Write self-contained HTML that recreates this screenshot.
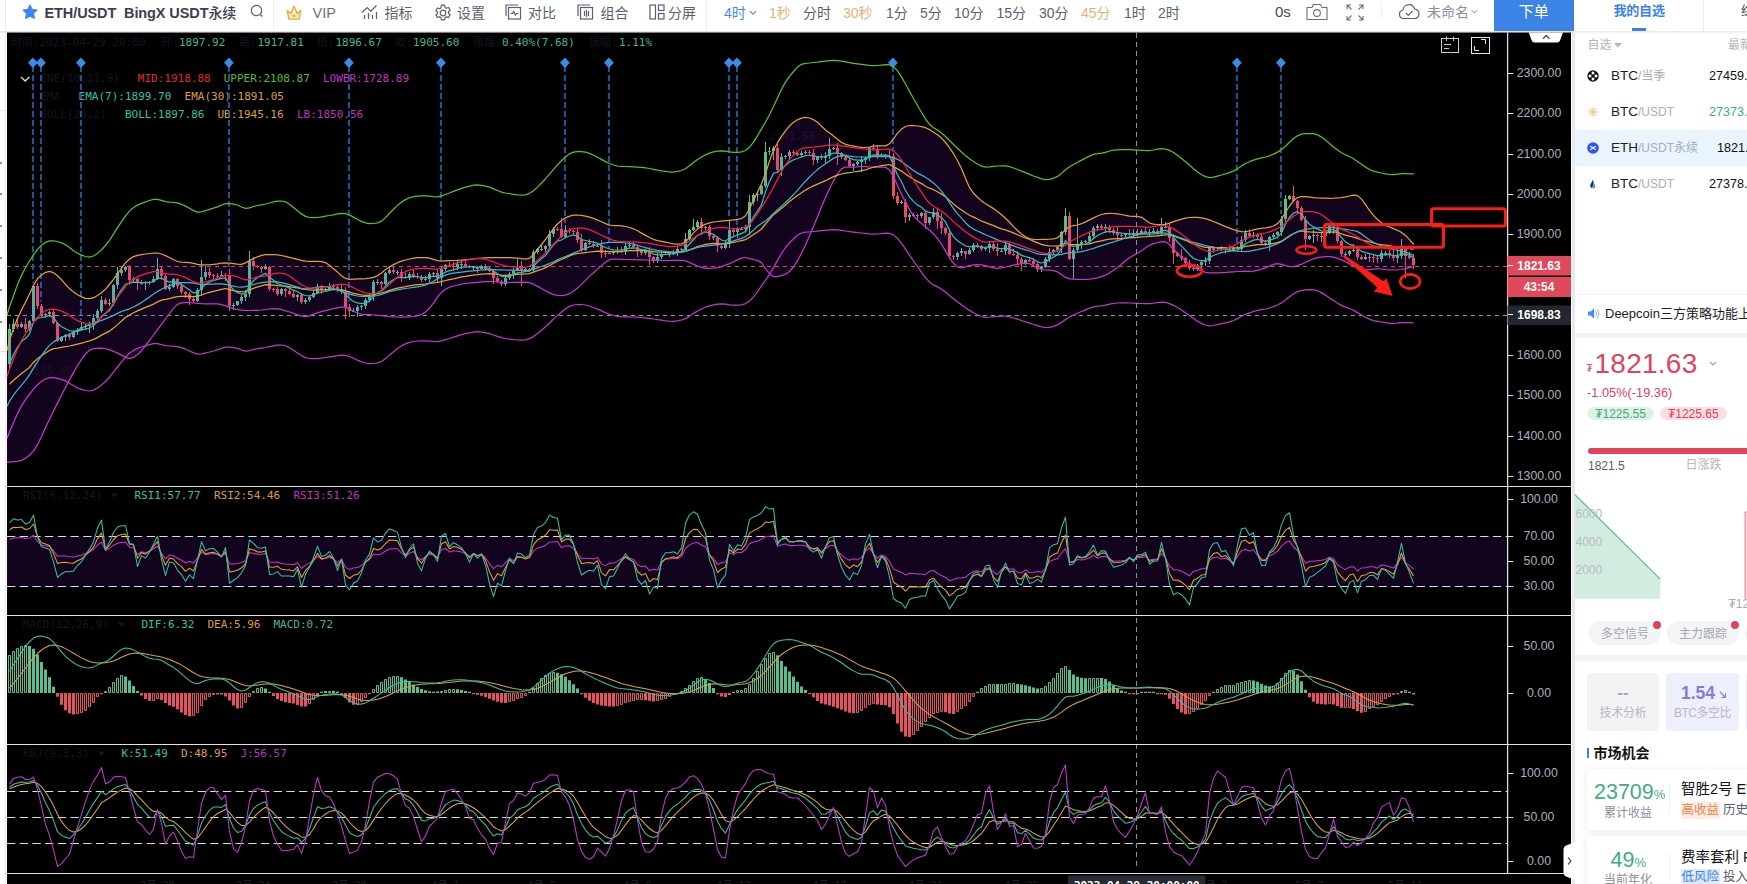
<!DOCTYPE html>
<html lang="zh-CN"><head><meta charset="utf-8"><title>ETH/USDT BingX USDT永续</title>
<style>
*{box-sizing:border-box}
html,body{margin:0;padding:0}
body{width:1747px;height:884px;overflow:hidden;background:#fff;position:relative;font-family:"Liberation Sans","Noto Sans CJK SC",sans-serif;color:#555b6c}
.a{position:absolute;white-space:nowrap}
.tb{position:absolute;top:0;height:26px;line-height:26px;font-size:14px;color:#5a5f70;white-space:nowrap}
.tb.o{color:#e2b27c}
.tb.b{color:#4a86e8}
.sep{position:absolute;width:1px;background:#eceef2}
svg.i{position:absolute;overflow:visible}
.row{position:absolute;left:1575px;width:172px;height:36px}
.nm{position:absolute;left:36px;top:0;line-height:36px;font-size:13.5px;color:#1c1c22;white-space:nowrap}
.nm i{font-style:normal;color:#a8adb8;font-size:12px}
.pr{position:absolute;top:0;line-height:37px;font-size:12.600px;color:#111;white-space:nowrap}
.pill{position:absolute;height:24px;border-radius:12px;background:#f3f4f6;color:#a3a7b0;font-size:12px;line-height:26px;text-align:center}
.dot{position:absolute;width:8px;height:8px;border-radius:4px;background:#e0435a}
</style></head>
<body>
<div class="a" style="left:0;top:0;width:7px;height:884px;background:#fff"></div>
<div class="sep" style="left:5px;top:0;height:884px;background:#e9ebef"></div>
<div class="a" style="left:0;top:31px;width:1574px;height:1px;background:#e4e6ea"></div>
<div class="a" style="left:0;top:32px;width:7px;height:1px;background:#eef0f3"></div>
<div class="a" style="left:0;top:162px;width:2px;height:2px;border-radius:1px;background:#666"></div>
<div class="a" style="left:0;top:193px;width:2px;height:2px;border-radius:1px;background:#666"></div>
<div class="a" style="left:0;top:225px;width:2px;height:2px;border-radius:1px;background:#666"></div>
<div class="a" style="left:0;top:257px;width:2px;height:2px;border-radius:1px;background:#666"></div>
<div class="a" style="left:0;top:289px;width:2px;height:2px;border-radius:1px;background:#666"></div>
<div class="a" style="left:0;top:321px;width:2px;height:2px;border-radius:1px;background:#666"></div>
<div class="a" style="left:0;top:351px;width:6px;height:1px;background:#dfe2e8"></div>
<div class="a" style="left:0;top:110px;width:6px;height:1px;background:#e6e8ec"></div>
<svg class="i" style="left:22px;top:4px" width="16" height="16" viewBox="0 0 16 16"><path d="M8 .8l2.2 4.6 5 .7-3.6 3.5.9 5L8 12.2 3.5 14.6l.9-5L.8 6.1l5-.7z" fill="#3d85ee" stroke="#3d85ee" stroke-width="1" stroke-linejoin="round"/></svg>
<div class="tb" style="left:44.5px;font-weight:bold;color:#3b3f51;font-size:14.5px;letter-spacing:-0.1px">ETH/USDT&nbsp; BingX USDT<span style="font-weight:500;font-size:14px">永续</span></div>
<svg class="i" style="left:250px;top:4px" width="14" height="15" viewBox="0 0 14 15"><circle cx="6.5" cy="6.5" r="5.2" fill="none" stroke="#5a5f70" stroke-width="1.2"/><path d="M10.5 10.5l1.8 2" stroke="#5a5f70" stroke-width="1.2"/></svg>
<div class="sep" style="left:273px;top:0;height:31px"></div>
<svg class="i" style="left:285px;top:4px" width="18" height="17" viewBox="0 0 18 17"><path d="M2.2 6.5l3.6 3L9 2.2l3.2 7.3 3.6-3-1.6 8.7H3.8z" fill="#fde9b8" stroke="#e9a93c" stroke-width="1.3" stroke-linejoin="round"/><path d="M7.3 12h3.4" stroke="#c98a1e" stroke-width="1.1"/></svg>
<div class="tb" style="left:312.5px;font-size:14.5px;color:#6a6f7e">VIP</div>
<svg class="i" style="left:361px;top:4px" width="18" height="16" viewBox="0 0 18 16"><g fill="none" stroke="#5a5f70" stroke-width="1.2"><path d="M1 8.5l5.2-5 3.6 3.6L15.5 1.5"/><path d="M3.5 11v4M7.5 9v6M11.5 11v4M15.5 8v7"/></g></svg>
<div class="tb" style="left:384.5px">指标</div>
<svg class="i" style="left:433.5px;top:3.5px" width="18" height="18" viewBox="0 0 18 18"><g fill="none" stroke="#5a5f70" stroke-width="1.2"><circle cx="9" cy="9" r="2.8"/><path d="M7.4 1.2h3.2l.5 2.2 1.3.75 2.15-.7 1.6 2.8-1.65 1.5v1.5l1.65 1.5-1.6 2.8-2.15-.7-1.3.75-.5 2.2H7.4l-.5-2.2-1.3-.75-2.15.7-1.6-2.8L3.5 9.75v-1.5L1.85 6.75l1.6-2.8 2.15.7 1.3-.75z" stroke-linejoin="round"/></g></svg>
<div class="tb" style="left:457px">设置</div>
<svg class="i" style="left:505px;top:3.5px" width="17" height="17" viewBox="0 0 17 17"><g fill="none" stroke="#5a5f70" stroke-width="1.2"><path d="M1 12V1h12"/><rect x="3.5" y="3.5" width="12" height="11.5"/><path d="M5.5 9.5h2l1.2-2 1.6 3.6 1.2-1.6h2"/></g></svg>
<div class="tb" style="left:528px">对比</div>
<svg class="i" style="left:577px;top:3.5px" width="17" height="17" viewBox="0 0 17 17"><g fill="none" stroke="#5a5f70" stroke-width="1.2"><path d="M1 12V1h12"/><rect x="3.5" y="3.5" width="12" height="11.5"/><path d="M7.5 7v5M9.5 6v7M11.5 7v5"/></g></svg>
<div class="tb" style="left:600.5px">组合</div>
<svg class="i" style="left:648.5px;top:3.5px" width="16" height="17" viewBox="0 0 16 17"><g fill="none" stroke="#5a5f70" stroke-width="1.2"><rect x="1" y="1" width="5.5" height="14"/><rect x="9.5" y="1" width="5.5" height="5.5"/><rect x="9.5" y="9.5" width="5.5" height="5.5"/></g></svg>
<div class="tb" style="left:668px">分屏</div>
<div class="sep" style="left:706px;top:0;height:31px"></div>
<div class="tb b" style="left:724px;top:-0.500px">4时</div>
<div class="tb o" style="left:769px;top:-0.500px">1秒</div>
<div class="tb " style="left:803px;top:-0.500px">分时</div>
<div class="tb o" style="left:843px;top:-0.500px">30秒</div>
<div class="tb " style="left:886px;top:-0.500px">1分</div>
<div class="tb " style="left:920px;top:-0.500px">5分</div>
<div class="tb " style="left:954px;top:-0.500px">10分</div>
<div class="tb " style="left:996.5px;top:-0.500px">15分</div>
<div class="tb " style="left:1039px;top:-0.500px">30分</div>
<div class="tb o" style="left:1081px;top:-0.500px">45分</div>
<div class="tb " style="left:1124px;top:-0.500px">1时</div>
<div class="tb " style="left:1158px;top:-0.500px">2时</div>
<svg class="i" style="left:749px;top:10px" width="8" height="6" viewBox="0 0 8 6"><path d="M1 1.2l3 3 3-3" fill="none" stroke="#4a86e8" stroke-width="1.1"/></svg>
<div class="tb" style="left:1275px;top:-1px;font-size:15px;color:#444a5a">0s</div>
<svg class="i" style="left:1306px;top:2.800px" width="22" height="18" viewBox="0 0 22 18"><g fill="none" stroke="#6a6f80" stroke-width="1.1"><path d="M1 4.5h5l1.4-3h7.2l1.4 3h5v12H1z" stroke-linejoin="round"/><circle cx="11" cy="10" r="3.4"/></g></svg>
<svg class="i" style="left:1346px;top:3.500px" width="18" height="17" viewBox="0 0 18 17"><g fill="none" stroke="#6a6f80" stroke-width="1.1"><path d="M1 5V1h4M1 1l4.5 4.5M13 1h4v4M17 1l-4.5 4.5M1 12v4h4M1 16l4.5-4.5M17 12v4h-4M17 16l-4.5-4.5"/></g></svg>
<div class="sep" style="left:1381px;top:3px;height:16px"></div>
<svg class="i" style="left:1398px;top:2.500px" width="22" height="17" viewBox="0 0 22 17"><g fill="none" stroke="#5a5f70" stroke-width="1.2"><path d="M5.5 15.5a4.3 4.3 0 0 1-.6-8.5A6 6 0 0 1 16.600 6a4.800 4.800 0 0 1 .4 9.500z" stroke-linejoin="round"/><path d="M7.800 9.800l2.500 2.500 4.300-4.500"/></g></svg>
<div class="tb" style="left:1427px;top:-1.500px;color:#8a8f9c">未命名</div>
<svg class="i" style="left:1471px;top:8.500px" width="7" height="6" viewBox="0 0 8 6"><path d="M1 1l3 3 3-3" fill="none" stroke="#6a6f80" stroke-width="1.1"/></svg>
<div class="a" style="left:1493.5px;top:0;width:80.5px;height:31px;background:#3b84e6;color:#fff;font-size:15px;line-height:24px;text-align:center">下单</div>
<svg width="1574" height="884" viewBox="0 0 1574 884" style="position:absolute;left:0;top:0">
<rect x="7" y="32.5" width="1564" height="852" fill="#000"/>
<rect x="7" y="536.5" width="1500" height="50" fill="#13041d"/>
<path d="M7 266.5H1507" stroke="#e0485c" stroke-width="1" stroke-dasharray="4 4" fill="none"/>
<path d="M7 315.5H1507" stroke="#8e98a8" stroke-width="1" stroke-dasharray="4 4" fill="none"/>
<path d="M7 536.5H1507" stroke="#dcdcdc" stroke-width="1" stroke-dasharray="8.3 4.4" fill="none"/>
<path d="M7 586.5H1507" stroke="#dcdcdc" stroke-width="1" stroke-dasharray="8.3 4.4" fill="none"/>
<path d="M7 791.5H1507" stroke="#dcdcdc" stroke-width="1" stroke-dasharray="8.3 4.4" fill="none"/>
<path d="M7 817.5H1507" stroke="#dcdcdc" stroke-width="1" stroke-dasharray="8.3 4.4" fill="none"/>
<path d="M7 843.5H1507" stroke="#dcdcdc" stroke-width="1" stroke-dasharray="8.3 4.4" fill="none"/>
<text x="11" y="46" fill="#131722" style="font-family:'DejaVu Sans Mono','Liberation Mono','Noto Sans CJK SC',monospace;font-size:11px" >时间:2023-04-29 20:00</text>
<text x="161" y="46" fill="#131722" style="font-family:'DejaVu Sans Mono','Liberation Mono','Noto Sans CJK SC',monospace;font-size:11px" >开:</text>
<text x="179" y="46" fill="#43b988" style="font-family:'DejaVu Sans Mono','Liberation Mono','Noto Sans CJK SC',monospace;font-size:11px" >1897.92</text>
<text x="239" y="46" fill="#131722" style="font-family:'DejaVu Sans Mono','Liberation Mono','Noto Sans CJK SC',monospace;font-size:11px" >高:</text>
<text x="257.5" y="46" fill="#43b988" style="font-family:'DejaVu Sans Mono','Liberation Mono','Noto Sans CJK SC',monospace;font-size:11px" >1917.81</text>
<text x="317" y="46" fill="#131722" style="font-family:'DejaVu Sans Mono','Liberation Mono','Noto Sans CJK SC',monospace;font-size:11px" >低:</text>
<text x="335.5" y="46" fill="#43b988" style="font-family:'DejaVu Sans Mono','Liberation Mono','Noto Sans CJK SC',monospace;font-size:11px" >1896.67</text>
<text x="395" y="46" fill="#131722" style="font-family:'DejaVu Sans Mono','Liberation Mono','Noto Sans CJK SC',monospace;font-size:11px" >收:</text>
<text x="413" y="46" fill="#43b988" style="font-family:'DejaVu Sans Mono','Liberation Mono','Noto Sans CJK SC',monospace;font-size:11px" >1905.60</text>
<text x="473" y="46" fill="#131722" style="font-family:'DejaVu Sans Mono','Liberation Mono','Noto Sans CJK SC',monospace;font-size:11px" >涨幅:</text>
<text x="502" y="46" fill="#43b988" style="font-family:'DejaVu Sans Mono','Liberation Mono','Noto Sans CJK SC',monospace;font-size:11px" >0.40%(7.68)</text>
<text x="589" y="46" fill="#131722" style="font-family:'DejaVu Sans Mono','Liberation Mono','Noto Sans CJK SC',monospace;font-size:11px" >振幅:</text>
<text x="619" y="46" fill="#43b988" style="font-family:'DejaVu Sans Mono','Liberation Mono','Noto Sans CJK SC',monospace;font-size:11px" >1.11%</text>
<text x="40.5" y="82" fill="#131722" style="font-family:'DejaVu Sans Mono','Liberation Mono','Noto Sans CJK SC',monospace;font-size:11px" >ENE(10,11,9)</text>
<text x="137.8" y="82" fill="#e02a2a" style="font-family:'DejaVu Sans Mono','Liberation Mono','Noto Sans CJK SC',monospace;font-size:11px" >MID:1918.88</text>
<text x="223.7" y="82" fill="#5bbf1f" style="font-family:'DejaVu Sans Mono','Liberation Mono','Noto Sans CJK SC',monospace;font-size:11px" >UPPER:2108.87</text>
<text x="323" y="82" fill="#c233c2" style="font-family:'DejaVu Sans Mono','Liberation Mono','Noto Sans CJK SC',monospace;font-size:11px" >LOWER:1728.89</text>
<text x="40.5" y="100" fill="#131722" style="font-family:'DejaVu Sans Mono','Liberation Mono','Noto Sans CJK SC',monospace;font-size:11px" >EMA</text>
<text x="78.6" y="100" fill="#2ec4a6" style="font-family:'DejaVu Sans Mono','Liberation Mono','Noto Sans CJK SC',monospace;font-size:11px" >EMA(7):1899.70</text>
<text x="184.6" y="100" fill="#dba03a" style="font-family:'DejaVu Sans Mono','Liberation Mono','Noto Sans CJK SC',monospace;font-size:11px" >EMA(30):1891.05</text>
<text x="40.5" y="118" fill="#131722" style="font-family:'DejaVu Sans Mono','Liberation Mono','Noto Sans CJK SC',monospace;font-size:11px" >BOLL(20,2)</text>
<text x="125" y="118" fill="#2ec4a6" style="font-family:'DejaVu Sans Mono','Liberation Mono','Noto Sans CJK SC',monospace;font-size:11px" >BOLL:1897.86</text>
<text x="217.4" y="118" fill="#dba03a" style="font-family:'DejaVu Sans Mono','Liberation Mono','Noto Sans CJK SC',monospace;font-size:11px" >UB:1945.16</text>
<text x="297" y="118" fill="#c233c2" style="font-family:'DejaVu Sans Mono','Liberation Mono','Noto Sans CJK SC',monospace;font-size:11px" >LB:1850.56</text>
<path d="M21 77l4.2 4 4.2-4" stroke="#dcdcdc" stroke-width="1.3" fill="none"/>
<text x="23" y="499" fill="#131722" style="font-family:'DejaVu Sans Mono','Liberation Mono','Noto Sans CJK SC',monospace;font-size:11px" >RSI(6,12,24)</text>
<text x="134.5" y="499" fill="#2ec4a6" style="font-family:'DejaVu Sans Mono','Liberation Mono','Noto Sans CJK SC',monospace;font-size:11px" >RSI1:57.77</text>
<text x="214" y="499" fill="#dba03a" style="font-family:'DejaVu Sans Mono','Liberation Mono','Noto Sans CJK SC',monospace;font-size:11px" >RSI2:54.46</text>
<text x="293.5" y="499" fill="#c233c2" style="font-family:'DejaVu Sans Mono','Liberation Mono','Noto Sans CJK SC',monospace;font-size:11px" >RSI3:51.26</text>
<path d="M111 493.5h7l-3.5 4z" fill="#131722"/>
<text x="23" y="628" fill="#131722" style="font-family:'DejaVu Sans Mono','Liberation Mono','Noto Sans CJK SC',monospace;font-size:11px" >MACD(12,26,9)</text>
<text x="141.5" y="628" fill="#2ec4a6" style="font-family:'DejaVu Sans Mono','Liberation Mono','Noto Sans CJK SC',monospace;font-size:11px" >DIF:6.32</text>
<text x="207.5" y="628" fill="#dba03a" style="font-family:'DejaVu Sans Mono','Liberation Mono','Noto Sans CJK SC',monospace;font-size:11px" >DEA:5.96</text>
<text x="273.5" y="628" fill="#43b988" style="font-family:'DejaVu Sans Mono','Liberation Mono','Noto Sans CJK SC',monospace;font-size:11px" >MACD:0.72</text>
<path d="M118 622.5h7l-3.5 4z" fill="#131722"/>
<text x="23" y="757" fill="#131722" style="font-family:'DejaVu Sans Mono','Liberation Mono','Noto Sans CJK SC',monospace;font-size:11px" >KDJ(9,3,3)</text>
<text x="121.5" y="757" fill="#2ec4a6" style="font-family:'DejaVu Sans Mono','Liberation Mono','Noto Sans CJK SC',monospace;font-size:11px" >K:51.49</text>
<text x="181" y="757" fill="#dba03a" style="font-family:'DejaVu Sans Mono','Liberation Mono','Noto Sans CJK SC',monospace;font-size:11px" >D:48.95</text>
<text x="240.5" y="757" fill="#c233c2" style="font-family:'DejaVu Sans Mono','Liberation Mono','Noto Sans CJK SC',monospace;font-size:11px" >J:56.57</text>
<path d="M98 751.5h7l-3.5 4z" fill="#131722"/>
<text x="14" y="374" fill="#0b0e15" style="font-family:'DejaVu Sans Mono','Liberation Mono','Noto Sans CJK SC',monospace;font-size:11px" >← 1565.06</text>
<text x="769" y="140" fill="#0d1119" style="font-family:'DejaVu Sans Mono','Liberation Mono','Noto Sans CJK SC',monospace;font-size:11px" >2141.55 →</text>
<path d="M32.9 66V283.0" stroke="#23579c" stroke-width="2" stroke-dasharray="6 3" fill="none"/>
<path d="M32.9 57.5l4.9 5.2-4.9 5.2-4.9-5.2z" fill="#3d8be9"/>
<path d="M40.9 66V301.6" stroke="#23579c" stroke-width="2" stroke-dasharray="6 3" fill="none"/>
<path d="M40.9 57.5l4.9 5.2-4.9 5.2-4.9-5.2z" fill="#3d8be9"/>
<path d="M80.9 66V320.3" stroke="#23579c" stroke-width="2" stroke-dasharray="6 3" fill="none"/>
<path d="M80.9 57.5l4.9 5.2-4.9 5.2-4.9-5.2z" fill="#3d8be9"/>
<path d="M228.9 66V266.7" stroke="#23579c" stroke-width="2" stroke-dasharray="6 3" fill="none"/>
<path d="M228.9 57.5l4.9 5.2-4.9 5.2-4.9-5.2z" fill="#3d8be9"/>
<path d="M348.9 66V301.6" stroke="#23579c" stroke-width="2" stroke-dasharray="6 3" fill="none"/>
<path d="M348.9 57.5l4.9 5.2-4.9 5.2-4.9-5.2z" fill="#3d8be9"/>
<path d="M440.9 66V264.3" stroke="#23579c" stroke-width="2" stroke-dasharray="6 3" fill="none"/>
<path d="M440.9 57.5l4.9 5.2-4.9 5.2-4.9-5.2z" fill="#3d8be9"/>
<path d="M564.9 66V223.3" stroke="#23579c" stroke-width="2" stroke-dasharray="6 3" fill="none"/>
<path d="M564.9 57.5l4.9 5.2-4.9 5.2-4.9-5.2z" fill="#3d8be9"/>
<path d="M608.9 66V248.9" stroke="#23579c" stroke-width="2" stroke-dasharray="6 3" fill="none"/>
<path d="M608.9 57.5l4.9 5.2-4.9 5.2-4.9-5.2z" fill="#3d8be9"/>
<path d="M728.9 66V219.0" stroke="#23579c" stroke-width="2" stroke-dasharray="6 3" fill="none"/>
<path d="M728.9 57.5l4.9 5.2-4.9 5.2-4.9-5.2z" fill="#3d8be9"/>
<path d="M736.9 66V224.8" stroke="#23579c" stroke-width="2" stroke-dasharray="6 3" fill="none"/>
<path d="M736.9 57.5l4.9 5.2-4.9 5.2-4.9-5.2z" fill="#3d8be9"/>
<path d="M892.9 66V151.2" stroke="#23579c" stroke-width="2" stroke-dasharray="6 3" fill="none"/>
<path d="M892.9 57.5l4.9 5.2-4.9 5.2-4.9-5.2z" fill="#3d8be9"/>
<path d="M1236.9 66V244.4" stroke="#23579c" stroke-width="2" stroke-dasharray="6 3" fill="none"/>
<path d="M1236.9 57.5l4.9 5.2-4.9 5.2-4.9-5.2z" fill="#3d8be9"/>
<path d="M1280.9 66V213.8" stroke="#23579c" stroke-width="2" stroke-dasharray="6 3" fill="none"/>
<path d="M1280.9 57.5l4.9 5.2-4.9 5.2-4.9-5.2z" fill="#3d8be9"/>
<path d="M9.5 324V370M13.5 319V332M21.5 322V328M29.5 320V331M33.5 285V322M45.5 313V318M49.5 311V317M61.5 336V342M65.5 334V341M73.5 331V338M77.5 328V335M81.5 322V331M85.5 324V330M89.5 322V333M93.5 314V330M97.5 309V323M101.5 296V313M109.5 299V306M113.5 284V306M117.5 267V289M121.5 266V276M125.5 266V272M133.5 277V283M145.5 281V290M149.5 281V285M153.5 276V283M157.5 258V280M169.5 284V291M173.5 278V288M197.5 288V302M201.5 260V296M205.5 266V280M221.5 271V277M233.5 303V310M237.5 301V306M241.5 295V304M245.5 290V301M249.5 251V297M265.5 264V270M281.5 288V296M297.5 294V301M305.5 298V304M309.5 296V302M313.5 291V298M317.5 284V294M325.5 288V292M329.5 283V290M353.5 308V312M357.5 305V317M361.5 305V310M365.5 298V309M369.5 294V302M373.5 280V301M377.5 279V285M385.5 272V285M389.5 266V274M397.5 270V275M409.5 272V280M425.5 276V281M429.5 272V282M433.5 272V276M441.5 266V286M445.5 264V271M457.5 261V270M461.5 260V269M473.5 266V270M481.5 265V270M505.5 275V286M509.5 272V280M513.5 268V279M517.5 259V271M525.5 267V272M533.5 250V272M537.5 248V254M541.5 244V251M545.5 245V252M549.5 230V249M553.5 227V237M565.5 225V238M585.5 242V251M597.5 245V247M613.5 251V255M617.5 247V254M625.5 243V255M629.5 242V248M645.5 249V255M657.5 253V263M661.5 252V259M669.5 252V257M677.5 246V256M685.5 233V252M689.5 229V240M693.5 219V231M697.5 220V229M705.5 226V230M725.5 241V249M729.5 221V248M737.5 227V238M741.5 227V230M745.5 225V232M749.5 195V235M753.5 193V205M757.5 192V201M761.5 185V195M765.5 142V188M769.5 147V155M773.5 146V160M781.5 153V176M785.5 155V159M789.5 150V159M801.5 151V157M805.5 150V154M817.5 156V163M825.5 152V163M829.5 138V159M833.5 147V150M853.5 163V171M857.5 161V166M861.5 156V172M865.5 157V164M869.5 147V161M881.5 153V157M901.5 200V204M909.5 213V221M913.5 213V217M921.5 212V218M929.5 217V225M933.5 208V219M957.5 252V260M961.5 248V256M969.5 248V255M973.5 243V252M985.5 247V251M989.5 241V253M1001.5 248V252M1005.5 243V255M1025.5 259V265M1041.5 266V272M1045.5 257V268M1049.5 248V262M1053.5 249V255M1057.5 246V252M1061.5 231V253M1065.5 208V235M1073.5 248V279M1077.5 218V252M1081.5 240V249M1085.5 240V243M1089.5 233V244M1093.5 226V238M1097.5 224V231M1105.5 224V233M1125.5 233V237M1133.5 229V238M1141.5 229V235M1149.5 229V237M1153.5 228V234M1161.5 218V236M1165.5 222V228M1197.5 264V271M1201.5 261V268M1205.5 257V266M1209.5 246V264M1217.5 247V251M1221.5 246V251M1233.5 247V252M1241.5 236V252M1245.5 230V242M1253.5 232V238M1269.5 236V251M1273.5 233V238M1277.5 231V236M1281.5 216V236M1285.5 195V222M1289.5 195V200M1309.5 235V240M1313.5 230V243M1321.5 233V242M1325.5 226V237M1329.5 223V234M1345.5 252V256M1349.5 250V256M1353.5 244V252M1365.5 254V260M1381.5 250V262M1385.5 251V256M1397.5 250V263M1401.5 239V259" stroke="#5abf8f" stroke-width="1" fill="none"/><path d="M8 329h3v35h-3zM12 324h3v5h-3zM20 324h3v3h-3zM28 321h3v8h-3zM32 286h3v35h-3zM44 314h3v1h-3zM48 312h3v2h-3zM60 337h3v4h-3zM64 335h3v2h-3zM72 332h3v5h-3zM76 330h3v2h-3zM80 327h3v3h-3zM84 326h3v1h-3zM88 325h3v1h-3zM92 318h3v7h-3zM96 311h3v7h-3zM100 300h3v11h-3zM108 303h3v1h-3zM112 285h3v18h-3zM116 273h3v12h-3zM120 270h3v3h-3zM124 267h3v3h-3zM132 279h3v1h-3zM144 282h3v1h-3zM148 282h3v1h-3zM152 279h3v3h-3zM156 269h3v10h-3zM168 287h3v2h-3zM172 279h3v8h-3zM196 290h3v11h-3zM200 277h3v13h-3zM204 272h3v5h-3zM220 275h3v1h-3zM232 305h3v1h-3zM236 301h3v4h-3zM240 297h3v4h-3zM244 294h3v3h-3zM248 261h3v33h-3zM264 267h3v2h-3zM280 289h3v5h-3zM296 295h3v2h-3zM304 300h3v2h-3zM308 297h3v3h-3zM312 293h3v4h-3zM316 287h3v6h-3zM324 289h3v1h-3zM328 286h3v3h-3zM352 311h3v1h-3zM356 307h3v4h-3zM360 306h3v1h-3zM364 300h3v6h-3zM368 296h3v4h-3zM372 282h3v14h-3zM376 282h3v1h-3zM384 273h3v11h-3zM388 270h3v3h-3zM396 272h3v1h-3zM408 274h3v4h-3zM424 279h3v1h-3zM428 274h3v5h-3zM432 273h3v1h-3zM440 269h3v9h-3zM444 265h3v4h-3zM456 264h3v3h-3zM460 264h3v1h-3zM472 267h3v1h-3zM480 266h3v3h-3zM504 278h3v6h-3zM508 274h3v4h-3zM512 271h3v3h-3zM516 268h3v3h-3zM524 269h3v2h-3zM532 252h3v18h-3zM536 249h3v3h-3zM540 249h3v1h-3zM544 246h3v3h-3zM548 234h3v12h-3zM552 229h3v5h-3zM564 230h3v7h-3zM584 243h3v7h-3zM596 246h3v1h-3zM612 252h3v1h-3zM616 251h3v1h-3zM624 246h3v5h-3zM628 245h3v1h-3zM644 251h3v2h-3zM656 257h3v4h-3zM660 254h3v3h-3zM668 253h3v1h-3zM676 249h3v4h-3zM684 239h3v11h-3zM688 230h3v9h-3zM692 227h3v3h-3zM696 222h3v5h-3zM704 227h3v1h-3zM724 244h3v4h-3zM728 230h3v14h-3zM736 229h3v3h-3zM740 229h3v1h-3zM744 227h3v2h-3zM748 202h3v25h-3zM752 195h3v7h-3zM756 194h3v1h-3zM760 186h3v8h-3zM764 152h3v34h-3zM768 151h3v1h-3zM772 148h3v3h-3zM780 157h3v13h-3zM784 156h3v1h-3zM788 152h3v4h-3zM800 153h3v2h-3zM804 152h3v1h-3zM816 157h3v3h-3zM824 156h3v2h-3zM828 149h3v7h-3zM832 148h3v1h-3zM852 164h3v2h-3zM856 162h3v2h-3zM860 160h3v2h-3zM864 158h3v2h-3zM868 148h3v10h-3zM880 155h3v1h-3zM900 202h3v1h-3zM908 215h3v2h-3zM912 215h3v1h-3zM920 213h3v3h-3zM928 217h3v6h-3zM932 212h3v5h-3zM956 253h3v4h-3zM960 251h3v2h-3zM968 250h3v4h-3zM972 245h3v5h-3zM984 248h3v1h-3zM988 244h3v4h-3zM1000 251h3v1h-3zM1004 245h3v6h-3zM1024 260h3v3h-3zM1040 267h3v2h-3zM1044 259h3v8h-3zM1048 252h3v7h-3zM1052 250h3v2h-3zM1056 247h3v3h-3zM1060 232h3v15h-3zM1064 216h3v16h-3zM1072 250h3v9h-3zM1076 245h3v5h-3zM1080 242h3v3h-3zM1084 241h3v1h-3zM1088 236h3v5h-3zM1092 228h3v8h-3zM1096 226h3v2h-3zM1104 227h3v1h-3zM1124 234h3v1h-3zM1132 233h3v2h-3zM1140 231h3v3h-3zM1148 232h3v1h-3zM1152 231h3v1h-3zM1160 227h3v6h-3zM1164 227h3v1h-3zM1196 265h3v4h-3zM1200 262h3v3h-3zM1204 261h3v1h-3zM1208 248h3v13h-3zM1216 250h3v1h-3zM1220 248h3v2h-3zM1232 248h3v2h-3zM1240 240h3v9h-3zM1244 233h3v7h-3zM1252 235h3v1h-3zM1268 237h3v8h-3zM1272 235h3v2h-3zM1276 232h3v3h-3zM1280 219h3v13h-3zM1284 199h3v20h-3zM1288 196h3v3h-3zM1308 236h3v3h-3zM1312 235h3v1h-3zM1320 236h3v1h-3zM1324 233h3v3h-3zM1328 226h3v7h-3zM1344 254h3v1h-3zM1348 251h3v3h-3zM1352 250h3v1h-3zM1364 257h3v2h-3zM1380 253h3v6h-3zM1384 253h3v1h-3zM1396 256h3v2h-3zM1400 249h3v7h-3z" fill="#5abf8f"/><path d="M17.5 319V329M25.5 318V332M37.5 283V309M41.5 304V317M53.5 309V324M57.5 322V342M69.5 333V340M105.5 298V305M129.5 265V285M137.5 278V290M141.5 280V285M161.5 267V280M165.5 273V290M177.5 278V289M181.5 283V294M185.5 291V298M189.5 292V305M193.5 297V303M209.5 268V278M213.5 274V280M217.5 273V279M225.5 273V281M229.5 269V311M253.5 257V270M257.5 265V268M261.5 266V273M269.5 266V291M273.5 288V292M277.5 287V296M285.5 288V297M289.5 287V295M293.5 290V298M301.5 293V304M321.5 285V294M333.5 284V288M337.5 285V292M341.5 284V294M345.5 287V319M349.5 304V317M381.5 281V289M393.5 267V274M401.5 269V282M405.5 273V279M413.5 270V278M417.5 273V279M421.5 275V282M437.5 269V282M449.5 262V267M453.5 262V271M465.5 260V268M469.5 265V268M477.5 266V273M485.5 264V271M489.5 266V272M493.5 269V284M497.5 276V283M501.5 280V286M521.5 261V286M529.5 268V272M557.5 227V231M561.5 218V238M569.5 228V233M573.5 230V234M577.5 228V243M581.5 234V252M589.5 239V245M593.5 241V248M601.5 240V258M605.5 250V257M609.5 251V254M621.5 247V253M633.5 241V249M637.5 245V257M641.5 249V255M649.5 247V265M653.5 256V263M665.5 253V255M673.5 250V255M681.5 248V252M701.5 218V235M709.5 225V240M713.5 235V240M717.5 236V252M721.5 244V249M733.5 229V237M777.5 144V172M793.5 150V155M797.5 152V156M809.5 150V154M813.5 149V165M821.5 154V160M837.5 143V165M841.5 152V159M845.5 155V161M849.5 158V167M873.5 144V150M877.5 145V159M885.5 154V159M889.5 150V158M893.5 153V199M897.5 192V205M905.5 199V223M917.5 214V219M925.5 211V229M937.5 208V229M941.5 213V234M945.5 227V235M949.5 229V259M953.5 255V260M965.5 251V259M977.5 243V248M981.5 245V251M993.5 241V251M997.5 243V256M1009.5 243V255M1013.5 249V256M1017.5 251V265M1021.5 257V271M1029.5 257V262M1033.5 258V266M1037.5 262V272M1069.5 212V260M1101.5 224V230M1109.5 225V233M1113.5 228V235M1117.5 227V241M1121.5 233V237M1129.5 229V236M1137.5 229V237M1145.5 227V234M1157.5 229V236M1169.5 223V242M1173.5 234V264M1177.5 252V257M1181.5 249V261M1185.5 257V264M1189.5 260V270M1193.5 265V271M1213.5 246V253M1225.5 247V254M1229.5 245V252M1237.5 246V250M1249.5 229V238M1257.5 233V239M1261.5 233V244M1265.5 240V246M1293.5 186V202M1297.5 200V213M1301.5 206V221M1305.5 216V250M1317.5 234V241M1333.5 224V234M1337.5 225V243M1341.5 240V257M1357.5 249V260M1361.5 255V260M1369.5 253V262M1373.5 254V263M1377.5 255V263M1389.5 250V258M1393.5 250V261M1405.5 247V278M1409.5 252V259M1413.5 254V269" stroke="#ea5062" stroke-width="1" fill="none"/><path d="M16 324h3v3h-3zM24 324h3v5h-3zM36 286h3v20h-3zM40 306h3v9h-3zM52 312h3v11h-3zM56 323h3v18h-3zM68 335h3v2h-3zM104 300h3v4h-3zM128 267h3v13h-3zM136 279h3v4h-3zM140 283h3v1h-3zM160 269h3v7h-3zM164 276h3v13h-3zM176 279h3v7h-3zM180 286h3v6h-3zM184 292h3v2h-3zM188 294h3v5h-3zM192 299h3v2h-3zM208 272h3v3h-3zM212 275h3v1h-3zM216 276h3v1h-3zM224 275h3v1h-3zM228 276h3v30h-3zM252 261h3v5h-3zM256 266h3v1h-3zM260 267h3v2h-3zM268 267h3v22h-3zM272 289h3v1h-3zM276 289h3v5h-3zM284 289h3v2h-3zM288 291h3v3h-3zM292 294h3v3h-3zM300 295h3v7h-3zM320 287h3v3h-3zM332 286h3v1h-3zM336 287h3v3h-3zM340 290h3v2h-3zM344 292h3v15h-3zM348 307h3v4h-3zM380 282h3v2h-3zM392 270h3v2h-3zM400 272h3v5h-3zM404 277h3v1h-3zM412 274h3v2h-3zM416 276h3v1h-3zM420 277h3v3h-3zM436 273h3v5h-3zM448 265h3v1h-3zM452 266h3v1h-3zM464 264h3v2h-3zM468 266h3v1h-3zM476 267h3v2h-3zM484 266h3v3h-3zM488 269h3v2h-3zM492 271h3v7h-3zM496 278h3v4h-3zM500 282h3v2h-3zM520 268h3v3h-3zM528 269h3v1h-3zM556 229h3v1h-3zM560 229h3v8h-3zM568 230h3v1h-3zM572 231h3v1h-3zM576 232h3v8h-3zM580 240h3v10h-3zM588 243h3v1h-3zM592 244h3v2h-3zM600 246h3v7h-3zM604 253h3v1h-3zM608 253h3v1h-3zM620 251h3v1h-3zM632 245h3v2h-3zM636 247h3v4h-3zM640 251h3v2h-3zM648 251h3v6h-3zM652 257h3v4h-3zM664 254h3v1h-3zM672 253h3v1h-3zM680 249h3v1h-3zM700 222h3v6h-3zM708 227h3v9h-3zM712 236h3v2h-3zM716 238h3v8h-3zM720 246h3v2h-3zM732 230h3v2h-3zM776 148h3v22h-3zM792 152h3v1h-3zM796 153h3v2h-3zM808 152h3v1h-3zM812 153h3v7h-3zM820 157h3v1h-3zM836 148h3v5h-3zM840 153h3v4h-3zM844 157h3v3h-3zM848 160h3v6h-3zM872 148h3v1h-3zM876 149h3v7h-3zM884 155h3v1h-3zM888 156h3v1h-3zM892 156h3v40h-3zM896 196h3v7h-3zM904 202h3v15h-3zM916 215h3v1h-3zM924 213h3v10h-3zM936 212h3v9h-3zM940 221h3v7h-3zM944 228h3v5h-3zM948 233h3v23h-3zM952 256h3v1h-3zM964 251h3v3h-3zM976 245h3v1h-3zM980 246h3v3h-3zM992 244h3v5h-3zM996 249h3v2h-3zM1008 245h3v9h-3zM1012 254h3v1h-3zM1016 255h3v4h-3zM1020 259h3v4h-3zM1028 260h3v1h-3zM1032 261h3v3h-3zM1036 264h3v5h-3zM1068 216h3v43h-3zM1100 226h3v2h-3zM1108 227h3v3h-3zM1112 230h3v3h-3zM1116 233h3v2h-3zM1120 235h3v1h-3zM1128 234h3v1h-3zM1136 233h3v1h-3zM1144 231h3v2h-3zM1156 231h3v2h-3zM1168 227h3v11h-3zM1172 238h3v15h-3zM1176 253h3v3h-3zM1180 256h3v2h-3zM1184 258h3v5h-3zM1188 263h3v5h-3zM1192 268h3v1h-3zM1212 248h3v2h-3zM1224 248h3v1h-3zM1228 249h3v1h-3zM1236 248h3v1h-3zM1248 233h3v3h-3zM1256 235h3v2h-3zM1260 237h3v6h-3zM1264 243h3v2h-3zM1292 196h3v5h-3zM1296 201h3v7h-3zM1300 208h3v12h-3zM1304 220h3v19h-3zM1316 235h3v1h-3zM1332 226h3v2h-3zM1336 228h3v13h-3zM1340 241h3v13h-3zM1356 250h3v7h-3zM1360 257h3v2h-3zM1368 257h3v1h-3zM1372 257h3v1h-3zM1376 258h3v1h-3zM1388 253h3v2h-3zM1392 255h3v3h-3zM1404 249h3v7h-3zM1408 256h3v2h-3zM1412 258h3v7h-3z" fill="#ea5062"/>
<path d="M7.0 350.6L9.5 340.3L13.5 328.7L17.5 318.3L21.5 309.9L25.5 302.3L29.5 293.9L33.5 285.2L37.5 278.8L41.5 274.9L45.5 272.3L49.5 271.4L53.5 272.7L57.5 275.7L61.5 279.7L65.5 284.4L69.5 288.8L73.5 292.1L77.5 294.7L81.5 296.8L85.5 298.3L89.5 298.7L93.5 297.7L97.5 295.5L101.5 292.7L105.5 289.1L109.5 284.5L113.5 279.3L117.5 273.8L121.5 268.0L125.5 262.8L129.5 259.0L133.5 256.6L137.5 255.3L141.5 254.6L145.5 254.0L149.5 253.5L153.5 253.0L157.5 253.0L161.5 254.0L165.5 255.6L169.5 257.5L173.5 259.7L177.5 261.5L181.5 262.2L185.5 262.4L189.5 262.7L193.5 263.4L197.5 264.3L201.5 264.8L205.5 264.8L209.5 264.6L213.5 264.3L217.5 263.8L221.5 263.1L225.5 262.8L229.5 263.1L233.5 263.6L237.5 264.2L241.5 264.3L245.5 262.9L249.5 260.6L253.5 258.6L257.5 256.8L261.5 255.4L265.5 254.7L269.5 254.5L273.5 254.5L277.5 254.8L281.5 255.5L285.5 256.4L289.5 257.4L293.5 258.4L297.5 259.4L301.5 260.4L305.5 261.1L309.5 261.3L313.5 261.4L317.5 261.4L321.5 261.6L325.5 262.6L329.5 265.2L333.5 268.7L337.5 272.1L341.5 275.7L345.5 278.4L349.5 279.4L353.5 279.1L357.5 278.9L361.5 278.8L365.5 278.7L369.5 278.2L373.5 277.3L377.5 275.7L381.5 272.9L385.5 269.6L389.5 266.8L393.5 264.6L397.5 262.7L401.5 261.1L405.5 260.0L409.5 259.0L413.5 258.1L417.5 257.6L421.5 257.5L425.5 257.7L429.5 258.2L433.5 259.4L437.5 260.7L441.5 261.1L445.5 260.9L449.5 260.7L453.5 260.5L457.5 260.3L461.5 260.0L465.5 259.7L469.5 259.3L473.5 258.9L477.5 258.5L481.5 258.1L485.5 257.8L489.5 257.6L493.5 257.6L497.5 257.6L501.5 257.6L505.5 257.6L509.5 257.6L513.5 257.8L517.5 258.2L521.5 258.6L525.5 259.1L529.5 258.2L533.5 254.5L537.5 249.5L541.5 244.5L545.5 239.4L549.5 234.1L553.5 228.8L557.5 224.0L561.5 220.5L565.5 217.8L569.5 216.1L573.5 215.2L577.5 215.0L581.5 215.4L585.5 216.2L589.5 217.1L593.5 218.3L597.5 220.0L601.5 221.8L605.5 223.6L609.5 225.1L613.5 225.5L617.5 225.5L621.5 225.8L625.5 226.5L629.5 227.5L633.5 228.8L637.5 230.7L641.5 233.1L645.5 235.4L649.5 237.5L653.5 239.3L657.5 240.6L661.5 241.4L665.5 242.2L669.5 243.0L673.5 243.8L677.5 244.2L681.5 243.8L685.5 241.7L689.5 237.5L693.5 232.9L697.5 229.1L701.5 226.1L705.5 224.1L709.5 222.9L713.5 222.0L717.5 221.5L721.5 221.1L725.5 220.7L729.5 220.3L733.5 219.9L737.5 219.3L741.5 218.6L745.5 215.7L749.5 208.8L753.5 200.1L757.5 192.0L761.5 183.8L765.5 173.5L769.5 161.1L773.5 150.3L777.5 142.7L781.5 136.4L785.5 130.8L789.5 126.0L793.5 122.3L797.5 119.8L801.5 118.1L805.5 117.3L809.5 118.0L813.5 119.7L817.5 122.3L821.5 126.1L825.5 130.0L829.5 133.1L833.5 136.0L837.5 139.3L841.5 142.4L845.5 144.3L849.5 145.3L853.5 146.1L857.5 146.9L861.5 147.4L865.5 147.5L869.5 147.1L873.5 146.2L877.5 145.8L881.5 145.9L885.5 145.9L889.5 143.8L893.5 138.6L897.5 133.1L901.5 129.1L905.5 126.5L909.5 125.5L913.5 125.5L917.5 126.0L921.5 126.7L925.5 127.7L929.5 129.6L933.5 132.2L937.5 134.8L941.5 138.1L945.5 142.5L949.5 147.7L953.5 153.7L957.5 160.5L961.5 168.5L965.5 178.5L969.5 187.6L973.5 193.2L977.5 197.2L981.5 200.9L985.5 203.7L989.5 206.1L993.5 208.6L997.5 211.6L1001.5 214.8L1005.5 218.2L1009.5 222.3L1013.5 226.6L1017.5 230.5L1021.5 233.9L1025.5 236.7L1029.5 238.5L1033.5 239.3L1037.5 239.5L1041.5 239.4L1045.5 239.3L1049.5 239.2L1053.5 239.0L1057.5 237.7L1061.5 234.2L1065.5 229.4L1069.5 226.5L1073.5 225.6L1077.5 225.0L1081.5 223.7L1085.5 221.9L1089.5 219.9L1093.5 217.9L1097.5 216.0L1101.5 214.5L1105.5 213.6L1109.5 213.3L1113.5 213.5L1117.5 213.8L1121.5 214.5L1125.5 215.4L1129.5 216.1L1133.5 216.3L1137.5 216.3L1141.5 217.3L1145.5 220.1L1149.5 223.0L1153.5 224.2L1157.5 224.5L1161.5 224.7L1165.5 224.3L1169.5 223.1L1173.5 221.6L1177.5 220.3L1181.5 219.1L1185.5 218.1L1189.5 217.5L1193.5 217.3L1197.5 217.3L1201.5 217.8L1205.5 218.7L1209.5 219.9L1213.5 221.5L1217.5 223.2L1221.5 224.9L1225.5 226.6L1229.5 228.2L1233.5 229.7L1237.5 230.9L1241.5 231.7L1245.5 231.8L1249.5 231.0L1253.5 229.8L1257.5 228.9L1261.5 228.3L1265.5 227.9L1269.5 227.2L1273.5 226.0L1277.5 223.6L1281.5 219.0L1285.5 212.5L1289.5 206.0L1293.5 200.7L1297.5 197.6L1301.5 196.5L1305.5 196.6L1309.5 197.1L1313.5 197.6L1317.5 197.9L1321.5 198.1L1325.5 198.2L1329.5 198.3L1333.5 198.2L1337.5 198.0L1341.5 197.6L1345.5 196.9L1349.5 196.0L1353.5 195.1L1357.5 195.6L1361.5 199.1L1365.5 204.6L1369.5 210.4L1373.5 215.4L1377.5 219.5L1381.5 222.7L1385.5 225.1L1389.5 227.0L1393.5 228.7L1397.5 230.3L1401.5 232.4L1405.5 235.4L1409.5 239.6L1413.8 244.5L1413.8 266.6L1409.5 267.6L1405.5 268.7L1401.5 269.5L1397.5 269.9L1393.5 270.0L1389.5 269.9L1385.5 269.5L1381.5 269.0L1377.5 268.8L1373.5 269.1L1369.5 269.6L1365.5 269.6L1361.5 268.7L1357.5 267.5L1353.5 265.9L1349.5 263.9L1345.5 261.8L1341.5 259.9L1337.5 258.3L1333.5 257.1L1329.5 256.7L1325.5 256.7L1321.5 257.1L1317.5 257.7L1313.5 258.8L1309.5 260.5L1305.5 262.5L1301.5 264.3L1297.5 265.7L1293.5 266.6L1289.5 266.6L1285.5 265.7L1281.5 264.4L1277.5 263.6L1273.5 264.4L1269.5 266.1L1265.5 267.8L1261.5 269.1L1257.5 270.3L1253.5 271.1L1249.5 271.3L1245.5 271.3L1241.5 271.4L1237.5 271.5L1233.5 271.8L1229.5 272.1L1225.5 272.4L1221.5 272.6L1217.5 272.8L1213.5 272.9L1209.5 272.9L1205.5 272.3L1201.5 271.0L1197.5 269.4L1193.5 267.2L1189.5 264.4L1185.5 261.0L1181.5 257.4L1177.5 253.4L1173.5 249.0L1169.5 244.6L1165.5 241.8L1161.5 241.6L1157.5 242.5L1153.5 243.6L1149.5 245.3L1145.5 247.8L1141.5 250.7L1137.5 253.2L1133.5 255.4L1129.5 257.7L1125.5 260.8L1121.5 264.2L1117.5 267.4L1113.5 270.3L1109.5 273.0L1105.5 275.1L1101.5 276.6L1097.5 277.8L1093.5 278.7L1089.5 279.1L1085.5 279.4L1081.5 279.5L1077.5 279.4L1073.5 279.2L1069.5 278.8L1065.5 277.4L1061.5 274.6L1057.5 271.9L1053.5 270.6L1049.5 270.2L1045.5 270.0L1041.5 269.5L1037.5 268.1L1033.5 265.7L1029.5 263.6L1025.5 263.1L1021.5 263.6L1017.5 264.3L1013.5 265.2L1009.5 266.2L1005.5 267.0L1001.5 267.8L997.5 268.3L993.5 267.9L989.5 266.8L985.5 265.7L981.5 264.9L977.5 264.7L973.5 264.9L969.5 265.5L965.5 266.9L961.5 267.9L957.5 267.0L953.5 263.3L949.5 257.5L945.5 250.9L941.5 244.4L937.5 238.5L933.5 233.8L929.5 230.2L925.5 226.8L921.5 223.5L917.5 220.2L913.5 215.8L909.5 209.6L905.5 202.3L901.5 194.2L897.5 185.4L893.5 176.6L889.5 169.9L885.5 167.3L881.5 167.0L877.5 167.1L873.5 167.3L869.5 167.0L865.5 166.7L861.5 166.5L857.5 166.9L853.5 167.2L849.5 167.1L845.5 167.0L841.5 168.9L837.5 173.9L833.5 180.8L829.5 188.8L825.5 197.6L821.5 207.0L817.5 216.8L813.5 226.6L809.5 236.0L805.5 245.0L801.5 253.3L797.5 260.8L793.5 267.0L789.5 271.5L785.5 274.2L781.5 275.7L777.5 276.7L773.5 276.6L769.5 273.9L765.5 268.5L761.5 262.9L757.5 260.4L753.5 259.7L749.5 258.6L745.5 257.5L741.5 258.1L737.5 259.9L733.5 261.8L729.5 263.6L725.5 265.2L721.5 266.7L717.5 267.6L713.5 268.1L709.5 268.4L705.5 268.3L701.5 267.4L697.5 266.0L693.5 264.4L689.5 262.5L685.5 260.9L681.5 260.3L677.5 260.3L673.5 260.4L669.5 260.5L665.5 260.5L661.5 260.4L657.5 260.3L653.5 260.2L649.5 260.1L645.5 260.0L641.5 259.9L637.5 259.8L633.5 259.7L629.5 259.6L625.5 259.5L621.5 259.3L617.5 259.2L613.5 259.0L609.5 259.7L605.5 262.2L601.5 265.6L597.5 269.1L593.5 272.7L589.5 276.4L585.5 280.4L581.5 284.4L577.5 288.1L573.5 291.2L569.5 293.7L565.5 295.2L561.5 295.6L557.5 295.4L553.5 294.6L549.5 292.9L545.5 290.7L541.5 288.5L537.5 286.4L533.5 284.2L529.5 282.6L525.5 282.2L521.5 282.3L517.5 282.3L513.5 282.4L509.5 282.5L505.5 282.4L501.5 282.2L497.5 282.0L493.5 281.7L489.5 281.5L485.5 281.6L481.5 281.9L477.5 282.3L473.5 282.7L469.5 283.1L465.5 283.5L461.5 284.1L457.5 285.0L453.5 286.0L449.5 287.2L445.5 289.3L441.5 292.4L437.5 297.1L433.5 303.1L429.5 308.2L425.5 312.0L421.5 314.7L417.5 315.9L413.5 316.5L409.5 316.9L405.5 317.1L401.5 317.1L397.5 317.0L393.5 316.8L389.5 316.5L385.5 316.1L381.5 315.7L377.5 315.3L373.5 315.0L369.5 314.7L365.5 314.4L361.5 314.1L357.5 313.2L353.5 311.3L349.5 308.9L345.5 307.2L341.5 307.1L337.5 307.8L333.5 308.7L329.5 309.6L325.5 310.6L321.5 311.6L317.5 312.8L313.5 314.2L309.5 315.8L305.5 316.7L301.5 316.2L297.5 314.8L293.5 313.4L289.5 312.0L285.5 310.8L281.5 309.7L277.5 308.9L273.5 308.6L269.5 309.0L265.5 309.6L261.5 310.0L257.5 310.3L253.5 310.4L249.5 310.5L245.5 310.4L241.5 310.2L237.5 309.7L233.5 308.7L229.5 307.3L225.5 305.8L221.5 304.6L217.5 303.9L213.5 303.8L209.5 303.8L205.5 303.8L201.5 303.7L197.5 303.4L193.5 303.0L189.5 302.7L185.5 302.7L181.5 302.9L177.5 304.4L173.5 308.4L169.5 313.7L165.5 319.0L161.5 324.4L157.5 329.7L153.5 335.0L149.5 340.4L145.5 345.7L141.5 350.7L137.5 354.6L133.5 357.4L129.5 358.6L125.5 357.4L121.5 355.1L117.5 353.1L113.5 351.4L109.5 349.8L105.5 348.5L101.5 348.1L97.5 348.3L93.5 348.6L89.5 350.1L85.5 354.0L81.5 359.3L77.5 365.5L73.5 372.6L69.5 379.9L65.5 387.4L61.5 395.2L57.5 403.1L53.5 411.1L49.5 419.3L45.5 427.8L41.5 436.5L37.5 444.7L33.5 451.1L29.5 455.2L25.5 458.2L21.5 460.4L17.5 461.3L13.5 461.7L9.5 462.1L7.0 462.4Z" fill="rgba(160,32,240,0.12)"/>
<path d="M7.0 315.1L9.5 306.7L13.5 295.7L17.5 284.6L21.5 275.4L25.5 267.7L29.5 261.0L33.5 254.8L37.5 249.4L41.5 245.3L45.5 242.4L49.5 240.9L53.5 240.8L57.5 241.5L61.5 242.9L65.5 244.8L69.5 247.6L73.5 250.8L77.5 253.3L81.5 255.1L85.5 256.5L89.5 257.1L93.5 256.0L97.5 253.4L101.5 249.8L105.5 245.5L109.5 240.3L113.5 234.1L117.5 227.7L121.5 221.6L125.5 215.9L129.5 211.1L133.5 207.5L137.5 205.1L141.5 203.4L145.5 201.9L149.5 200.5L153.5 199.4L157.5 199.3L161.5 200.4L165.5 201.7L169.5 202.2L173.5 202.3L177.5 202.9L181.5 204.3L185.5 206.1L189.5 208.2L193.5 210.6L197.5 212.1L201.5 211.8L205.5 210.6L209.5 209.4L213.5 208.2L217.5 206.9L221.5 205.0L225.5 203.6L229.5 203.7L233.5 204.1L237.5 205.0L241.5 207.0L245.5 208.4L249.5 207.9L253.5 206.5L257.5 205.5L261.5 204.8L265.5 204.0L269.5 203.0L273.5 201.9L277.5 201.2L281.5 201.0L285.5 201.8L289.5 204.2L293.5 207.5L297.5 210.7L301.5 213.9L305.5 216.4L309.5 217.5L313.5 217.7L317.5 217.5L321.5 216.9L325.5 216.2L329.5 215.5L333.5 214.8L337.5 213.9L341.5 213.3L345.5 213.6L349.5 215.0L353.5 217.1L357.5 219.5L361.5 221.4L365.5 222.9L369.5 223.7L373.5 223.5L377.5 222.8L381.5 221.1L385.5 217.6L389.5 213.3L393.5 209.2L397.5 205.4L401.5 202.1L405.5 199.6L409.5 197.8L413.5 196.7L417.5 196.1L421.5 195.8L425.5 195.9L429.5 196.2L433.5 196.7L437.5 196.8L441.5 195.9L445.5 194.5L449.5 193.0L453.5 191.4L457.5 189.8L461.5 188.4L465.5 187.2L469.5 186.2L473.5 185.2L477.5 184.8L481.5 185.3L485.5 186.1L489.5 187.2L493.5 188.8L497.5 190.5L501.5 192.1L505.5 193.0L509.5 193.7L513.5 194.3L517.5 194.8L521.5 195.1L525.5 194.8L529.5 193.3L533.5 190.7L537.5 187.1L541.5 183.0L545.5 178.7L549.5 174.1L553.5 169.3L557.5 164.8L561.5 160.8L565.5 156.9L569.5 153.8L573.5 152.1L577.5 151.6L581.5 151.6L585.5 152.2L589.5 153.4L593.5 155.2L597.5 157.3L601.5 159.4L605.5 161.6L609.5 163.5L613.5 165.0L617.5 166.0L621.5 166.4L625.5 166.5L629.5 166.7L633.5 166.9L637.5 167.1L641.5 167.4L645.5 167.8L649.5 168.5L653.5 169.3L657.5 170.1L661.5 170.8L665.5 171.4L669.5 172.0L673.5 172.0L677.5 171.4L681.5 170.5L685.5 168.7L689.5 165.8L693.5 162.4L697.5 159.5L701.5 157.0L705.5 154.9L709.5 153.2L713.5 151.9L717.5 151.1L721.5 150.8L725.5 151.2L729.5 151.9L733.5 152.3L737.5 152.3L741.5 151.9L745.5 150.5L749.5 147.2L753.5 142.2L757.5 135.8L761.5 128.9L765.5 122.0L769.5 114.7L773.5 106.5L777.5 97.9L781.5 89.4L785.5 82.1L789.5 76.4L793.5 71.5L797.5 67.1L801.5 64.3L805.5 63.4L809.5 63.0L813.5 62.5L817.5 62.1L821.5 61.6L825.5 61.1L829.5 60.6L833.5 60.3L837.5 60.6L841.5 61.2L845.5 61.9L849.5 62.6L853.5 63.3L857.5 63.8L861.5 64.3L865.5 64.8L869.5 65.3L873.5 65.6L877.5 65.5L881.5 65.1L885.5 64.7L889.5 64.8L893.5 66.6L897.5 70.9L901.5 76.9L905.5 84.0L909.5 91.3L913.5 98.5L917.5 105.5L921.5 112.3L925.5 118.9L929.5 124.3L933.5 127.7L937.5 130.1L941.5 132.9L945.5 136.5L949.5 140.5L953.5 144.5L957.5 148.3L961.5 152.0L965.5 155.6L969.5 158.8L973.5 161.5L977.5 164.0L981.5 166.2L985.5 167.2L989.5 166.9L993.5 166.3L997.5 166.0L1001.5 165.8L1005.5 165.9L1009.5 166.7L1013.5 168.0L1017.5 169.5L1021.5 171.1L1025.5 172.7L1029.5 174.4L1033.5 176.0L1037.5 177.4L1041.5 178.8L1045.5 179.7L1049.5 179.4L1053.5 178.2L1057.5 176.4L1061.5 173.4L1065.5 169.8L1069.5 166.8L1073.5 164.5L1077.5 162.3L1081.5 160.1L1085.5 158.1L1089.5 156.1L1093.5 154.4L1097.5 153.6L1101.5 153.1L1105.5 152.3L1109.5 151.0L1113.5 150.1L1117.5 149.8L1121.5 149.7L1125.5 149.6L1129.5 149.7L1133.5 149.9L1137.5 150.1L1141.5 150.3L1145.5 150.5L1149.5 150.5L1153.5 150.0L1157.5 149.2L1161.5 148.7L1165.5 149.1L1169.5 150.4L1173.5 152.5L1177.5 155.3L1181.5 158.4L1185.5 161.7L1189.5 165.1L1193.5 168.7L1197.5 172.0L1201.5 174.7L1205.5 176.6L1209.5 177.6L1213.5 177.2L1217.5 176.1L1221.5 175.0L1225.5 173.9L1229.5 172.7L1233.5 171.1L1237.5 168.7L1241.5 165.9L1245.5 163.5L1249.5 161.7L1253.5 160.1L1257.5 158.8L1261.5 157.8L1265.5 157.0L1269.5 155.8L1273.5 154.1L1277.5 152.1L1281.5 149.6L1285.5 146.2L1289.5 142.2L1293.5 138.5L1297.5 135.8L1301.5 134.2L1305.5 133.6L1309.5 133.6L1313.5 133.7L1317.5 134.8L1321.5 137.1L1325.5 140.1L1329.5 143.5L1333.5 146.9L1337.5 150.0L1341.5 152.7L1345.5 154.8L1349.5 156.5L1353.5 158.7L1357.5 161.4L1361.5 164.3L1365.5 167.1L1369.5 169.5L1373.5 171.2L1377.5 172.2L1381.5 173.0L1385.5 173.8L1389.5 174.5L1393.5 174.7L1397.5 174.2L1401.5 173.7L1405.5 173.6L1409.5 173.8L1413.8 173.9" stroke="#55c41d" stroke-width="1.25" fill="none" stroke-linejoin="round"/>
<path d="M7.0 438.5L9.5 431.7L13.5 422.7L17.5 413.6L21.5 406.0L25.5 399.7L29.5 394.3L33.5 389.2L37.5 384.7L41.5 381.3L45.5 379.0L49.5 377.7L53.5 377.6L57.5 378.3L61.5 379.4L65.5 380.9L69.5 383.2L73.5 385.8L77.5 387.9L81.5 389.4L85.5 390.5L89.5 391.0L93.5 390.1L97.5 388.0L101.5 385.1L105.5 381.5L109.5 377.2L113.5 372.2L117.5 367.0L121.5 361.9L125.5 357.2L129.5 353.3L133.5 350.4L137.5 348.4L141.5 347.0L145.5 345.8L149.5 344.6L153.5 343.7L157.5 343.6L161.5 344.6L165.5 345.6L169.5 346.0L173.5 346.1L177.5 346.6L181.5 347.7L185.5 349.2L189.5 351.0L193.5 352.9L197.5 354.1L201.5 353.9L205.5 352.9L209.5 352.0L213.5 351.0L217.5 349.9L221.5 348.3L225.5 347.2L229.5 347.2L233.5 347.6L237.5 348.3L241.5 350.0L245.5 351.1L249.5 350.7L253.5 349.5L257.5 348.7L261.5 348.1L265.5 347.5L269.5 346.6L273.5 345.8L277.5 345.2L281.5 345.0L285.5 345.7L289.5 347.7L293.5 350.3L297.5 353.0L301.5 355.6L305.5 357.6L309.5 358.5L313.5 358.7L317.5 358.6L321.5 358.1L325.5 357.5L329.5 356.9L333.5 356.3L337.5 355.6L341.5 355.1L345.5 355.4L349.5 356.5L353.5 358.3L357.5 360.2L361.5 361.8L365.5 363.0L369.5 363.6L373.5 363.5L377.5 362.9L381.5 361.5L385.5 358.6L389.5 355.1L393.5 351.8L397.5 348.6L401.5 345.9L405.5 343.9L409.5 342.4L413.5 341.5L417.5 341.0L421.5 340.8L425.5 340.8L429.5 341.1L433.5 341.5L437.5 341.6L441.5 340.9L445.5 339.7L449.5 338.5L453.5 337.2L457.5 335.9L461.5 334.7L465.5 333.7L469.5 332.9L473.5 332.1L477.5 331.7L481.5 332.1L485.5 332.8L489.5 333.7L493.5 335.0L497.5 336.4L501.5 337.7L505.5 338.5L509.5 339.1L513.5 339.6L517.5 340.0L521.5 340.2L525.5 339.9L529.5 338.7L533.5 336.6L537.5 333.6L541.5 330.3L545.5 326.8L549.5 323.0L553.5 319.1L557.5 315.4L561.5 312.0L565.5 308.9L569.5 306.3L573.5 305.0L577.5 304.5L581.5 304.5L585.5 305.0L589.5 306.0L593.5 307.5L597.5 309.2L601.5 310.9L605.5 312.7L609.5 314.3L613.5 315.5L617.5 316.3L621.5 316.7L625.5 316.8L629.5 316.9L633.5 317.0L637.5 317.2L641.5 317.5L645.5 317.8L649.5 318.4L653.5 319.0L657.5 319.7L661.5 320.2L665.5 320.8L669.5 321.2L673.5 321.3L677.5 320.8L681.5 320.0L685.5 318.6L689.5 316.1L693.5 313.4L697.5 311.0L701.5 309.0L705.5 307.2L709.5 305.8L713.5 304.8L717.5 304.1L721.5 303.9L725.5 304.2L729.5 304.8L733.5 305.1L737.5 305.1L741.5 304.8L745.5 303.6L749.5 300.9L753.5 296.8L757.5 291.6L761.5 285.9L765.5 280.3L769.5 274.3L773.5 267.6L777.5 260.5L781.5 253.5L785.5 247.5L789.5 242.9L793.5 238.8L797.5 235.2L801.5 233.0L805.5 232.2L809.5 231.9L813.5 231.5L817.5 231.1L821.5 230.7L825.5 230.3L829.5 229.9L833.5 229.7L837.5 229.9L841.5 230.4L845.5 231.0L849.5 231.6L853.5 232.1L857.5 232.6L861.5 233.0L865.5 233.4L869.5 233.8L873.5 234.1L877.5 234.0L881.5 233.6L885.5 233.2L889.5 233.3L893.5 234.9L897.5 238.4L901.5 243.3L905.5 249.1L909.5 255.1L913.5 261.0L917.5 266.7L921.5 272.3L925.5 277.7L929.5 282.2L933.5 284.9L937.5 286.9L941.5 289.2L945.5 292.1L949.5 295.4L953.5 298.7L957.5 301.8L961.5 304.8L965.5 307.8L969.5 310.4L973.5 312.7L977.5 314.7L981.5 316.5L985.5 317.3L989.5 317.0L993.5 316.6L997.5 316.3L1001.5 316.2L1005.5 316.2L1009.5 316.9L1013.5 318.0L1017.5 319.2L1021.5 320.5L1025.5 321.8L1029.5 323.2L1033.5 324.5L1037.5 325.7L1041.5 326.8L1045.5 327.5L1049.5 327.3L1053.5 326.3L1057.5 324.9L1061.5 322.4L1065.5 319.5L1069.5 317.0L1073.5 315.1L1077.5 313.3L1081.5 311.5L1085.5 309.8L1089.5 308.2L1093.5 306.9L1097.5 306.2L1101.5 305.8L1105.5 305.1L1109.5 304.1L1113.5 303.3L1117.5 303.0L1121.5 302.9L1125.5 302.9L1129.5 303.0L1133.5 303.1L1137.5 303.3L1141.5 303.5L1145.5 303.7L1149.5 303.6L1153.5 303.2L1157.5 302.6L1161.5 302.2L1165.5 302.4L1169.5 303.6L1173.5 305.3L1177.5 307.5L1181.5 310.1L1185.5 312.8L1189.5 315.6L1193.5 318.5L1197.5 321.3L1201.5 323.4L1205.5 325.0L1209.5 325.8L1213.5 325.5L1217.5 324.6L1221.5 323.7L1225.5 322.8L1229.5 321.8L1233.5 320.5L1237.5 318.6L1241.5 316.3L1245.5 314.3L1249.5 312.8L1253.5 311.5L1257.5 310.4L1261.5 309.6L1265.5 309.0L1269.5 308.0L1273.5 306.6L1277.5 305.0L1281.5 302.9L1285.5 300.1L1289.5 296.8L1293.5 293.8L1297.5 291.6L1301.5 290.3L1305.5 289.8L1309.5 289.7L1313.5 289.9L1317.5 290.7L1321.5 292.6L1325.5 295.1L1329.5 297.9L1333.5 300.6L1337.5 303.2L1341.5 305.4L1345.5 307.1L1349.5 308.5L1353.5 310.3L1357.5 312.6L1361.5 315.0L1365.5 317.3L1369.5 319.2L1373.5 320.6L1377.5 321.4L1381.5 322.0L1385.5 322.7L1389.5 323.3L1393.5 323.4L1397.5 323.1L1401.5 322.7L1405.5 322.6L1409.5 322.7L1413.8 322.8" stroke="#c436cf" stroke-width="1.25" fill="none" stroke-linejoin="round"/>
<path d="M7.0 462.4L9.5 462.1L13.5 461.7L17.5 461.3L21.5 460.4L25.5 458.2L29.5 455.2L33.5 451.1L37.5 444.7L41.5 436.5L45.5 427.8L49.5 419.3L53.5 411.1L57.5 403.1L61.5 395.2L65.5 387.4L69.5 379.9L73.5 372.6L77.5 365.5L81.5 359.3L85.5 354.0L89.5 350.1L93.5 348.6L97.5 348.3L101.5 348.1L105.5 348.5L109.5 349.8L113.5 351.4L117.5 353.1L121.5 355.1L125.5 357.4L129.5 358.6L133.5 357.4L137.5 354.6L141.5 350.7L145.5 345.7L149.5 340.4L153.5 335.0L157.5 329.7L161.5 324.4L165.5 319.0L169.5 313.7L173.5 308.4L177.5 304.4L181.5 302.9L185.5 302.7L189.5 302.7L193.5 303.0L197.5 303.4L201.5 303.7L205.5 303.8L209.5 303.8L213.5 303.8L217.5 303.9L221.5 304.6L225.5 305.8L229.5 307.3L233.5 308.7L237.5 309.7L241.5 310.2L245.5 310.4L249.5 310.5L253.5 310.4L257.5 310.3L261.5 310.0L265.5 309.6L269.5 309.0L273.5 308.6L277.5 308.9L281.5 309.7L285.5 310.8L289.5 312.0L293.5 313.4L297.5 314.8L301.5 316.2L305.5 316.7L309.5 315.8L313.5 314.2L317.5 312.8L321.5 311.6L325.5 310.6L329.5 309.6L333.5 308.7L337.5 307.8L341.5 307.1L345.5 307.2L349.5 308.9L353.5 311.3L357.5 313.2L361.5 314.1L365.5 314.4L369.5 314.7L373.5 315.0L377.5 315.3L381.5 315.7L385.5 316.1L389.5 316.5L393.5 316.8L397.5 317.0L401.5 317.1L405.5 317.1L409.5 316.9L413.5 316.5L417.5 315.9L421.5 314.7L425.5 312.0L429.5 308.2L433.5 303.1L437.5 297.1L441.5 292.4L445.5 289.3L449.5 287.2L453.5 286.0L457.5 285.0L461.5 284.1L465.5 283.5L469.5 283.1L473.5 282.7L477.5 282.3L481.5 281.9L485.5 281.6L489.5 281.5L493.5 281.7L497.5 282.0L501.5 282.2L505.5 282.4L509.5 282.5L513.5 282.4L517.5 282.3L521.5 282.3L525.5 282.2L529.5 282.6L533.5 284.2L537.5 286.4L541.5 288.5L545.5 290.7L549.5 292.9L553.5 294.6L557.5 295.4L561.5 295.6L565.5 295.2L569.5 293.7L573.5 291.2L577.5 288.1L581.5 284.4L585.5 280.4L589.5 276.4L593.5 272.7L597.5 269.1L601.5 265.6L605.5 262.2L609.5 259.7L613.5 259.0L617.5 259.2L621.5 259.3L625.5 259.5L629.5 259.6L633.5 259.7L637.5 259.8L641.5 259.9L645.5 260.0L649.5 260.1L653.5 260.2L657.5 260.3L661.5 260.4L665.5 260.5L669.5 260.5L673.5 260.4L677.5 260.3L681.5 260.3L685.5 260.9L689.5 262.5L693.5 264.4L697.5 266.0L701.5 267.4L705.5 268.3L709.5 268.4L713.5 268.1L717.5 267.6L721.5 266.7L725.5 265.2L729.5 263.6L733.5 261.8L737.5 259.9L741.5 258.1L745.5 257.5L749.5 258.6L753.5 259.7L757.5 260.4L761.5 262.9L765.5 268.5L769.5 273.9L773.5 276.6L777.5 276.7L781.5 275.7L785.5 274.2L789.5 271.5L793.5 267.0L797.5 260.8L801.5 253.3L805.5 245.0L809.5 236.0L813.5 226.6L817.5 216.8L821.5 207.0L825.5 197.6L829.5 188.8L833.5 180.8L837.5 173.9L841.5 168.9L845.5 167.0L849.5 167.1L853.5 167.2L857.5 166.9L861.5 166.5L865.5 166.7L869.5 167.0L873.5 167.3L877.5 167.1L881.5 167.0L885.5 167.3L889.5 169.9L893.5 176.6L897.5 185.4L901.5 194.2L905.5 202.3L909.5 209.6L913.5 215.8L917.5 220.2L921.5 223.5L925.5 226.8L929.5 230.2L933.5 233.8L937.5 238.5L941.5 244.4L945.5 250.9L949.5 257.5L953.5 263.3L957.5 267.0L961.5 267.9L965.5 266.9L969.5 265.5L973.5 264.9L977.5 264.7L981.5 264.9L985.5 265.7L989.5 266.8L993.5 267.9L997.5 268.3L1001.5 267.8L1005.5 267.0L1009.5 266.2L1013.5 265.2L1017.5 264.3L1021.5 263.6L1025.5 263.1L1029.5 263.6L1033.5 265.7L1037.5 268.1L1041.5 269.5L1045.5 270.0L1049.5 270.2L1053.5 270.6L1057.5 271.9L1061.5 274.6L1065.5 277.4L1069.5 278.8L1073.5 279.2L1077.5 279.4L1081.5 279.5L1085.5 279.4L1089.5 279.1L1093.5 278.7L1097.5 277.8L1101.5 276.6L1105.5 275.1L1109.5 273.0L1113.5 270.3L1117.5 267.4L1121.5 264.2L1125.5 260.8L1129.5 257.7L1133.5 255.4L1137.5 253.2L1141.5 250.7L1145.5 247.8L1149.5 245.3L1153.5 243.6L1157.5 242.5L1161.5 241.6L1165.5 241.8L1169.5 244.6L1173.5 249.0L1177.5 253.4L1181.5 257.4L1185.5 261.0L1189.5 264.4L1193.5 267.2L1197.5 269.4L1201.5 271.0L1205.5 272.3L1209.5 272.9L1213.5 272.9L1217.5 272.8L1221.5 272.6L1225.5 272.4L1229.5 272.1L1233.5 271.8L1237.5 271.5L1241.5 271.4L1245.5 271.3L1249.5 271.3L1253.5 271.1L1257.5 270.3L1261.5 269.1L1265.5 267.8L1269.5 266.1L1273.5 264.4L1277.5 263.6L1281.5 264.4L1285.5 265.7L1289.5 266.6L1293.5 266.6L1297.5 265.7L1301.5 264.3L1305.5 262.5L1309.5 260.5L1313.5 258.8L1317.5 257.7L1321.5 257.1L1325.5 256.7L1329.5 256.7L1333.5 257.1L1337.5 258.3L1341.5 259.9L1345.5 261.8L1349.5 263.9L1353.5 265.9L1357.5 267.5L1361.5 268.7L1365.5 269.6L1369.5 269.6L1373.5 269.1L1377.5 268.8L1381.5 269.0L1385.5 269.5L1389.5 269.9L1393.5 270.0L1397.5 269.9L1401.5 269.5L1405.5 268.7L1409.5 267.6L1413.8 266.6" stroke="#c436cf" stroke-width="1.25" fill="none" stroke-linejoin="round"/>
<path d="M7.0 350.6L9.5 340.3L13.5 328.7L17.5 318.3L21.5 309.9L25.5 302.3L29.5 293.9L33.5 285.2L37.5 278.8L41.5 274.9L45.5 272.3L49.5 271.4L53.5 272.7L57.5 275.7L61.5 279.7L65.5 284.4L69.5 288.8L73.5 292.1L77.5 294.7L81.5 296.8L85.5 298.3L89.5 298.7L93.5 297.7L97.5 295.5L101.5 292.7L105.5 289.1L109.5 284.5L113.5 279.3L117.5 273.8L121.5 268.0L125.5 262.8L129.5 259.0L133.5 256.6L137.5 255.3L141.5 254.6L145.5 254.0L149.5 253.5L153.5 253.0L157.5 253.0L161.5 254.0L165.5 255.6L169.5 257.5L173.5 259.7L177.5 261.5L181.5 262.2L185.5 262.4L189.5 262.7L193.5 263.4L197.5 264.3L201.5 264.8L205.5 264.8L209.5 264.6L213.5 264.3L217.5 263.8L221.5 263.1L225.5 262.8L229.5 263.1L233.5 263.6L237.5 264.2L241.5 264.3L245.5 262.9L249.5 260.6L253.5 258.6L257.5 256.8L261.5 255.4L265.5 254.7L269.5 254.5L273.5 254.5L277.5 254.8L281.5 255.5L285.5 256.4L289.5 257.4L293.5 258.4L297.5 259.4L301.5 260.4L305.5 261.1L309.5 261.3L313.5 261.4L317.5 261.4L321.5 261.6L325.5 262.6L329.5 265.2L333.5 268.7L337.5 272.1L341.5 275.7L345.5 278.4L349.5 279.4L353.5 279.1L357.5 278.9L361.5 278.8L365.5 278.7L369.5 278.2L373.5 277.3L377.5 275.7L381.5 272.9L385.5 269.6L389.5 266.8L393.5 264.6L397.5 262.7L401.5 261.1L405.5 260.0L409.5 259.0L413.5 258.1L417.5 257.6L421.5 257.5L425.5 257.7L429.5 258.2L433.5 259.4L437.5 260.7L441.5 261.1L445.5 260.9L449.5 260.7L453.5 260.5L457.5 260.3L461.5 260.0L465.5 259.7L469.5 259.3L473.5 258.9L477.5 258.5L481.5 258.1L485.5 257.8L489.5 257.6L493.5 257.6L497.5 257.6L501.5 257.6L505.5 257.6L509.5 257.6L513.5 257.8L517.5 258.2L521.5 258.6L525.5 259.1L529.5 258.2L533.5 254.5L537.5 249.5L541.5 244.5L545.5 239.4L549.5 234.1L553.5 228.8L557.5 224.0L561.5 220.5L565.5 217.8L569.5 216.1L573.5 215.2L577.5 215.0L581.5 215.4L585.5 216.2L589.5 217.1L593.5 218.3L597.5 220.0L601.5 221.8L605.5 223.6L609.5 225.1L613.5 225.5L617.5 225.5L621.5 225.8L625.5 226.5L629.5 227.5L633.5 228.8L637.5 230.7L641.5 233.1L645.5 235.4L649.5 237.5L653.5 239.3L657.5 240.6L661.5 241.4L665.5 242.2L669.5 243.0L673.5 243.8L677.5 244.2L681.5 243.8L685.5 241.7L689.5 237.5L693.5 232.9L697.5 229.1L701.5 226.1L705.5 224.1L709.5 222.9L713.5 222.0L717.5 221.5L721.5 221.1L725.5 220.7L729.5 220.3L733.5 219.9L737.5 219.3L741.5 218.6L745.5 215.7L749.5 208.8L753.5 200.1L757.5 192.0L761.5 183.8L765.5 173.5L769.5 161.1L773.5 150.3L777.5 142.7L781.5 136.4L785.5 130.8L789.5 126.0L793.5 122.3L797.5 119.8L801.5 118.1L805.5 117.3L809.5 118.0L813.5 119.7L817.5 122.3L821.5 126.1L825.5 130.0L829.5 133.1L833.5 136.0L837.5 139.3L841.5 142.4L845.5 144.3L849.5 145.3L853.5 146.1L857.5 146.9L861.5 147.4L865.5 147.5L869.5 147.1L873.5 146.2L877.5 145.8L881.5 145.9L885.5 145.9L889.5 143.8L893.5 138.6L897.5 133.1L901.5 129.1L905.5 126.5L909.5 125.5L913.5 125.5L917.5 126.0L921.5 126.7L925.5 127.7L929.5 129.6L933.5 132.2L937.5 134.8L941.5 138.1L945.5 142.5L949.5 147.7L953.5 153.7L957.5 160.5L961.5 168.5L965.5 178.5L969.5 187.6L973.5 193.2L977.5 197.2L981.5 200.9L985.5 203.7L989.5 206.1L993.5 208.6L997.5 211.6L1001.5 214.8L1005.5 218.2L1009.5 222.3L1013.5 226.6L1017.5 230.5L1021.5 233.9L1025.5 236.7L1029.5 238.5L1033.5 239.3L1037.5 239.5L1041.5 239.4L1045.5 239.3L1049.5 239.2L1053.5 239.0L1057.5 237.7L1061.5 234.2L1065.5 229.4L1069.5 226.5L1073.5 225.6L1077.5 225.0L1081.5 223.7L1085.5 221.9L1089.5 219.9L1093.5 217.9L1097.5 216.0L1101.5 214.5L1105.5 213.6L1109.5 213.3L1113.5 213.5L1117.5 213.8L1121.5 214.5L1125.5 215.4L1129.5 216.1L1133.5 216.3L1137.5 216.3L1141.5 217.3L1145.5 220.1L1149.5 223.0L1153.5 224.2L1157.5 224.5L1161.5 224.7L1165.5 224.3L1169.5 223.1L1173.5 221.6L1177.5 220.3L1181.5 219.1L1185.5 218.1L1189.5 217.5L1193.5 217.3L1197.5 217.3L1201.5 217.8L1205.5 218.7L1209.5 219.9L1213.5 221.5L1217.5 223.2L1221.5 224.9L1225.5 226.6L1229.5 228.2L1233.5 229.7L1237.5 230.9L1241.5 231.7L1245.5 231.8L1249.5 231.0L1253.5 229.8L1257.5 228.9L1261.5 228.3L1265.5 227.9L1269.5 227.2L1273.5 226.0L1277.5 223.6L1281.5 219.0L1285.5 212.5L1289.5 206.0L1293.5 200.7L1297.5 197.6L1301.5 196.5L1305.5 196.6L1309.5 197.1L1313.5 197.6L1317.5 197.9L1321.5 198.1L1325.5 198.2L1329.5 198.3L1333.5 198.2L1337.5 198.0L1341.5 197.6L1345.5 196.9L1349.5 196.0L1353.5 195.1L1357.5 195.6L1361.5 199.1L1365.5 204.6L1369.5 210.4L1373.5 215.4L1377.5 219.5L1381.5 222.7L1385.5 225.1L1389.5 227.0L1393.5 228.7L1397.5 230.3L1401.5 232.4L1405.5 235.4L1409.5 239.6L1413.8 244.5" stroke="#e0a32e" stroke-width="1.25" fill="none" stroke-linejoin="round"/>
<path d="M9.5 384.2L13.5 380.3L17.5 376.9L21.5 373.5L25.5 370.6L29.5 367.4L33.5 362.2L37.5 358.6L41.5 355.8L45.5 353.1L49.5 350.4L53.5 348.7L57.5 348.2L61.5 347.4L65.5 346.6L69.5 346.0L73.5 345.1L77.5 344.1L81.5 343.1L85.5 342.0L89.5 340.9L93.5 339.4L97.5 337.6L101.5 335.1L105.5 333.1L109.5 331.1L113.5 328.1L117.5 324.6L121.5 321.0L125.5 317.5L129.5 315.1L133.5 312.8L137.5 310.9L141.5 309.1L145.5 307.4L149.5 305.8L153.5 304.1L157.5 301.8L161.5 300.1L165.5 299.4L169.5 298.6L173.5 297.3L177.5 296.6L181.5 296.3L185.5 296.2L189.5 296.3L193.5 296.7L197.5 296.2L201.5 295.0L205.5 293.5L209.5 292.3L213.5 291.3L217.5 290.3L221.5 289.3L225.5 288.5L229.5 289.6L233.5 290.6L237.5 291.3L241.5 291.7L245.5 291.8L249.5 289.8L253.5 288.3L257.5 286.9L261.5 285.8L265.5 284.6L269.5 284.9L273.5 285.2L277.5 285.7L281.5 285.9L285.5 286.2L289.5 286.7L293.5 287.4L297.5 287.9L301.5 288.8L305.5 289.5L309.5 290.0L313.5 290.1L317.5 289.9L321.5 289.9L325.5 289.9L329.5 289.6L333.5 289.5L337.5 289.5L341.5 289.7L345.5 290.8L349.5 292.1L353.5 293.3L357.5 294.2L361.5 294.9L365.5 295.3L369.5 295.3L373.5 294.5L377.5 293.7L381.5 293.0L385.5 291.8L389.5 290.4L393.5 289.2L397.5 288.1L401.5 287.3L405.5 286.7L409.5 285.9L413.5 285.2L417.5 284.7L421.5 284.4L425.5 284.1L429.5 283.4L433.5 282.8L437.5 282.5L441.5 281.6L445.5 280.5L449.5 279.6L453.5 278.8L457.5 277.9L461.5 276.9L465.5 276.3L469.5 275.6L473.5 275.1L477.5 274.7L481.5 274.1L485.5 273.8L489.5 273.6L493.5 273.9L497.5 274.5L501.5 275.1L505.5 275.3L509.5 275.2L513.5 274.9L517.5 274.4L521.5 274.2L525.5 273.8L529.5 273.6L533.5 272.2L537.5 270.7L541.5 269.3L545.5 267.7L549.5 265.6L553.5 263.3L557.5 261.1L561.5 259.5L565.5 257.6L569.5 255.9L573.5 254.4L577.5 253.4L581.5 253.2L585.5 252.6L589.5 252.0L593.5 251.6L597.5 251.2L601.5 251.3L605.5 251.4L609.5 251.6L613.5 251.6L617.5 251.5L621.5 251.5L625.5 251.1L629.5 250.7L633.5 250.5L637.5 250.5L641.5 250.7L645.5 250.7L649.5 251.1L653.5 251.7L657.5 252.1L661.5 252.2L665.5 252.3L669.5 252.4L673.5 252.4L677.5 252.2L681.5 252.0L685.5 251.2L689.5 249.8L693.5 248.3L697.5 246.6L701.5 245.5L705.5 244.3L709.5 243.8L713.5 243.4L717.5 243.6L721.5 243.9L725.5 243.9L729.5 243.0L733.5 242.3L737.5 241.5L741.5 240.6L745.5 239.7L749.5 237.3L753.5 234.5L757.5 231.9L761.5 229.0L765.5 224.0L769.5 219.3L773.5 214.7L777.5 211.8L781.5 208.3L785.5 204.9L789.5 201.5L793.5 198.4L797.5 195.5L801.5 192.8L805.5 190.1L809.5 187.7L813.5 185.9L817.5 184.1L821.5 182.4L825.5 180.7L829.5 178.6L833.5 176.6L837.5 175.1L841.5 174.0L845.5 173.1L849.5 172.6L853.5 172.0L857.5 171.4L861.5 170.7L865.5 169.8L869.5 168.5L873.5 167.2L877.5 166.5L881.5 165.7L885.5 165.1L889.5 164.5L893.5 166.6L897.5 168.9L901.5 171.1L905.5 174.0L909.5 176.7L913.5 179.2L917.5 181.6L921.5 183.6L925.5 186.2L929.5 188.2L933.5 189.7L937.5 191.7L941.5 194.1L945.5 196.6L949.5 200.4L953.5 204.0L957.5 207.2L961.5 210.0L965.5 212.8L969.5 215.2L973.5 217.1L977.5 219.0L981.5 221.0L985.5 222.7L989.5 224.1L993.5 225.7L997.5 227.3L1001.5 228.8L1005.5 229.9L1009.5 231.4L1013.5 232.9L1017.5 234.7L1021.5 236.5L1025.5 238.0L1029.5 239.5L1033.5 241.1L1037.5 242.9L1041.5 244.4L1045.5 245.3L1049.5 245.8L1053.5 246.0L1057.5 246.1L1061.5 245.2L1065.5 243.3L1069.5 244.3L1073.5 244.7L1077.5 244.7L1081.5 244.5L1085.5 244.3L1089.5 243.8L1093.5 242.7L1097.5 241.7L1101.5 240.8L1105.5 239.9L1109.5 239.2L1113.5 238.8L1117.5 238.6L1121.5 238.4L1125.5 238.1L1129.5 237.9L1133.5 237.6L1137.5 237.4L1141.5 236.9L1145.5 236.7L1149.5 236.4L1153.5 236.1L1157.5 235.9L1161.5 235.3L1165.5 234.8L1169.5 235.0L1173.5 236.2L1177.5 237.4L1181.5 238.8L1185.5 240.3L1189.5 242.1L1193.5 243.8L1197.5 245.2L1201.5 246.3L1205.5 247.3L1209.5 247.3L1213.5 247.5L1217.5 247.6L1221.5 247.6L1225.5 247.7L1229.5 247.9L1233.5 247.9L1237.5 247.9L1241.5 247.4L1245.5 246.4L1249.5 245.8L1253.5 245.1L1257.5 244.6L1261.5 244.5L1265.5 244.5L1269.5 244.0L1273.5 243.4L1277.5 242.7L1281.5 241.2L1285.5 238.5L1289.5 235.7L1293.5 233.5L1297.5 231.8L1301.5 231.0L1305.5 231.6L1309.5 231.9L1313.5 232.1L1317.5 232.3L1321.5 232.6L1325.5 232.6L1329.5 232.1L1333.5 231.9L1337.5 232.4L1341.5 233.9L1345.5 235.2L1349.5 236.2L1353.5 237.1L1357.5 238.4L1361.5 239.8L1365.5 240.8L1369.5 241.9L1373.5 242.9L1377.5 244.0L1381.5 244.6L1385.5 245.1L1389.5 245.7L1393.5 246.5L1397.5 247.1L1401.5 247.2L1405.5 247.8L1409.5 248.4L1413.5 249.5" stroke="#dfa837" stroke-width="1.25" fill="none" stroke-linejoin="round"/>
<path d="M7.0 406.5L9.5 401.2L13.5 395.2L17.5 389.8L21.5 385.2L25.5 380.3L29.5 374.6L33.5 368.1L37.5 361.8L41.5 355.7L45.5 350.1L49.5 345.4L53.5 341.9L57.5 339.4L61.5 337.4L65.5 335.9L69.5 334.4L73.5 332.4L77.5 330.1L81.5 328.1L85.5 326.2L89.5 324.4L93.5 323.1L97.5 321.9L101.5 320.4L105.5 318.8L109.5 317.1L113.5 315.4L117.5 313.4L121.5 311.5L125.5 310.1L129.5 308.8L133.5 307.0L137.5 304.9L141.5 302.6L145.5 299.8L149.5 296.9L153.5 294.0L157.5 291.4L161.5 289.2L165.5 287.3L169.5 285.6L173.5 284.1L177.5 282.9L181.5 282.6L185.5 282.6L189.5 282.7L193.5 283.2L197.5 283.9L201.5 284.3L205.5 284.3L209.5 284.2L213.5 284.1L217.5 283.9L221.5 283.9L225.5 284.3L229.5 285.2L233.5 286.2L237.5 287.0L241.5 287.2L245.5 286.6L249.5 285.6L253.5 284.5L257.5 283.5L261.5 282.7L265.5 282.1L269.5 281.8L273.5 281.6L277.5 281.8L281.5 282.6L285.5 283.6L289.5 284.7L293.5 285.9L297.5 287.1L301.5 288.3L305.5 288.9L309.5 288.6L313.5 287.8L317.5 287.1L321.5 286.6L325.5 286.6L329.5 287.4L333.5 288.7L337.5 290.0L341.5 291.4L345.5 292.8L349.5 294.1L353.5 295.2L357.5 296.0L361.5 296.4L365.5 296.5L369.5 296.4L373.5 296.2L377.5 295.5L381.5 294.3L385.5 292.9L389.5 291.7L393.5 290.7L397.5 289.9L401.5 289.1L405.5 288.5L409.5 288.0L413.5 287.3L417.5 286.8L421.5 286.1L425.5 284.8L429.5 283.2L433.5 281.2L437.5 278.9L441.5 276.7L445.5 275.1L449.5 273.9L453.5 273.2L457.5 272.6L461.5 272.1L465.5 271.6L469.5 271.2L473.5 270.8L477.5 270.4L481.5 270.0L485.5 269.7L489.5 269.6L493.5 269.6L497.5 269.8L501.5 269.9L505.5 270.0L509.5 270.0L513.5 270.1L517.5 270.3L521.5 270.5L525.5 270.6L529.5 270.4L533.5 269.4L537.5 267.9L541.5 266.5L545.5 265.1L549.5 263.5L553.5 261.7L557.5 259.7L561.5 258.0L565.5 256.5L569.5 254.9L573.5 253.2L577.5 251.5L581.5 249.9L585.5 248.3L589.5 246.8L593.5 245.5L597.5 244.5L601.5 243.7L605.5 242.9L609.5 242.4L613.5 242.3L617.5 242.4L621.5 242.5L625.5 243.0L629.5 243.5L633.5 244.2L637.5 245.3L641.5 246.5L645.5 247.7L649.5 248.8L653.5 249.7L657.5 250.4L661.5 250.9L665.5 251.3L669.5 251.8L673.5 252.1L677.5 252.3L681.5 252.1L685.5 251.3L689.5 250.0L693.5 248.6L697.5 247.5L701.5 246.7L705.5 246.2L709.5 245.7L713.5 245.1L717.5 244.6L721.5 243.9L725.5 243.0L729.5 242.0L733.5 240.9L737.5 239.6L741.5 238.3L745.5 236.6L749.5 233.7L753.5 229.9L757.5 226.2L761.5 223.4L765.5 221.0L769.5 217.5L773.5 213.5L777.5 209.7L781.5 206.1L785.5 202.5L789.5 198.7L793.5 194.7L797.5 190.3L801.5 185.7L805.5 181.2L809.5 177.0L813.5 173.1L817.5 169.6L821.5 166.6L825.5 163.8L829.5 160.9L833.5 158.4L837.5 156.6L841.5 155.6L845.5 155.6L849.5 156.2L853.5 156.7L857.5 156.9L861.5 157.0L865.5 157.1L869.5 157.1L873.5 156.7L877.5 156.5L881.5 156.5L885.5 156.6L889.5 156.8L893.5 157.6L897.5 159.3L901.5 161.6L905.5 164.4L909.5 167.6L913.5 170.7L917.5 173.1L921.5 175.1L925.5 177.3L929.5 179.9L933.5 183.0L937.5 186.6L941.5 191.2L945.5 196.7L949.5 202.6L953.5 208.5L957.5 213.7L961.5 218.2L965.5 222.7L969.5 226.5L973.5 229.1L977.5 231.0L981.5 232.9L985.5 234.7L989.5 236.5L993.5 238.2L997.5 239.9L1001.5 241.3L1005.5 242.6L1009.5 244.3L1013.5 245.9L1017.5 247.4L1021.5 248.7L1025.5 249.9L1029.5 251.0L1033.5 252.5L1037.5 253.8L1041.5 254.4L1045.5 254.6L1049.5 254.7L1053.5 254.8L1057.5 254.8L1061.5 254.4L1065.5 253.4L1069.5 252.6L1073.5 252.4L1077.5 252.2L1081.5 251.6L1085.5 250.6L1089.5 249.5L1093.5 248.3L1097.5 246.9L1101.5 245.6L1105.5 244.4L1109.5 243.1L1113.5 241.9L1117.5 240.6L1121.5 239.3L1125.5 238.1L1129.5 236.9L1133.5 235.9L1137.5 234.8L1141.5 234.0L1145.5 234.0L1149.5 234.2L1153.5 233.9L1157.5 233.5L1161.5 233.1L1165.5 233.0L1169.5 233.8L1173.5 235.3L1177.5 236.8L1181.5 238.2L1185.5 239.6L1189.5 240.9L1193.5 242.3L1197.5 243.3L1201.5 244.4L1205.5 245.5L1209.5 246.4L1213.5 247.2L1217.5 248.0L1221.5 248.8L1225.5 249.5L1229.5 250.2L1233.5 250.7L1237.5 251.2L1241.5 251.5L1245.5 251.6L1249.5 251.2L1253.5 250.4L1257.5 249.6L1261.5 248.7L1265.5 247.9L1269.5 246.7L1273.5 245.2L1277.5 243.6L1281.5 241.7L1285.5 239.1L1289.5 236.3L1293.5 233.7L1297.5 231.7L1301.5 230.4L1305.5 229.5L1309.5 228.8L1313.5 228.2L1317.5 227.8L1321.5 227.6L1325.5 227.5L1329.5 227.5L1333.5 227.6L1337.5 228.1L1341.5 228.8L1345.5 229.4L1349.5 230.0L1353.5 230.5L1357.5 231.6L1361.5 233.9L1365.5 237.1L1369.5 240.0L1373.5 242.3L1377.5 244.2L1381.5 245.9L1385.5 247.3L1389.5 248.5L1393.5 249.3L1397.5 250.1L1401.5 251.0L1405.5 252.0L1409.5 253.6L1413.8 255.5" stroke="#3fb6c6" stroke-width="1.25" fill="none" stroke-linejoin="round"/>
<path d="M9.5 364.2L13.5 354.2L17.5 347.3L21.5 341.6L25.5 338.5L29.5 334.1L33.5 322.1L37.5 318.2L41.5 317.5L45.5 316.7L49.5 315.4L53.5 317.4L57.5 323.2L61.5 326.7L65.5 328.7L69.5 330.8L73.5 331.2L77.5 330.9L81.5 330.0L85.5 329.1L89.5 328.1L93.5 325.5L97.5 321.9L101.5 316.3L105.5 313.2L109.5 310.5L113.5 304.1L117.5 296.3L121.5 289.6L125.5 284.0L129.5 283.1L133.5 282.1L137.5 282.3L141.5 282.6L145.5 282.6L149.5 282.5L153.5 281.6L157.5 278.4L161.5 277.9L165.5 280.6L169.5 282.1L173.5 281.4L177.5 282.6L181.5 284.9L185.5 287.2L189.5 290.1L193.5 292.9L197.5 292.2L201.5 288.6L205.5 284.3L209.5 282.0L213.5 280.4L217.5 279.3L221.5 278.4L225.5 277.8L229.5 284.9L233.5 289.8L237.5 292.7L241.5 293.8L245.5 293.9L249.5 285.6L253.5 280.7L257.5 277.4L261.5 275.4L265.5 273.3L269.5 277.2L273.5 280.3L277.5 283.7L281.5 285.0L285.5 286.4L289.5 288.3L293.5 290.4L297.5 291.5L301.5 294.2L305.5 295.5L309.5 295.8L313.5 295.0L317.5 293.0L321.5 292.2L325.5 291.5L329.5 290.1L333.5 289.3L337.5 289.5L341.5 290.2L345.5 294.4L349.5 298.5L353.5 301.5L357.5 302.9L361.5 303.7L365.5 302.9L369.5 301.1L373.5 296.4L377.5 292.9L381.5 290.6L385.5 286.2L389.5 282.1L393.5 279.7L397.5 277.7L401.5 277.5L405.5 277.6L409.5 276.6L413.5 276.4L417.5 276.6L421.5 277.4L425.5 277.9L429.5 277.0L433.5 276.1L437.5 276.7L441.5 274.7L445.5 272.1L449.5 270.7L453.5 269.8L457.5 268.4L461.5 267.2L465.5 267.0L469.5 266.9L473.5 266.9L477.5 267.4L481.5 267.0L485.5 267.5L489.5 268.5L493.5 271.0L497.5 273.7L501.5 276.3L505.5 276.8L509.5 276.0L513.5 274.6L517.5 272.9L521.5 272.4L525.5 271.5L529.5 271.2L533.5 266.3L537.5 262.0L541.5 258.6L545.5 255.4L549.5 250.2L553.5 244.9L557.5 241.1L561.5 240.0L565.5 237.5L569.5 236.0L573.5 234.9L577.5 236.2L581.5 239.7L585.5 240.5L589.5 241.3L593.5 242.4L597.5 243.2L601.5 245.6L605.5 247.5L609.5 249.0L613.5 249.8L617.5 250.0L621.5 250.2L625.5 249.1L629.5 248.1L633.5 247.8L637.5 248.5L641.5 249.6L645.5 249.9L649.5 251.8L653.5 254.1L657.5 254.9L661.5 254.6L665.5 254.4L669.5 254.1L673.5 253.9L677.5 252.6L681.5 251.8L685.5 248.6L689.5 244.0L693.5 239.7L697.5 235.3L701.5 233.6L705.5 232.0L709.5 233.1L713.5 234.4L717.5 237.3L721.5 240.0L725.5 241.0L729.5 238.3L733.5 236.7L737.5 234.8L741.5 233.3L745.5 231.6L749.5 224.1L753.5 216.8L757.5 211.1L761.5 204.8L765.5 191.6L769.5 181.5L773.5 173.2L777.5 172.4L781.5 168.6L785.5 165.4L789.5 162.1L793.5 159.8L797.5 158.5L801.5 157.0L805.5 155.7L809.5 155.0L813.5 156.2L817.5 156.5L821.5 156.9L825.5 156.6L829.5 154.7L833.5 153.0L837.5 153.0L841.5 154.0L845.5 155.6L849.5 158.1L853.5 159.6L857.5 160.2L861.5 160.2L865.5 159.6L869.5 156.8L873.5 154.9L877.5 155.2L881.5 155.1L885.5 155.2L889.5 155.5L893.5 165.6L897.5 175.0L901.5 181.8L905.5 190.5L909.5 196.8L913.5 201.4L917.5 205.1L921.5 207.1L925.5 211.2L929.5 212.7L933.5 212.6L937.5 214.6L941.5 217.9L945.5 221.8L949.5 230.3L953.5 236.9L957.5 240.8L961.5 243.5L965.5 246.0L969.5 246.9L973.5 246.4L977.5 246.4L981.5 247.1L985.5 247.3L989.5 246.5L993.5 247.1L997.5 248.1L1001.5 248.8L1005.5 247.9L1009.5 249.4L1013.5 250.7L1017.5 252.9L1021.5 255.4L1025.5 256.7L1029.5 257.6L1033.5 259.3L1037.5 261.8L1041.5 263.0L1045.5 261.9L1049.5 259.4L1053.5 257.0L1057.5 254.6L1061.5 248.9L1065.5 240.6L1069.5 245.2L1073.5 246.3L1077.5 246.0L1081.5 244.9L1085.5 244.0L1089.5 242.1L1093.5 238.5L1097.5 235.5L1101.5 233.5L1105.5 231.9L1109.5 231.4L1113.5 231.8L1117.5 232.5L1121.5 233.2L1125.5 233.5L1129.5 233.9L1133.5 233.7L1137.5 233.8L1141.5 233.1L1145.5 233.1L1149.5 232.9L1153.5 232.5L1157.5 232.6L1161.5 231.2L1165.5 230.1L1169.5 232.1L1173.5 237.4L1177.5 242.0L1181.5 246.1L1185.5 250.3L1189.5 254.7L1193.5 258.2L1197.5 260.0L1201.5 260.6L1205.5 260.7L1209.5 257.4L1213.5 255.5L1217.5 254.0L1221.5 252.6L1225.5 251.6L1229.5 251.3L1233.5 250.4L1237.5 250.0L1241.5 247.4L1245.5 243.8L1249.5 241.8L1253.5 240.2L1257.5 239.4L1261.5 240.2L1265.5 241.4L1269.5 240.2L1273.5 238.9L1277.5 237.3L1281.5 232.8L1285.5 224.3L1289.5 217.3L1293.5 213.2L1297.5 211.7L1301.5 213.8L1305.5 220.2L1309.5 224.2L1313.5 226.9L1317.5 229.2L1321.5 230.8L1325.5 231.3L1329.5 229.8L1333.5 229.5L1337.5 232.3L1341.5 237.8L1345.5 241.9L1349.5 244.3L1353.5 245.7L1357.5 248.6L1361.5 251.3L1365.5 252.6L1369.5 253.7L1373.5 254.7L1377.5 255.9L1381.5 255.2L1385.5 254.7L1389.5 254.7L1393.5 255.5L1397.5 255.6L1401.5 253.8L1405.5 254.3L1409.5 255.2L1413.5 257.6" stroke="#2ec4a6" stroke-width="1.25" fill="none" stroke-linejoin="round"/>
<path d="M7.0 376.8L9.5 369.2L13.5 359.2L17.5 349.1L21.5 340.7L25.5 333.7L29.5 327.6L33.5 322.0L37.5 317.1L41.5 313.3L45.5 310.7L49.5 309.3L53.5 309.2L57.5 309.9L61.5 311.1L65.5 312.9L69.5 315.4L73.5 318.3L77.5 320.6L81.5 322.2L85.5 323.5L89.5 324.0L93.5 323.0L97.5 320.7L101.5 317.4L105.5 313.5L109.5 308.8L113.5 303.1L117.5 297.3L121.5 291.8L125.5 286.6L129.5 282.2L133.5 278.9L137.5 276.7L141.5 275.2L145.5 273.8L149.5 272.6L153.5 271.6L157.5 271.5L161.5 272.5L165.5 273.6L169.5 274.1L173.5 274.2L177.5 274.8L181.5 276.0L185.5 277.7L189.5 279.6L193.5 281.7L197.5 283.1L201.5 282.9L205.5 281.8L209.5 280.7L213.5 279.6L217.5 278.4L221.5 276.7L225.5 275.4L229.5 275.5L233.5 275.9L237.5 276.7L241.5 278.5L245.5 279.8L249.5 279.3L253.5 278.0L257.5 277.1L261.5 276.5L265.5 275.8L269.5 274.8L273.5 273.8L277.5 273.2L281.5 273.0L285.5 273.8L289.5 276.0L293.5 278.9L297.5 281.9L301.5 284.8L305.5 287.0L309.5 288.0L313.5 288.2L317.5 288.0L321.5 287.5L325.5 286.9L329.5 286.2L333.5 285.5L337.5 284.7L341.5 284.2L345.5 284.5L349.5 285.8L353.5 287.7L357.5 289.8L361.5 291.6L365.5 292.9L369.5 293.6L373.5 293.5L377.5 292.8L381.5 291.3L385.5 288.1L389.5 284.2L393.5 280.5L397.5 277.0L401.5 274.0L405.5 271.7L409.5 270.1L413.5 269.1L417.5 268.6L421.5 268.3L425.5 268.3L429.5 268.7L433.5 269.1L437.5 269.2L441.5 268.4L445.5 267.1L449.5 265.7L453.5 264.3L457.5 262.9L461.5 261.5L465.5 260.4L469.5 259.5L473.5 258.6L477.5 258.3L481.5 258.7L485.5 259.5L489.5 260.5L493.5 261.9L497.5 263.5L501.5 264.9L505.5 265.8L509.5 266.4L513.5 266.9L517.5 267.4L521.5 267.7L525.5 267.3L529.5 266.0L533.5 263.6L537.5 260.3L541.5 256.7L545.5 252.8L549.5 248.5L553.5 244.2L557.5 240.1L561.5 236.4L565.5 232.9L569.5 230.1L573.5 228.6L577.5 228.0L581.5 228.1L585.5 228.6L589.5 229.7L593.5 231.4L597.5 233.2L601.5 235.2L605.5 237.1L609.5 238.9L613.5 240.3L617.5 241.2L621.5 241.5L625.5 241.7L629.5 241.8L633.5 242.0L637.5 242.2L641.5 242.4L645.5 242.8L649.5 243.4L653.5 244.2L657.5 244.9L661.5 245.5L665.5 246.1L669.5 246.6L673.5 246.6L677.5 246.1L681.5 245.3L685.5 243.6L689.5 240.9L693.5 237.9L697.5 235.3L701.5 233.0L705.5 231.1L709.5 229.5L713.5 228.3L717.5 227.6L721.5 227.4L725.5 227.7L729.5 228.3L733.5 228.7L737.5 228.7L741.5 228.4L745.5 227.1L749.5 224.1L753.5 219.5L757.5 213.7L761.5 207.4L765.5 201.1L769.5 194.5L773.5 187.1L777.5 179.2L781.5 171.5L785.5 164.8L789.5 159.6L793.5 155.2L797.5 151.2L801.5 148.7L805.5 147.8L809.5 147.4L813.5 147.0L817.5 146.6L821.5 146.2L825.5 145.7L829.5 145.2L833.5 145.0L837.5 145.2L841.5 145.8L845.5 146.4L849.5 147.1L853.5 147.7L857.5 148.2L861.5 148.7L865.5 149.1L869.5 149.6L873.5 149.9L877.5 149.7L881.5 149.4L885.5 149.0L889.5 149.0L893.5 150.8L897.5 154.6L901.5 160.1L905.5 166.5L909.5 173.2L913.5 179.8L917.5 186.1L921.5 192.3L925.5 198.3L929.5 203.3L933.5 206.3L937.5 208.5L941.5 211.0L945.5 214.3L949.5 217.9L953.5 221.6L957.5 225.1L961.5 228.4L965.5 231.7L969.5 234.6L973.5 237.1L977.5 239.3L981.5 241.3L985.5 242.2L989.5 241.9L993.5 241.4L997.5 241.2L1001.5 241.0L1005.5 241.1L1009.5 241.8L1013.5 243.0L1017.5 244.4L1021.5 245.8L1025.5 247.3L1029.5 248.8L1033.5 250.2L1037.5 251.6L1041.5 252.8L1045.5 253.6L1049.5 253.3L1053.5 252.3L1057.5 250.6L1061.5 247.9L1065.5 244.7L1069.5 241.9L1073.5 239.8L1077.5 237.8L1081.5 235.8L1085.5 234.0L1089.5 232.1L1093.5 230.7L1097.5 229.9L1101.5 229.4L1105.5 228.7L1109.5 227.6L1113.5 226.7L1117.5 226.4L1121.5 226.3L1125.5 226.3L1129.5 226.4L1133.5 226.5L1137.5 226.7L1141.5 226.9L1145.5 227.1L1149.5 227.1L1153.5 226.6L1157.5 225.9L1161.5 225.4L1165.5 225.7L1169.5 227.0L1173.5 228.9L1177.5 231.4L1181.5 234.3L1185.5 237.2L1189.5 240.4L1193.5 243.6L1197.5 246.7L1201.5 249.0L1205.5 250.8L1209.5 251.7L1213.5 251.3L1217.5 250.4L1221.5 249.4L1225.5 248.3L1229.5 247.3L1233.5 245.8L1237.5 243.6L1241.5 241.1L1245.5 238.9L1249.5 237.2L1253.5 235.8L1257.5 234.6L1261.5 233.7L1265.5 233.0L1269.5 231.9L1273.5 230.4L1277.5 228.5L1281.5 226.3L1285.5 223.1L1289.5 219.5L1293.5 216.2L1297.5 213.7L1301.5 212.2L1305.5 211.7L1309.5 211.7L1313.5 211.8L1317.5 212.8L1321.5 214.8L1325.5 217.6L1329.5 220.7L1333.5 223.8L1337.5 226.6L1341.5 229.1L1345.5 230.9L1349.5 232.5L1353.5 234.5L1357.5 237.0L1361.5 239.7L1365.5 242.2L1369.5 244.4L1373.5 245.9L1377.5 246.8L1381.5 247.5L1385.5 248.2L1389.5 248.9L1393.5 249.1L1397.5 248.7L1401.5 248.2L1405.5 248.1L1409.5 248.3L1413.8 248.4" stroke="#ee2244" stroke-width="1.25" fill="none" stroke-linejoin="round"/>
<path d="M9.5 539.6L13.5 538.0L17.5 538.0L21.5 537.5L25.5 538.6L29.5 537.9L33.5 535.3L37.5 541.7L41.5 544.9L45.5 545.7L49.5 546.4L53.5 550.7L57.5 556.1L61.5 555.9L65.5 556.0L69.5 556.7L73.5 557.1L77.5 556.0L81.5 555.2L85.5 553.5L89.5 551.7L93.5 549.5L97.5 545.0L101.5 542.0L105.5 550.6L109.5 548.2L113.5 545.2L117.5 543.2L121.5 542.4L125.5 542.0L129.5 547.2L133.5 547.5L137.5 554.5L141.5 551.7L145.5 552.7L149.5 551.2L153.5 548.8L157.5 546.3L161.5 553.4L165.5 558.8L169.5 555.1L173.5 555.8L177.5 558.3L181.5 560.2L185.5 562.8L189.5 561.5L193.5 563.1L197.5 557.8L201.5 552.1L205.5 554.6L209.5 553.9L213.5 553.6L217.5 554.6L221.5 556.0L225.5 553.2L229.5 564.1L233.5 563.9L237.5 563.6L241.5 562.5L245.5 560.6L249.5 552.7L253.5 553.2L257.5 554.3L261.5 554.2L265.5 553.6L269.5 562.0L273.5 562.2L277.5 561.9L281.5 563.6L285.5 564.0L289.5 564.3L293.5 564.8L297.5 562.8L301.5 568.5L305.5 565.1L309.5 563.1L313.5 560.1L317.5 556.3L321.5 559.1L325.5 558.5L329.5 557.2L333.5 559.0L337.5 562.8L341.5 559.3L345.5 567.4L349.5 569.4L353.5 567.9L357.5 567.6L361.5 565.5L365.5 561.5L369.5 559.5L373.5 554.1L377.5 554.8L381.5 553.7L385.5 551.0L389.5 549.0L393.5 548.8L397.5 548.8L401.5 552.9L405.5 556.0L409.5 553.3L413.5 551.6L417.5 557.5L421.5 560.0L425.5 556.6L429.5 554.3L433.5 555.3L437.5 557.5L441.5 549.7L445.5 548.5L449.5 552.1L453.5 550.7L457.5 551.2L461.5 551.9L465.5 553.8L469.5 556.5L473.5 554.1L477.5 555.4L481.5 554.4L485.5 557.8L489.5 563.8L493.5 568.6L497.5 565.4L501.5 566.8L505.5 562.6L509.5 558.9L513.5 560.6L517.5 557.3L521.5 557.4L525.5 558.3L529.5 557.5L533.5 550.9L537.5 548.1L541.5 547.0L545.5 545.2L549.5 542.1L553.5 542.0L557.5 541.5L561.5 547.6L565.5 546.0L569.5 545.7L573.5 548.4L577.5 554.0L581.5 558.4L585.5 558.2L589.5 558.2L593.5 558.9L597.5 557.6L601.5 563.9L605.5 565.9L609.5 562.9L613.5 563.2L617.5 561.1L621.5 558.8L625.5 556.8L629.5 558.3L633.5 559.3L637.5 564.6L641.5 566.8L645.5 566.1L649.5 570.6L653.5 569.2L657.5 570.1L661.5 561.4L665.5 559.2L669.5 558.9L673.5 558.2L677.5 558.6L681.5 556.5L685.5 548.4L689.5 544.9L693.5 542.9L697.5 542.6L701.5 545.0L705.5 546.8L709.5 555.0L713.5 558.2L717.5 564.4L721.5 562.7L725.5 561.9L729.5 552.7L733.5 554.5L737.5 552.4L741.5 552.5L745.5 549.8L749.5 543.7L753.5 542.1L757.5 540.9L761.5 539.3L765.5 536.7L769.5 536.5L773.5 535.6L777.5 546.2L781.5 544.7L785.5 543.9L789.5 545.6L793.5 545.6L797.5 545.3L801.5 545.3L805.5 545.7L809.5 548.2L813.5 549.3L817.5 548.7L821.5 551.7L825.5 548.5L829.5 545.7L833.5 545.3L837.5 550.8L841.5 555.1L845.5 558.1L849.5 560.2L853.5 558.7L857.5 559.9L861.5 557.6L865.5 551.1L869.5 548.0L873.5 553.8L877.5 558.1L881.5 554.9L885.5 556.4L889.5 561.5L893.5 568.9L897.5 570.8L901.5 572.3L905.5 574.9L909.5 573.2L913.5 573.4L917.5 573.9L921.5 574.1L925.5 574.7L929.5 571.2L933.5 570.5L937.5 573.2L941.5 575.6L945.5 577.4L949.5 580.8L953.5 579.5L957.5 577.9L961.5 577.9L965.5 577.3L969.5 573.9L973.5 571.5L977.5 570.8L981.5 571.9L985.5 568.5L989.5 567.8L993.5 572.0L997.5 574.5L1001.5 569.5L1005.5 566.8L1009.5 569.2L1013.5 568.8L1017.5 572.4L1021.5 573.0L1025.5 569.8L1029.5 572.6L1033.5 572.3L1037.5 571.4L1041.5 572.3L1045.5 568.6L1049.5 561.5L1053.5 559.8L1057.5 558.8L1061.5 553.0L1065.5 548.7L1069.5 562.5L1073.5 562.1L1077.5 559.5L1081.5 559.9L1085.5 559.3L1089.5 557.7L1093.5 555.3L1097.5 558.0L1101.5 556.5L1105.5 556.3L1109.5 559.1L1113.5 561.2L1117.5 561.0L1121.5 560.8L1125.5 560.2L1129.5 558.4L1133.5 559.8L1137.5 557.6L1141.5 557.4L1145.5 556.5L1149.5 560.1L1153.5 559.3L1157.5 559.2L1161.5 553.4L1165.5 558.0L1169.5 566.2L1173.5 569.9L1177.5 570.0L1181.5 571.3L1185.5 573.3L1189.5 575.9L1193.5 571.2L1197.5 570.5L1201.5 568.8L1205.5 568.7L1209.5 560.4L1213.5 557.7L1217.5 556.9L1221.5 559.1L1225.5 558.3L1229.5 560.3L1233.5 562.6L1237.5 556.1L1241.5 550.5L1245.5 549.5L1249.5 551.0L1253.5 549.7L1257.5 555.5L1261.5 559.2L1265.5 559.4L1269.5 555.4L1273.5 554.0L1277.5 551.1L1281.5 546.1L1285.5 542.6L1289.5 540.9L1293.5 547.0L1297.5 550.5L1301.5 556.2L1305.5 563.2L1309.5 561.2L1313.5 561.2L1317.5 560.7L1321.5 560.2L1325.5 559.4L1329.5 557.2L1333.5 558.6L1337.5 564.7L1341.5 567.4L1345.5 569.6L1349.5 566.9L1353.5 566.7L1357.5 570.9L1361.5 567.9L1365.5 567.8L1369.5 566.7L1373.5 566.8L1377.5 568.2L1381.5 565.0L1385.5 565.5L1389.5 566.7L1393.5 568.1L1397.5 563.2L1401.5 557.1L1405.5 562.8L1409.5 565.6L1413.5 569.1" stroke="#c436cf" stroke-width="1.05" fill="none" stroke-linejoin="round"/>
<path d="M9.5 529.8L13.5 527.2L17.5 527.6L21.5 527.0L25.5 529.5L29.5 528.5L33.5 524.0L37.5 536.6L41.5 542.8L45.5 544.1L49.5 545.4L53.5 553.4L57.5 563.5L61.5 562.6L65.5 562.2L69.5 563.1L73.5 563.3L77.5 560.7L81.5 558.9L85.5 555.2L89.5 551.5L93.5 547.2L97.5 538.6L101.5 533.1L105.5 549.8L109.5 545.2L113.5 539.5L117.5 535.9L121.5 534.6L125.5 534.1L129.5 544.2L133.5 544.8L137.5 558.2L141.5 552.6L145.5 554.2L149.5 551.2L153.5 546.6L157.5 541.7L161.5 555.4L165.5 565.3L169.5 558.0L173.5 559.0L177.5 563.6L181.5 566.7L185.5 571.3L189.5 568.2L193.5 570.9L197.5 560.3L201.5 549.3L205.5 554.1L209.5 552.7L213.5 552.2L217.5 554.1L221.5 556.7L225.5 551.2L229.5 572.1L233.5 571.2L237.5 570.2L241.5 567.8L245.5 564.0L249.5 548.7L253.5 549.9L257.5 552.0L261.5 552.0L265.5 550.9L269.5 567.0L273.5 567.2L277.5 566.3L281.5 569.3L285.5 569.8L289.5 570.1L293.5 570.9L297.5 566.8L301.5 577.5L305.5 570.4L309.5 566.4L313.5 560.6L317.5 553.4L321.5 558.9L325.5 557.9L329.5 555.5L333.5 559.0L337.5 566.3L341.5 559.6L345.5 575.0L349.5 578.5L353.5 575.3L357.5 574.3L361.5 570.0L365.5 562.4L369.5 558.5L373.5 548.5L377.5 550.0L381.5 548.2L385.5 543.5L389.5 540.1L393.5 540.3L397.5 540.7L401.5 549.1L405.5 555.1L409.5 550.1L413.5 547.1L417.5 558.7L421.5 563.4L425.5 556.8L429.5 552.5L433.5 554.4L437.5 558.5L441.5 543.8L445.5 541.7L449.5 549.0L453.5 546.5L457.5 547.5L461.5 549.2L465.5 552.8L469.5 558.0L473.5 553.3L477.5 555.9L481.5 553.9L485.5 560.4L489.5 571.6L493.5 580.4L497.5 573.6L501.5 575.8L505.5 567.5L509.5 560.1L513.5 563.2L517.5 556.8L521.5 557.1L525.5 558.9L529.5 557.2L533.5 544.8L537.5 539.8L541.5 538.0L545.5 535.1L549.5 529.8L553.5 530.2L557.5 529.9L561.5 542.0L565.5 539.3L569.5 539.1L573.5 544.4L577.5 555.3L581.5 563.6L585.5 562.9L589.5 562.5L593.5 563.6L597.5 560.8L601.5 572.6L605.5 575.9L609.5 569.6L613.5 569.8L617.5 565.5L621.5 560.8L625.5 556.8L629.5 559.7L633.5 561.6L637.5 571.5L641.5 575.2L645.5 573.5L649.5 581.8L653.5 578.5L657.5 579.7L661.5 562.8L665.5 558.6L669.5 558.0L673.5 556.8L677.5 557.7L681.5 553.8L685.5 538.5L689.5 532.4L693.5 529.3L697.5 529.5L701.5 534.7L705.5 538.6L709.5 554.8L713.5 561.0L717.5 572.6L721.5 569.0L725.5 567.1L729.5 549.3L733.5 553.0L737.5 549.1L741.5 549.5L745.5 544.4L749.5 533.1L753.5 530.6L757.5 528.8L761.5 526.4L765.5 522.0L769.5 522.4L773.5 521.3L777.5 542.2L781.5 539.4L785.5 538.2L789.5 541.5L793.5 541.7L797.5 541.2L801.5 541.2L805.5 542.2L809.5 546.9L813.5 548.9L817.5 547.6L821.5 553.3L825.5 547.0L829.5 541.6L833.5 540.8L837.5 551.5L841.5 559.4L845.5 564.8L849.5 568.4L853.5 565.0L857.5 566.7L861.5 561.9L865.5 549.3L869.5 543.3L873.5 554.4L877.5 562.5L881.5 556.0L885.5 558.8L889.5 568.4L893.5 582.0L897.5 584.9L901.5 586.9L905.5 591.1L909.5 587.0L913.5 586.7L917.5 586.9L921.5 586.7L925.5 587.2L929.5 579.8L933.5 578.2L937.5 583.0L941.5 587.0L945.5 590.1L949.5 595.9L953.5 592.9L957.5 589.2L961.5 588.8L965.5 587.3L969.5 580.4L973.5 575.7L977.5 574.3L981.5 576.5L985.5 569.9L989.5 568.8L993.5 576.8L997.5 581.5L1001.5 572.1L1005.5 566.9L1009.5 571.7L1013.5 571.0L1017.5 578.1L1021.5 579.1L1025.5 572.9L1029.5 578.3L1033.5 577.7L1037.5 575.9L1041.5 577.8L1045.5 570.5L1049.5 557.2L1053.5 554.4L1057.5 552.9L1061.5 542.5L1065.5 535.1L1069.5 562.2L1073.5 561.6L1077.5 556.9L1081.5 557.9L1085.5 557.2L1089.5 554.3L1093.5 550.2L1097.5 555.7L1101.5 553.1L1105.5 553.1L1109.5 558.6L1113.5 562.7L1117.5 562.5L1121.5 562.1L1125.5 561.0L1129.5 557.6L1133.5 560.3L1137.5 556.2L1141.5 556.0L1145.5 554.4L1149.5 561.4L1153.5 559.9L1157.5 559.7L1161.5 548.8L1165.5 557.9L1169.5 573.4L1173.5 580.3L1177.5 580.0L1181.5 582.0L1185.5 585.3L1189.5 589.8L1193.5 580.2L1197.5 578.3L1201.5 574.9L1205.5 574.5L1209.5 558.5L1213.5 553.6L1217.5 552.4L1221.5 556.8L1225.5 555.6L1229.5 559.7L1233.5 564.0L1237.5 551.7L1241.5 541.5L1245.5 540.1L1249.5 543.5L1253.5 541.5L1257.5 553.2L1261.5 560.3L1265.5 560.8L1269.5 553.1L1273.5 550.7L1277.5 545.3L1281.5 536.2L1285.5 530.1L1289.5 527.4L1293.5 539.9L1297.5 546.8L1301.5 557.8L1305.5 571.1L1309.5 566.9L1313.5 566.6L1317.5 565.4L1321.5 564.2L1325.5 562.4L1329.5 558.2L1333.5 560.7L1337.5 572.2L1341.5 576.9L1345.5 580.6L1349.5 575.0L1353.5 574.1L1357.5 581.7L1361.5 575.5L1365.5 574.9L1369.5 572.6L1373.5 572.5L1377.5 574.9L1381.5 568.5L1385.5 569.4L1389.5 571.6L1393.5 574.1L1397.5 564.5L1401.5 553.0L1405.5 564.0L1409.5 569.4L1413.5 575.9" stroke="#e0a32e" stroke-width="1.05" fill="none" stroke-linejoin="round"/>
<path d="M9.5 522.6L13.5 518.8L17.5 520.0L21.5 519.5L25.5 524.1L29.5 522.6L33.5 515.2L37.5 537.0L41.5 546.8L45.5 548.1L49.5 549.3L53.5 561.9L57.5 577.4L61.5 573.8L65.5 571.6L69.5 571.7L73.5 570.9L77.5 565.5L81.5 561.8L85.5 555.2L89.5 548.9L93.5 541.9L97.5 528.1L101.5 520.1L105.5 549.6L109.5 541.7L113.5 532.5L117.5 527.0L121.5 525.7L125.5 525.7L129.5 543.5L133.5 544.3L137.5 566.6L141.5 555.9L145.5 558.0L149.5 552.2L153.5 544.2L157.5 536.1L161.5 559.6L165.5 575.6L169.5 561.9L173.5 563.1L177.5 570.1L181.5 574.6L185.5 581.3L189.5 574.9L193.5 578.6L197.5 560.0L201.5 541.6L205.5 550.8L209.5 548.8L213.5 548.4L217.5 552.2L221.5 556.9L225.5 547.6L229.5 583.2L233.5 580.3L237.5 577.6L241.5 572.8L245.5 565.8L249.5 540.0L253.5 543.3L257.5 547.7L261.5 548.3L265.5 546.9L269.5 574.4L273.5 573.9L277.5 571.6L281.5 576.0L285.5 576.1L289.5 576.0L293.5 576.8L297.5 569.3L301.5 587.1L305.5 574.3L309.5 567.2L313.5 557.7L317.5 546.1L321.5 556.4L325.5 555.3L329.5 551.5L333.5 558.0L337.5 570.6L341.5 558.9L345.5 585.0L349.5 589.8L353.5 583.2L357.5 580.7L361.5 572.9L365.5 560.0L369.5 554.1L373.5 537.9L377.5 542.0L381.5 540.1L385.5 533.2L389.5 528.8L393.5 530.4L397.5 532.4L401.5 547.3L405.5 557.6L409.5 548.8L413.5 543.7L417.5 563.5L421.5 570.7L425.5 558.7L429.5 551.1L433.5 554.4L437.5 561.4L441.5 536.2L445.5 533.5L449.5 546.7L453.5 542.7L457.5 544.8L461.5 547.8L465.5 553.8L469.5 562.3L473.5 553.8L477.5 558.1L481.5 554.3L485.5 565.2L489.5 583.4L493.5 596.6L497.5 583.2L501.5 585.9L505.5 570.7L509.5 558.0L513.5 563.8L517.5 553.1L521.5 554.1L525.5 557.6L529.5 555.1L533.5 534.5L537.5 527.5L541.5 526.1L545.5 522.6L549.5 515.1L553.5 517.5L557.5 518.3L561.5 539.8L565.5 535.2L569.5 535.0L573.5 544.2L577.5 562.3L581.5 575.0L585.5 572.2L589.5 570.3L593.5 571.1L597.5 565.3L601.5 584.5L605.5 588.7L609.5 576.6L613.5 576.1L617.5 568.2L621.5 560.1L625.5 553.7L629.5 559.0L633.5 562.3L637.5 579.1L641.5 584.4L645.5 580.6L649.5 593.9L653.5 587.1L657.5 588.4L661.5 559.1L665.5 552.8L669.5 552.8L673.5 551.7L677.5 554.0L681.5 548.1L685.5 523.1L689.5 514.8L693.5 511.8L697.5 514.2L701.5 524.7L705.5 532.4L709.5 560.1L713.5 569.6L717.5 587.9L721.5 579.9L725.5 575.3L729.5 544.3L733.5 551.1L737.5 544.7L741.5 545.9L745.5 537.7L749.5 519.6L753.5 516.9L757.5 515.4L761.5 512.8L765.5 506.7L769.5 508.9L773.5 508.4L777.5 544.6L781.5 539.2L785.5 536.7L789.5 542.1L793.5 542.0L797.5 540.7L801.5 540.4L805.5 541.7L809.5 549.3L813.5 552.1L817.5 549.3L821.5 558.2L825.5 546.9L829.5 537.5L833.5 536.5L837.5 554.8L841.5 567.3L845.5 575.2L849.5 579.9L853.5 572.6L857.5 574.6L861.5 565.4L865.5 543.9L869.5 534.4L873.5 554.2L877.5 567.8L881.5 556.2L885.5 560.9L889.5 576.7L893.5 598.5L897.5 601.5L901.5 603.0L905.5 608.3L909.5 599.4L913.5 597.7L917.5 597.2L921.5 596.0L925.5 596.1L929.5 583.1L933.5 580.5L937.5 588.7L941.5 595.3L945.5 599.9L949.5 609.0L953.5 602.9L957.5 596.0L961.5 595.1L965.5 592.4L969.5 580.9L973.5 573.4L977.5 572.0L981.5 576.5L985.5 565.9L989.5 565.1L993.5 579.4L997.5 587.5L1001.5 571.3L1005.5 563.2L1009.5 572.1L1013.5 571.3L1017.5 583.5L1021.5 584.9L1025.5 574.2L1029.5 583.4L1033.5 582.2L1037.5 579.1L1041.5 582.1L1045.5 569.8L1049.5 547.9L1053.5 544.7L1057.5 543.7L1061.5 527.6L1065.5 517.2L1069.5 564.9L1073.5 563.7L1077.5 555.6L1081.5 557.5L1085.5 556.4L1089.5 551.8L1093.5 545.1L1097.5 555.0L1101.5 550.7L1105.5 551.0L1109.5 560.6L1113.5 567.3L1117.5 566.2L1121.5 565.1L1125.5 562.9L1129.5 557.1L1133.5 561.7L1137.5 554.7L1141.5 554.7L1145.5 552.1L1149.5 564.2L1153.5 561.3L1157.5 560.9L1161.5 542.5L1165.5 558.5L1169.5 584.5L1173.5 594.8L1177.5 592.6L1181.5 594.7L1185.5 598.8L1189.5 604.9L1193.5 587.3L1197.5 583.6L1201.5 577.6L1205.5 576.9L1209.5 550.1L1213.5 543.3L1217.5 542.8L1221.5 551.7L1225.5 550.4L1229.5 558.1L1233.5 565.8L1237.5 545.0L1241.5 528.7L1245.5 528.1L1249.5 535.3L1253.5 532.8L1257.5 553.5L1261.5 565.4L1265.5 565.4L1269.5 551.9L1273.5 547.9L1277.5 539.2L1281.5 524.6L1285.5 515.6L1289.5 512.7L1293.5 535.2L1297.5 547.2L1301.5 565.5L1305.5 586.6L1309.5 577.4L1313.5 575.5L1317.5 572.4L1321.5 569.4L1325.5 565.8L1329.5 558.3L1333.5 562.6L1337.5 581.7L1341.5 588.5L1345.5 593.4L1349.5 582.6L1353.5 580.4L1357.5 592.7L1361.5 581.2L1365.5 579.7L1369.5 575.5L1373.5 575.3L1377.5 579.4L1381.5 568.4L1385.5 570.2L1389.5 574.1L1393.5 578.3L1397.5 562.0L1401.5 543.3L1405.5 563.1L1409.5 572.6L1413.5 583.4" stroke="#2ec4a6" stroke-width="1.05" fill="none" stroke-linejoin="round"/>
<path d="M28 645.9h3v47.1h-3zM32 648.8h3v44.2h-3zM36 654.4h3v38.6h-3zM40 661.9h3v31.1h-3zM44 669.4h3v23.6h-3zM48 677.2h3v15.8h-3zM52 686.8h3v6.2h-3zM124 676.4h3v16.6h-3zM128 680.6h3v12.4h-3zM132 686.0h3v7.0h-3zM136 691.1h3v1.9h-3zM264 688.6h3v4.4h-3zM268 691.7h3v1.3h-3zM320 691.8h3v1.2h-3zM324 691.0h3v2.0h-3zM332 690.8h3v2.2h-3zM336 691.5h3v1.5h-3zM400 677.3h3v15.7h-3zM404 679.4h3v13.6h-3zM408 681.9h3v11.1h-3zM412 684.5h3v8.5h-3zM416 686.9h3v6.1h-3zM420 688.9h3v4.1h-3zM424 690.3h3v2.7h-3zM428 691.3h3v1.7h-3zM432 691.7h3v1.3h-3zM436 691.5h3v1.5h-3zM456 689.2h3v3.8h-3zM460 689.9h3v3.1h-3zM464 691.0h3v2.0h-3zM468 691.8h3v1.2h-3zM528 691.8h3v1.2h-3zM556 672.7h3v20.3h-3zM560 674.3h3v18.7h-3zM564 676.7h3v16.3h-3zM568 680.3h3v12.7h-3zM572 684.3h3v8.7h-3zM576 688.6h3v4.4h-3zM704 679.0h3v14.0h-3zM708 683.0h3v10.0h-3zM712 688.1h3v4.9h-3zM732 691.8h3v1.2h-3zM776 655.3h3v37.7h-3zM780 661.1h3v31.9h-3zM784 666.5h3v26.5h-3zM788 671.5h3v21.5h-3zM792 676.5h3v16.5h-3zM796 681.7h3v11.3h-3zM800 686.4h3v6.6h-3zM804 690.1h3v2.9h-3zM976 691.8h3v1.2h-3zM996 683.9h3v9.1h-3zM1016 683.9h3v9.1h-3zM1020 684.6h3v8.4h-3zM1024 685.3h3v7.7h-3zM1028 686.3h3v6.7h-3zM1032 687.5h3v5.5h-3zM1036 688.5h3v4.5h-3zM1068 669.8h3v23.2h-3zM1072 674.5h3v18.5h-3zM1076 676.7h3v16.3h-3zM1080 677.7h3v15.3h-3zM1084 678.2h3v14.8h-3zM1100 677.9h3v15.1h-3zM1104 679.0h3v14.0h-3zM1108 681.5h3v11.5h-3zM1112 684.9h3v8.1h-3zM1116 688.2h3v4.8h-3zM1120 690.6h3v2.4h-3zM1124 691.8h3v1.2h-3zM1140 691.8h3v1.2h-3zM1144 691.7h3v1.3h-3zM1148 691.8h3v1.2h-3zM1152 691.8h3v1.2h-3zM1212 691.8h3v1.2h-3zM1252 680.4h3v12.6h-3zM1256 681.8h3v11.2h-3zM1260 683.8h3v9.2h-3zM1264 685.4h3v7.6h-3zM1268 686.3h3v6.7h-3zM1292 670.8h3v22.2h-3zM1296 674.6h3v18.4h-3zM1300 681.3h3v11.7h-3zM1304 689.8h3v3.2h-3zM1408 691.7h3v1.3h-3z" fill="#5abf8f"/><path d="M8.5 655.5h2v37h-2zM12.5 651.5h2v41h-2zM16.5 648.5h2v44h-2zM20.5 646.5h2v46h-2zM24.5 645.5h2v47h-2zM104.5 691.5h2v1h-2zM108.5 687.5h2v5h-2zM112.5 682.5h2v10h-2zM116.5 678.5h2v14h-2zM120.5 675.5h2v17h-2zM252.5 691.5h2v1h-2zM256.5 688.5h2v4h-2zM260.5 687.5h2v5h-2zM328.5 691.5h2v1h-2zM372.5 689.5h2v3h-2zM376.5 685.5h2v7h-2zM380.5 682.5h2v10h-2zM384.5 679.5h2v13h-2zM388.5 677.5h2v15h-2zM392.5 676.5h2v16h-2zM396.5 676.5h2v16h-2zM440.5 691.5h2v1h-2zM444.5 690.5h2v2h-2zM448.5 689.5h2v3h-2zM452.5 689.5h2v3h-2zM532.5 688.5h2v4h-2zM536.5 683.5h2v9h-2zM540.5 678.5h2v14h-2zM544.5 675.5h2v17h-2zM548.5 673.5h2v19h-2zM552.5 672.5h2v20h-2zM680.5 691.5h2v1h-2zM684.5 688.5h2v4h-2zM688.5 685.5h2v7h-2zM692.5 681.5h2v11h-2zM696.5 678.5h2v14h-2zM700.5 677.5h2v15h-2zM736.5 690.5h2v2h-2zM740.5 690.5h2v2h-2zM744.5 688.5h2v4h-2zM748.5 684.5h2v8h-2zM752.5 678.5h2v14h-2zM756.5 671.5h2v21h-2zM760.5 664.5h2v28h-2zM764.5 658.5h2v34h-2zM768.5 653.5h2v39h-2zM772.5 652.5h2v40h-2zM980.5 688.5h2v4h-2zM984.5 686.5h2v6h-2zM988.5 684.5h2v8h-2zM992.5 684.5h2v8h-2zM1000.5 684.5h2v8h-2zM1004.5 684.5h2v8h-2zM1008.5 683.5h2v9h-2zM1012.5 683.5h2v9h-2zM1040.5 688.5h2v4h-2zM1044.5 686.5h2v6h-2zM1048.5 682.5h2v10h-2zM1052.5 678.5h2v14h-2zM1056.5 673.5h2v19h-2zM1060.5 668.5h2v24h-2zM1064.5 666.5h2v26h-2zM1088.5 678.5h2v14h-2zM1092.5 678.5h2v14h-2zM1096.5 678.5h2v14h-2zM1216.5 689.5h2v3h-2zM1220.5 687.5h2v5h-2zM1224.5 685.5h2v7h-2zM1228.5 685.5h2v7h-2zM1232.5 685.5h2v7h-2zM1236.5 683.5h2v9h-2zM1240.5 682.5h2v10h-2zM1244.5 681.5h2v11h-2zM1248.5 680.5h2v12h-2zM1272.5 686.5h2v6h-2zM1276.5 683.5h2v9h-2zM1280.5 678.5h2v14h-2zM1284.5 673.5h2v19h-2zM1288.5 670.5h2v22h-2zM1400.5 691.5h2v1h-2zM1404.5 690.5h2v2h-2z" fill="#000" stroke="#5abf8f" stroke-width="1"/><path d="M56 693.0h3v3.8h-3zM60 693.0h3v11.7h-3zM64 693.0h3v17.3h-3zM68 693.0h3v20.3h-3zM72 693.0h3v21.4h-3zM100 693.0h3v1.2h-3zM140 693.0h3v2.4h-3zM144 693.0h3v6.0h-3zM148 693.0h3v7.8h-3zM160 693.0h3v6.9h-3zM164 693.0h3v10.0h-3zM168 693.0h3v12.5h-3zM172 693.0h3v13.8h-3zM176 693.0h3v16.3h-3zM180 693.0h3v19.4h-3zM184 693.0h3v22.0h-3zM188 693.0h3v23.3h-3zM216 693.0h3v1.5h-3zM220 693.0h3v1.6h-3zM224 693.0h3v3.5h-3zM228 693.0h3v7.6h-3zM232 693.0h3v12.5h-3zM236 693.0h3v15.6h-3zM272 693.0h3v2.9h-3zM276 693.0h3v6.0h-3zM280 693.0h3v8.0h-3zM284 693.0h3v9.2h-3zM288 693.0h3v9.9h-3zM292 693.0h3v10.6h-3zM296 693.0h3v12.0h-3zM300 693.0h3v13.4h-3zM304 693.0h3v13.6h-3zM316 693.0h3v2.0h-3zM340 693.0h3v1.2h-3zM344 693.0h3v5.1h-3zM348 693.0h3v9.5h-3zM352 693.0h3v11.8h-3zM368 693.0h3v1.2h-3zM472 693.0h3v1.2h-3zM476 693.0h3v1.8h-3zM480 693.0h3v2.7h-3zM484 693.0h3v4.0h-3zM488 693.0h3v5.7h-3zM492 693.0h3v7.5h-3zM496 693.0h3v8.8h-3zM500 693.0h3v9.8h-3zM504 693.0h3v9.9h-3zM580 693.0h3v1.2h-3zM584 693.0h3v4.7h-3zM588 693.0h3v7.8h-3zM592 693.0h3v9.9h-3zM596 693.0h3v11.4h-3zM600 693.0h3v12.4h-3zM604 693.0h3v13.1h-3zM608 693.0h3v13.4h-3zM612 693.0h3v13.5h-3zM644 693.0h3v7.3h-3zM648 693.0h3v7.8h-3zM652 693.0h3v8.4h-3zM676 693.0h3v1.2h-3zM716 693.0h3v1.2h-3zM720 693.0h3v3.6h-3zM724 693.0h3v4.0h-3zM728 693.0h3v2.1h-3zM808 693.0h3v1.2h-3zM812 693.0h3v4.3h-3zM816 693.0h3v7.9h-3zM820 693.0h3v10.4h-3zM824 693.0h3v11.6h-3zM828 693.0h3v12.4h-3zM832 693.0h3v13.7h-3zM836 693.0h3v15.2h-3zM840 693.0h3v16.8h-3zM844 693.0h3v18.5h-3zM848 693.0h3v19.8h-3zM852 693.0h3v20.2h-3zM876 693.0h3v11.6h-3zM880 693.0h3v12.1h-3zM884 693.0h3v12.2h-3zM888 693.0h3v14.3h-3zM892 693.0h3v21.1h-3zM896 693.0h3v30.6h-3zM900 693.0h3v38.8h-3zM904 693.0h3v43.4h-3zM908 693.0h3v43.9h-3zM944 693.0h3v19.3h-3zM948 693.0h3v20.6h-3zM952 693.0h3v21.0h-3zM1128 693.0h3v1.2h-3zM1132 693.0h3v1.2h-3zM1136 693.0h3v1.2h-3zM1156 693.0h3v1.2h-3zM1160 693.0h3v1.2h-3zM1164 693.0h3v1.7h-3zM1168 693.0h3v5.7h-3zM1172 693.0h3v11.1h-3zM1176 693.0h3v16.1h-3zM1180 693.0h3v19.6h-3zM1184 693.0h3v21.2h-3zM1308 693.0h3v4.2h-3zM1312 693.0h3v8.7h-3zM1316 693.0h3v10.7h-3zM1320 693.0h3v11.3h-3zM1324 693.0h3v11.5h-3zM1332 693.0h3v11.5h-3zM1336 693.0h3v13.1h-3zM1340 693.0h3v14.7h-3zM1352 693.0h3v15.9h-3zM1356 693.0h3v18.3h-3zM1360 693.0h3v19.7h-3zM1396 693.0h3v1.2h-3zM1412 693.0h3v1.5h-3z" fill="#ea5062"/><path d="M76.5 693.5h2v20h-2zM80.5 693.5h2v19h-2zM84.5 693.5h2v17h-2zM88.5 693.5h2v13h-2zM92.5 693.5h2v9h-2zM96.5 693.5h2v3h-2zM152.5 693.5h2v7h-2zM156.5 693.5h2v5h-2zM192.5 693.5h2v22h-2zM196.5 693.5h2v19h-2zM200.5 693.5h2v12h-2zM204.5 693.5h2v6h-2zM208.5 693.5h2v3h-2zM212.5 693.5h2v1h-2zM240.5 693.5h2v14h-2zM244.5 693.5h2v9h-2zM248.5 693.5h2v3h-2zM308.5 693.5h2v10h-2zM312.5 693.5h2v6h-2zM356.5 693.5h2v11h-2zM360.5 693.5h2v8h-2zM364.5 693.5h2v4h-2zM508.5 693.5h2v8h-2zM512.5 693.5h2v7h-2zM516.5 693.5h2v5h-2zM520.5 693.5h2v4h-2zM524.5 693.5h2v2h-2zM616.5 693.5h2v12h-2zM620.5 693.5h2v11h-2zM624.5 693.5h2v9h-2zM628.5 693.5h2v8h-2zM632.5 693.5h2v7h-2zM636.5 693.5h2v6h-2zM640.5 693.5h2v6h-2zM656.5 693.5h2v7h-2zM660.5 693.5h2v6h-2zM664.5 693.5h2v5h-2zM668.5 693.5h2v3h-2zM672.5 693.5h2v1h-2zM856.5 693.5h2v19h-2zM860.5 693.5h2v17h-2zM864.5 693.5h2v14h-2zM868.5 693.5h2v11h-2zM872.5 693.5h2v10h-2zM912.5 693.5h2v41h-2zM916.5 693.5h2v37h-2zM920.5 693.5h2v33h-2zM924.5 693.5h2v28h-2zM928.5 693.5h2v24h-2zM932.5 693.5h2v20h-2zM936.5 693.5h2v19h-2zM940.5 693.5h2v18h-2zM956.5 693.5h2v18h-2zM960.5 693.5h2v15h-2zM964.5 693.5h2v12h-2zM968.5 693.5h2v8h-2zM972.5 693.5h2v3h-2zM1188.5 693.5h2v20h-2zM1192.5 693.5h2v18h-2zM1196.5 693.5h2v15h-2zM1200.5 693.5h2v11h-2zM1204.5 693.5h2v7h-2zM1208.5 693.5h2v2h-2zM1328.5 693.5h2v10h-2zM1344.5 693.5h2v14h-2zM1348.5 693.5h2v14h-2zM1364.5 693.5h2v18h-2zM1368.5 693.5h2v15h-2zM1372.5 693.5h2v13h-2zM1376.5 693.5h2v11h-2zM1380.5 693.5h2v8h-2zM1384.5 693.5h2v5h-2zM1388.5 693.5h2v3h-2zM1392.5 693.5h2v1h-2z" fill="#000" stroke="#ea5062" stroke-width="1"/>
<path d="M9.5 688.2L13.5 683.6L17.5 678.5L21.5 673.3L25.5 668.0L29.5 662.7L33.5 657.8L37.5 653.5L41.5 650.0L45.5 647.4L49.5 645.6L53.5 644.9L57.5 645.4L61.5 646.7L65.5 648.6L69.5 650.9L73.5 653.3L77.5 655.6L81.5 657.9L85.5 659.8L89.5 661.5L93.5 662.5L97.5 663.0L101.5 663.0L105.5 662.8L109.5 662.1L113.5 660.9L117.5 659.2L121.5 657.2L125.5 655.4L129.5 654.0L133.5 653.2L137.5 653.0L141.5 653.2L145.5 653.9L149.5 654.8L153.5 655.6L157.5 656.3L161.5 657.1L165.5 658.2L169.5 659.6L173.5 661.2L177.5 663.0L181.5 665.1L185.5 667.6L189.5 670.2L193.5 672.8L197.5 674.9L201.5 676.4L205.5 677.2L209.5 677.7L213.5 678.0L217.5 678.1L221.5 678.3L225.5 678.7L229.5 679.5L233.5 680.9L237.5 682.7L241.5 684.3L245.5 685.5L249.5 685.9L253.5 685.6L257.5 685.0L261.5 684.4L265.5 683.9L269.5 683.8L273.5 684.1L277.5 684.7L281.5 685.6L285.5 686.7L289.5 687.8L293.5 689.0L297.5 690.3L301.5 691.8L305.5 693.3L309.5 694.6L313.5 695.3L317.5 695.5L321.5 695.5L325.5 695.2L329.5 695.0L333.5 694.7L337.5 694.6L341.5 694.6L345.5 695.2L349.5 696.3L353.5 697.6L357.5 698.9L361.5 699.9L365.5 700.5L369.5 700.6L373.5 700.1L377.5 699.2L381.5 697.9L385.5 696.4L389.5 694.7L393.5 692.8L397.5 690.9L401.5 689.1L405.5 687.6L409.5 686.4L413.5 685.4L417.5 684.8L421.5 684.3L425.5 684.0L429.5 683.8L433.5 683.7L437.5 683.5L441.5 683.2L445.5 682.8L449.5 682.4L453.5 681.9L457.5 681.5L461.5 681.1L465.5 680.9L469.5 680.9L473.5 680.9L477.5 681.1L481.5 681.4L485.5 681.9L489.5 682.5L493.5 683.4L497.5 684.3L501.5 685.4L505.5 686.5L509.5 687.6L513.5 688.4L517.5 689.1L521.5 689.7L525.5 690.0L529.5 689.9L533.5 689.4L537.5 688.3L541.5 686.7L545.5 684.6L549.5 682.4L553.5 680.0L557.5 677.7L561.5 675.7L565.5 673.8L569.5 672.4L573.5 671.4L577.5 671.0L581.5 671.0L585.5 671.5L589.5 672.4L593.5 673.5L597.5 674.8L601.5 676.2L605.5 677.6L609.5 679.1L613.5 680.6L617.5 682.1L621.5 683.4L625.5 684.5L629.5 685.5L633.5 686.4L637.5 687.2L641.5 688.0L645.5 688.8L649.5 689.7L653.5 690.6L657.5 691.5L661.5 692.3L665.5 692.9L669.5 693.4L673.5 693.6L677.5 693.6L681.5 693.4L685.5 692.8L689.5 691.9L693.5 690.5L697.5 688.8L701.5 687.1L705.5 685.5L709.5 684.4L713.5 683.8L717.5 683.9L721.5 684.3L725.5 684.7L729.5 684.9L733.5 684.9L737.5 684.6L741.5 684.2L745.5 683.7L749.5 682.6L753.5 680.9L757.5 678.5L761.5 675.3L765.5 671.4L769.5 666.9L773.5 662.3L777.5 658.1L781.5 654.5L785.5 651.6L789.5 649.2L793.5 647.3L797.5 646.1L801.5 645.3L805.5 645.0L809.5 645.0L813.5 645.5L817.5 646.4L821.5 647.6L825.5 648.9L829.5 650.2L833.5 651.8L837.5 653.5L841.5 655.3L845.5 657.4L849.5 659.6L853.5 661.9L857.5 664.1L861.5 666.1L865.5 667.7L869.5 669.0L873.5 670.3L877.5 671.5L881.5 672.9L885.5 674.3L889.5 675.9L893.5 678.2L897.5 681.6L901.5 686.0L905.5 690.8L909.5 695.7L913.5 700.3L917.5 704.6L921.5 708.4L925.5 711.6L929.5 714.4L933.5 716.8L937.5 718.9L941.5 721.1L945.5 723.2L949.5 725.5L953.5 727.8L957.5 730.0L961.5 731.8L965.5 733.2L969.5 734.2L973.5 734.6L977.5 734.5L981.5 734.0L985.5 733.2L989.5 732.3L993.5 731.3L997.5 730.2L1001.5 729.2L1005.5 728.2L1009.5 727.1L1013.5 726.0L1017.5 725.0L1021.5 724.1L1025.5 723.2L1029.5 722.5L1033.5 721.9L1037.5 721.4L1041.5 720.8L1045.5 720.0L1049.5 718.8L1053.5 717.2L1057.5 714.9L1061.5 712.1L1065.5 709.1L1069.5 706.5L1073.5 704.4L1077.5 702.6L1081.5 700.9L1085.5 699.3L1089.5 697.6L1093.5 695.9L1097.5 694.2L1101.5 692.5L1105.5 690.9L1109.5 689.6L1113.5 688.7L1117.5 688.2L1121.5 687.9L1125.5 687.9L1129.5 687.9L1133.5 687.9L1137.5 687.9L1141.5 687.9L1145.5 687.7L1149.5 687.6L1153.5 687.6L1157.5 687.6L1161.5 687.7L1165.5 687.9L1169.5 688.5L1173.5 689.8L1177.5 691.6L1181.5 693.8L1185.5 696.1L1189.5 698.4L1193.5 700.5L1197.5 702.2L1201.5 703.6L1205.5 704.4L1209.5 704.8L1213.5 704.7L1217.5 704.3L1221.5 703.6L1225.5 702.8L1229.5 701.9L1233.5 700.9L1237.5 699.9L1241.5 698.6L1245.5 697.3L1249.5 695.9L1253.5 694.5L1257.5 693.2L1261.5 692.2L1265.5 691.3L1269.5 690.6L1273.5 689.8L1277.5 688.6L1281.5 686.9L1285.5 684.6L1289.5 682.1L1293.5 679.6L1297.5 677.5L1301.5 676.2L1305.5 675.9L1309.5 676.4L1313.5 677.3L1317.5 678.5L1321.5 679.8L1325.5 681.1L1329.5 682.3L1333.5 683.6L1337.5 685.1L1341.5 686.7L1345.5 688.4L1349.5 690.0L1353.5 691.8L1357.5 693.8L1361.5 696.0L1365.5 698.1L1369.5 699.9L1373.5 701.4L1377.5 702.7L1381.5 703.7L1385.5 704.5L1389.5 704.9L1393.5 705.2L1397.5 705.2L1401.5 705.0L1405.5 704.6L1409.5 704.5L1413.5 704.6" stroke="#e0a32e" stroke-width="1.05" fill="none" stroke-linejoin="round"/>
<path d="M9.5 671.2L13.5 664.8L17.5 658.5L21.5 652.4L25.5 646.7L29.5 641.7L33.5 638.1L37.5 636.3L41.5 636.1L45.5 636.9L49.5 638.6L53.5 642.2L57.5 647.1L61.5 651.9L65.5 656.3L69.5 659.9L73.5 662.8L77.5 665.1L81.5 666.8L85.5 667.8L89.5 667.9L93.5 666.9L97.5 664.9L101.5 663.1L105.5 661.8L109.5 659.5L113.5 656.0L117.5 652.3L121.5 649.3L125.5 647.9L129.5 648.4L133.5 650.1L137.5 652.1L141.5 654.3L145.5 656.6L149.5 658.2L153.5 659.0L157.5 659.2L161.5 660.2L165.5 662.7L169.5 665.2L173.5 667.3L177.5 670.3L181.5 673.8L185.5 677.4L189.5 680.6L193.5 683.0L197.5 683.7L201.5 682.3L205.5 680.5L209.5 679.5L213.5 679.0L217.5 678.8L221.5 679.0L225.5 680.2L229.5 682.9L233.5 686.5L237.5 689.6L241.5 691.0L245.5 690.2L249.5 687.5L253.5 684.6L257.5 682.6L261.5 681.8L265.5 681.9L269.5 683.2L273.5 685.3L277.5 687.4L281.5 689.2L285.5 690.8L289.5 692.2L293.5 693.7L297.5 695.6L301.5 697.7L305.5 699.4L309.5 699.6L313.5 698.2L317.5 696.4L321.5 695.2L325.5 694.4L329.5 693.9L333.5 693.8L337.5 693.9L341.5 694.9L345.5 697.5L349.5 700.5L353.5 702.8L357.5 704.1L361.5 704.1L365.5 702.9L369.5 700.7L373.5 698.2L377.5 695.6L381.5 692.9L385.5 690.3L389.5 687.7L393.5 685.3L397.5 683.3L401.5 682.1L405.5 681.6L409.5 681.4L413.5 681.7L417.5 682.1L421.5 682.5L425.5 682.8L429.5 683.0L433.5 683.1L437.5 682.8L441.5 682.2L445.5 681.3L449.5 680.6L453.5 680.0L457.5 679.8L461.5 679.8L465.5 680.0L469.5 680.6L473.5 681.3L477.5 681.9L481.5 682.6L485.5 683.7L489.5 685.1L493.5 686.7L497.5 688.3L501.5 689.8L505.5 691.0L509.5 691.6L513.5 691.9L517.5 692.0L521.5 691.8L525.5 691.1L529.5 689.7L533.5 687.3L537.5 683.9L541.5 680.2L545.5 676.6L549.5 673.2L553.5 670.6L557.5 668.7L561.5 667.3L565.5 666.6L569.5 666.7L573.5 667.6L577.5 669.0L581.5 671.2L585.5 673.7L589.5 675.9L593.5 678.0L597.5 679.9L601.5 681.7L605.5 683.5L609.5 685.1L613.5 686.7L617.5 687.9L621.5 688.5L625.5 688.9L629.5 689.4L633.5 689.9L637.5 690.5L641.5 691.2L645.5 692.1L649.5 693.2L653.5 694.3L657.5 695.2L661.5 695.4L665.5 695.4L669.5 695.2L673.5 694.6L677.5 693.7L681.5 692.3L685.5 690.5L689.5 688.2L693.5 685.1L697.5 682.0L701.5 679.9L705.5 679.3L709.5 679.9L713.5 681.7L717.5 684.0L721.5 685.9L725.5 686.5L729.5 685.9L733.5 684.6L737.5 683.3L741.5 682.6L745.5 681.6L749.5 678.6L753.5 674.0L757.5 668.6L761.5 662.5L765.5 655.8L769.5 649.0L773.5 643.8L777.5 641.2L781.5 640.3L785.5 639.7L789.5 639.6L793.5 640.0L797.5 641.0L801.5 642.4L805.5 643.7L809.5 645.3L813.5 647.4L817.5 650.0L821.5 652.2L825.5 654.0L829.5 655.8L833.5 657.9L837.5 660.3L841.5 662.8L845.5 665.7L849.5 668.5L853.5 670.9L857.5 672.9L861.5 674.2L865.5 674.2L869.5 674.2L873.5 675.1L877.5 676.7L881.5 678.3L885.5 679.7L889.5 682.2L893.5 687.7L897.5 695.3L901.5 703.3L905.5 710.2L909.5 715.3L913.5 718.9L917.5 721.6L921.5 723.6L925.5 724.6L929.5 725.3L933.5 726.3L937.5 727.7L941.5 729.5L945.5 731.8L949.5 734.7L953.5 737.2L957.5 738.5L961.5 739.0L965.5 739.0L969.5 738.1L973.5 736.3L977.5 734.1L981.5 731.9L985.5 730.1L989.5 728.5L993.5 727.2L997.5 726.2L1001.5 725.2L1005.5 724.0L1009.5 722.8L1013.5 721.8L1017.5 721.0L1021.5 720.3L1025.5 719.8L1029.5 719.5L1033.5 719.5L1037.5 719.4L1041.5 718.6L1045.5 716.8L1049.5 714.1L1053.5 710.4L1057.5 705.9L1061.5 700.8L1065.5 697.0L1069.5 696.2L1073.5 696.2L1077.5 695.3L1081.5 694.1L1085.5 692.7L1089.5 691.0L1093.5 689.1L1097.5 687.3L1101.5 685.8L1105.5 684.7L1109.5 684.5L1113.5 685.1L1117.5 686.0L1121.5 686.9L1125.5 687.6L1129.5 688.0L1133.5 688.1L1137.5 688.0L1141.5 687.6L1145.5 687.2L1149.5 687.1L1153.5 687.5L1157.5 687.9L1161.5 687.9L1165.5 688.7L1169.5 691.1L1173.5 694.7L1177.5 698.8L1181.5 702.5L1185.5 705.6L1189.5 707.7L1193.5 708.8L1197.5 709.2L1201.5 708.8L1205.5 708.0L1209.5 706.4L1213.5 704.4L1217.5 702.6L1221.5 700.8L1225.5 699.4L1229.5 698.3L1233.5 697.2L1237.5 695.6L1241.5 693.7L1245.5 691.8L1249.5 690.2L1253.5 688.8L1257.5 688.2L1261.5 688.1L1265.5 687.9L1269.5 687.6L1273.5 686.6L1277.5 684.0L1281.5 680.0L1285.5 675.6L1289.5 671.8L1293.5 669.7L1297.5 669.3L1301.5 671.0L1305.5 674.5L1309.5 678.2L1313.5 681.2L1317.5 683.3L1321.5 684.9L1325.5 686.2L1329.5 687.4L1333.5 688.8L1337.5 690.9L1341.5 693.3L1345.5 694.9L1349.5 696.5L1353.5 698.8L1357.5 701.9L1361.5 704.8L1365.5 706.4L1369.5 707.1L1373.5 707.6L1377.5 707.9L1381.5 707.7L1385.5 707.4L1389.5 706.8L1393.5 706.2L1397.5 705.3L1401.5 704.0L1405.5 703.3L1409.5 703.9L1413.5 705.3" stroke="#2ec4a6" stroke-width="1.05" fill="none" stroke-linejoin="round"/>
<path d="M9.5 788.7L13.5 787.2L17.5 785.8L21.5 784.5L25.5 783.8L29.5 783.2L33.5 782.3L37.5 783.3L41.5 786.6L45.5 792.0L49.5 798.2L53.5 805.6L57.5 814.3L61.5 821.4L65.5 826.7L69.5 830.6L73.5 832.0L77.5 831.3L81.5 828.8L85.5 825.0L89.5 820.0L93.5 814.4L97.5 808.8L101.5 802.9L105.5 800.2L109.5 797.6L113.5 794.7L117.5 792.1L121.5 789.9L125.5 788.1L129.5 788.7L133.5 791.4L137.5 795.8L141.5 799.9L145.5 804.2L149.5 808.5L153.5 811.5L157.5 811.2L161.5 813.0L165.5 817.4L169.5 820.1L173.5 821.8L177.5 824.6L181.5 828.4L185.5 832.7L189.5 836.1L193.5 839.2L197.5 837.9L201.5 833.0L205.5 827.2L209.5 821.6L213.5 816.7L217.5 813.5L221.5 811.5L225.5 809.2L229.5 812.4L233.5 817.6L237.5 822.5L241.5 825.4L245.5 825.6L249.5 822.1L253.5 817.5L257.5 813.4L261.5 810.0L265.5 807.2L269.5 809.2L273.5 813.0L277.5 817.5L281.5 822.1L285.5 826.2L289.5 829.6L293.5 832.5L297.5 834.2L301.5 836.9L305.5 837.4L309.5 834.5L313.5 828.8L317.5 821.5L321.5 817.1L325.5 814.0L329.5 811.6L333.5 810.5L337.5 810.9L341.5 813.1L345.5 817.1L349.5 822.3L353.5 826.5L357.5 829.9L361.5 831.6L365.5 830.6L369.5 826.4L373.5 820.1L377.5 814.0L381.5 808.5L385.5 803.5L389.5 799.2L393.5 795.9L397.5 793.5L401.5 793.6L405.5 795.3L409.5 797.2L413.5 800.0L417.5 804.2L421.5 809.6L425.5 813.4L429.5 815.2L433.5 816.2L437.5 816.5L441.5 814.5L445.5 811.2L449.5 808.2L453.5 805.5L457.5 803.8L461.5 803.2L465.5 803.7L469.5 805.8L473.5 807.8L477.5 810.7L481.5 814.1L485.5 817.7L489.5 822.1L493.5 826.7L497.5 829.1L501.5 831.0L505.5 829.8L509.5 826.0L513.5 822.4L517.5 818.2L521.5 814.8L525.5 812.1L529.5 809.3L533.5 805.6L537.5 802.3L541.5 799.3L545.5 796.4L549.5 793.4L553.5 790.7L557.5 788.5L561.5 789.0L565.5 790.2L569.5 792.4L573.5 796.3L577.5 802.5L581.5 809.4L585.5 816.3L589.5 822.4L593.5 827.3L597.5 830.3L601.5 833.4L605.5 836.7L609.5 838.3L613.5 837.9L617.5 835.3L621.5 830.3L625.5 824.6L629.5 819.6L633.5 815.6L637.5 816.3L641.5 820.1L645.5 824.6L649.5 828.5L653.5 831.5L657.5 833.0L661.5 830.4L665.5 825.8L669.5 820.8L673.5 816.2L677.5 812.2L681.5 808.4L685.5 804.6L689.5 800.7L693.5 797.1L697.5 794.5L701.5 793.0L705.5 793.2L709.5 795.5L713.5 800.4L717.5 807.4L721.5 814.5L725.5 820.7L729.5 822.0L733.5 820.2L737.5 816.7L741.5 812.7L745.5 808.6L749.5 803.8L753.5 799.0L757.5 794.8L761.5 791.2L765.5 788.5L769.5 786.4L773.5 784.7L777.5 785.7L781.5 786.7L785.5 787.8L789.5 789.2L793.5 790.5L797.5 791.6L801.5 793.0L805.5 794.8L809.5 797.0L813.5 799.6L817.5 802.7L821.5 806.5L825.5 809.0L829.5 809.9L833.5 809.6L837.5 811.8L841.5 816.1L845.5 821.4L849.5 826.4L853.5 830.3L857.5 833.4L861.5 834.7L865.5 831.9L869.5 825.6L873.5 820.7L877.5 818.8L881.5 815.9L885.5 814.3L889.5 816.2L893.5 820.1L897.5 825.2L901.5 830.3L905.5 835.5L909.5 839.4L913.5 842.3L917.5 844.5L921.5 846.3L925.5 847.5L929.5 847.2L933.5 844.8L937.5 842.2L941.5 841.5L945.5 842.2L949.5 843.9L953.5 845.3L957.5 845.5L961.5 845.2L965.5 844.6L969.5 843.1L973.5 840.5L977.5 836.8L981.5 833.5L985.5 827.7L989.5 821.7L993.5 820.4L997.5 821.7L1001.5 821.8L1005.5 820.7L1009.5 821.5L1013.5 822.1L1017.5 825.6L1021.5 828.3L1025.5 829.0L1029.5 830.6L1033.5 833.1L1037.5 835.3L1041.5 836.9L1045.5 836.5L1049.5 831.6L1053.5 825.3L1057.5 819.5L1061.5 812.8L1065.5 806.0L1069.5 807.6L1073.5 809.8L1077.5 810.6L1081.5 811.2L1085.5 811.5L1089.5 810.9L1093.5 809.1L1097.5 807.3L1101.5 805.8L1105.5 802.9L1109.5 802.8L1113.5 805.4L1117.5 808.9L1121.5 812.4L1125.5 816.0L1129.5 818.2L1133.5 819.0L1137.5 818.5L1141.5 816.3L1145.5 813.0L1149.5 813.0L1153.5 813.1L1157.5 813.3L1161.5 812.4L1165.5 815.1L1169.5 819.6L1173.5 824.2L1177.5 828.5L1181.5 832.3L1185.5 836.3L1189.5 840.4L1193.5 843.1L1197.5 844.4L1201.5 844.1L1205.5 842.6L1209.5 835.5L1213.5 827.4L1217.5 819.3L1221.5 812.9L1225.5 807.8L1229.5 805.4L1233.5 805.3L1237.5 804.1L1241.5 801.7L1245.5 799.5L1249.5 797.7L1253.5 796.3L1257.5 797.2L1261.5 800.2L1265.5 803.7L1269.5 805.4L1273.5 806.2L1277.5 804.8L1281.5 801.2L1285.5 796.8L1289.5 792.8L1293.5 791.8L1297.5 794.1L1301.5 799.5L1305.5 806.6L1309.5 813.8L1313.5 820.2L1317.5 825.6L1321.5 829.5L1325.5 832.1L1329.5 832.4L1333.5 830.4L1337.5 831.3L1341.5 832.8L1345.5 834.9L1349.5 836.6L1353.5 837.3L1357.5 838.5L1361.5 839.0L1365.5 839.0L1369.5 838.2L1373.5 836.0L1377.5 833.4L1381.5 829.6L1385.5 826.0L1389.5 822.7L1393.5 821.6L1397.5 819.9L1401.5 816.7L1405.5 814.2L1409.5 813.3L1413.5 814.6" stroke="#e0a32e" stroke-width="1.05" fill="none" stroke-linejoin="round"/>
<path d="M9.5 787.2L13.5 784.3L17.5 782.9L21.5 781.9L25.5 782.3L29.5 782.0L33.5 780.5L37.5 785.4L41.5 793.2L45.5 802.8L49.5 810.6L53.5 820.4L57.5 831.7L61.5 835.4L65.5 837.3L69.5 838.4L73.5 834.8L77.5 829.8L81.5 824.0L85.5 817.2L89.5 810.0L93.5 803.3L97.5 797.6L101.5 791.2L105.5 794.7L109.5 792.4L113.5 788.9L117.5 786.8L121.5 785.5L125.5 784.6L129.5 789.8L133.5 797.0L137.5 804.4L141.5 808.1L145.5 812.9L149.5 817.2L153.5 817.5L157.5 810.7L161.5 816.5L165.5 826.4L169.5 825.4L173.5 825.2L177.5 830.0L181.5 836.0L185.5 841.3L189.5 843.0L193.5 845.2L197.5 835.4L201.5 823.1L205.5 815.7L209.5 810.3L213.5 807.1L217.5 806.9L221.5 807.4L225.5 804.6L229.5 818.7L233.5 828.0L237.5 832.4L241.5 831.3L245.5 825.9L249.5 815.0L253.5 808.5L257.5 805.2L261.5 803.1L265.5 801.7L269.5 813.1L273.5 820.7L277.5 826.4L281.5 831.5L285.5 834.4L289.5 836.4L293.5 838.2L297.5 837.7L301.5 842.4L305.5 838.4L309.5 828.7L313.5 817.4L317.5 806.7L321.5 808.4L325.5 808.0L329.5 806.8L333.5 808.2L337.5 811.8L341.5 817.6L345.5 825.0L349.5 832.6L353.5 835.0L357.5 836.6L361.5 834.9L365.5 828.7L369.5 817.9L373.5 807.5L377.5 801.7L381.5 797.5L385.5 793.5L389.5 790.7L393.5 789.1L397.5 788.7L401.5 793.9L405.5 798.8L409.5 800.9L413.5 805.6L417.5 812.6L421.5 820.3L425.5 820.9L429.5 818.8L433.5 818.3L437.5 817.0L441.5 810.6L445.5 804.6L449.5 802.1L453.5 800.1L457.5 800.4L461.5 801.9L465.5 804.6L469.5 810.0L473.5 811.8L477.5 816.5L481.5 821.0L485.5 824.8L489.5 830.9L493.5 836.0L497.5 833.8L501.5 834.9L505.5 827.2L509.5 818.5L513.5 815.1L517.5 809.8L521.5 808.0L525.5 806.7L529.5 803.8L533.5 798.2L537.5 795.6L541.5 793.4L545.5 790.6L549.5 787.3L553.5 785.4L557.5 784.2L561.5 790.0L565.5 792.5L569.5 796.7L573.5 804.1L577.5 814.9L581.5 823.4L585.5 830.1L589.5 834.7L593.5 837.1L597.5 836.2L601.5 839.7L605.5 843.2L609.5 841.7L613.5 837.2L617.5 829.9L621.5 820.4L625.5 813.2L629.5 809.7L633.5 807.6L637.5 817.7L641.5 827.5L645.5 833.7L649.5 836.4L653.5 837.5L657.5 835.9L661.5 825.1L665.5 816.6L669.5 810.9L673.5 806.9L677.5 804.1L681.5 800.8L685.5 797.1L689.5 792.7L693.5 790.0L697.5 789.2L701.5 790.1L705.5 793.5L709.5 800.3L713.5 810.0L717.5 821.3L721.5 828.7L725.5 833.1L729.5 824.7L733.5 816.7L737.5 809.5L741.5 804.9L745.5 800.2L749.5 794.1L753.5 789.4L757.5 786.3L761.5 784.0L765.5 783.1L769.5 782.2L773.5 781.2L777.5 787.7L781.5 788.7L785.5 790.1L789.5 792.0L793.5 793.0L797.5 793.7L801.5 795.8L805.5 798.3L809.5 801.5L813.5 804.9L817.5 808.7L821.5 814.2L825.5 814.0L829.5 811.8L833.5 808.9L837.5 816.1L841.5 824.8L845.5 832.1L849.5 836.4L853.5 838.1L857.5 839.5L861.5 837.3L865.5 826.4L869.5 812.9L873.5 810.8L877.5 815.1L881.5 809.9L885.5 811.2L889.5 820.0L893.5 828.0L897.5 835.3L901.5 840.5L905.5 845.9L909.5 847.2L913.5 848.2L917.5 849.0L921.5 849.7L925.5 850.1L929.5 846.4L933.5 840.0L937.5 837.1L941.5 840.2L945.5 843.6L949.5 847.3L953.5 848.1L957.5 845.8L961.5 844.6L965.5 843.4L969.5 840.1L973.5 835.2L977.5 829.5L981.5 826.8L985.5 816.2L989.5 809.8L993.5 817.7L997.5 824.3L1001.5 822.1L1005.5 818.4L1009.5 823.2L1013.5 823.2L1017.5 832.7L1021.5 833.6L1025.5 830.4L1029.5 833.9L1033.5 838.1L1037.5 839.6L1041.5 840.1L1045.5 835.7L1049.5 821.7L1053.5 812.7L1057.5 807.8L1061.5 799.4L1065.5 792.3L1069.5 810.8L1073.5 814.4L1077.5 812.1L1081.5 812.3L1085.5 812.3L1089.5 809.8L1093.5 805.4L1097.5 803.8L1101.5 802.8L1105.5 797.2L1109.5 802.4L1113.5 810.8L1117.5 815.7L1121.5 819.6L1125.5 823.2L1129.5 822.4L1133.5 820.7L1137.5 817.4L1141.5 812.0L1145.5 806.2L1149.5 813.2L1153.5 813.2L1157.5 813.6L1161.5 810.5L1165.5 820.7L1169.5 828.5L1173.5 833.5L1177.5 837.1L1181.5 840.0L1185.5 844.3L1189.5 848.6L1193.5 848.5L1197.5 847.0L1201.5 843.4L1205.5 839.5L1209.5 821.5L1213.5 811.1L1217.5 803.2L1221.5 800.1L1225.5 797.6L1229.5 800.6L1233.5 805.2L1237.5 801.6L1241.5 797.0L1245.5 795.0L1249.5 794.2L1253.5 793.3L1257.5 799.1L1261.5 806.1L1265.5 810.8L1269.5 808.9L1273.5 807.6L1277.5 801.9L1281.5 794.0L1285.5 788.2L1289.5 784.7L1293.5 789.7L1297.5 798.9L1301.5 810.2L1305.5 820.9L1309.5 828.0L1313.5 832.9L1317.5 836.5L1321.5 837.2L1325.5 837.4L1329.5 832.9L1333.5 826.6L1337.5 833.0L1341.5 835.7L1345.5 839.1L1349.5 839.9L1353.5 838.9L1357.5 840.8L1361.5 840.1L1365.5 838.8L1369.5 836.5L1373.5 831.7L1377.5 828.1L1381.5 822.1L1385.5 818.9L1389.5 816.0L1393.5 819.5L1397.5 816.4L1401.5 810.4L1405.5 809.1L1409.5 811.6L1413.5 817.1" stroke="#2ec4a6" stroke-width="1.05" fill="none" stroke-linejoin="round"/>
<path d="M9.5 784.4L13.5 778.4L17.5 777.3L21.5 776.8L25.5 779.5L29.5 779.6L33.5 777.0L37.5 789.6L41.5 806.4L45.5 824.4L49.5 835.4L53.5 850.1L57.5 866.4L61.5 863.6L65.5 858.5L69.5 854.0L73.5 840.5L77.5 826.8L81.5 814.4L85.5 801.6L89.5 790.1L93.5 781.1L97.5 775.1L101.5 767.7L105.5 783.8L109.5 782.0L113.5 777.3L117.5 776.2L121.5 776.8L125.5 777.5L129.5 791.9L133.5 808.0L137.5 821.8L141.5 824.5L145.5 830.2L149.5 834.5L153.5 829.4L157.5 809.6L161.5 823.5L165.5 844.2L169.5 836.1L173.5 832.0L177.5 841.0L181.5 851.4L185.5 858.6L189.5 856.7L193.5 857.4L197.5 830.5L201.5 803.2L205.5 792.7L209.5 787.7L213.5 787.7L217.5 793.9L221.5 799.4L225.5 795.4L229.5 831.5L233.5 848.9L237.5 852.2L241.5 842.9L245.5 826.5L249.5 801.0L253.5 790.3L257.5 788.7L261.5 789.3L265.5 790.7L269.5 820.9L273.5 836.1L277.5 844.2L281.5 850.2L285.5 850.8L289.5 849.9L293.5 849.5L297.5 844.6L301.5 853.4L305.5 840.4L309.5 817.1L313.5 794.6L317.5 777.2L321.5 790.9L325.5 795.8L329.5 797.0L333.5 803.7L337.5 813.6L341.5 826.4L345.5 840.7L349.5 853.4L353.5 852.1L357.5 850.1L361.5 841.6L365.5 824.8L369.5 801.0L373.5 782.4L377.5 777.1L381.5 775.5L385.5 773.5L389.5 773.7L393.5 775.7L397.5 779.3L401.5 794.4L405.5 805.6L409.5 808.3L413.5 816.9L417.5 829.5L421.5 841.7L425.5 836.1L429.5 826.0L433.5 822.6L437.5 818.0L441.5 802.7L445.5 791.4L449.5 790.0L453.5 789.2L457.5 793.7L461.5 799.5L465.5 806.5L469.5 818.4L473.5 819.8L477.5 828.2L481.5 834.8L485.5 839.1L489.5 848.5L493.5 854.6L497.5 843.3L501.5 842.5L505.5 822.2L509.5 803.4L513.5 800.5L517.5 793.0L521.5 794.3L525.5 795.9L529.5 792.8L533.5 783.3L537.5 782.4L541.5 781.5L545.5 779.1L549.5 775.1L553.5 774.7L557.5 775.5L561.5 792.1L565.5 797.1L569.5 805.4L573.5 819.7L577.5 839.7L581.5 851.3L585.5 857.6L589.5 859.2L593.5 856.7L597.5 848.0L601.5 852.2L605.5 856.2L609.5 848.3L613.5 835.6L617.5 819.3L621.5 800.6L625.5 790.3L629.5 789.8L633.5 791.6L637.5 820.5L641.5 842.4L645.5 851.8L649.5 852.2L653.5 849.3L657.5 841.7L661.5 814.7L665.5 798.1L669.5 791.1L673.5 788.4L677.5 788.1L681.5 785.7L685.5 782.1L689.5 776.9L693.5 775.7L697.5 778.7L701.5 784.3L705.5 794.2L709.5 809.7L713.5 829.3L717.5 849.3L721.5 857.3L725.5 857.9L729.5 830.2L733.5 809.5L737.5 795.1L741.5 789.2L745.5 783.6L749.5 774.9L753.5 770.4L757.5 769.5L761.5 769.7L765.5 772.3L769.5 773.7L773.5 774.3L777.5 791.8L781.5 792.8L785.5 794.6L789.5 797.6L793.5 798.1L797.5 798.0L801.5 801.4L805.5 805.5L809.5 810.5L813.5 815.5L817.5 820.7L821.5 829.5L825.5 824.0L829.5 815.5L833.5 807.5L837.5 824.8L841.5 842.2L845.5 853.4L849.5 856.4L853.5 853.7L857.5 851.8L861.5 842.6L865.5 815.4L869.5 787.6L873.5 791.0L877.5 807.8L881.5 798.1L885.5 804.9L889.5 827.6L893.5 843.8L897.5 855.4L901.5 861.0L905.5 866.6L909.5 862.9L913.5 859.9L917.5 857.8L921.5 856.5L925.5 855.2L929.5 844.9L933.5 830.4L937.5 827.0L941.5 837.5L945.5 846.4L949.5 854.1L953.5 853.7L957.5 846.5L961.5 843.4L965.5 841.0L969.5 834.0L973.5 824.7L977.5 814.8L981.5 813.4L985.5 793.2L989.5 785.9L993.5 812.3L997.5 829.6L1001.5 822.5L1005.5 813.9L1009.5 826.6L1013.5 825.5L1017.5 846.7L1021.5 844.3L1025.5 833.2L1029.5 840.5L1033.5 848.0L1037.5 848.2L1041.5 846.5L1045.5 834.1L1049.5 802.1L1053.5 787.7L1057.5 784.5L1061.5 772.8L1065.5 765.1L1069.5 817.3L1073.5 823.4L1077.5 815.1L1081.5 814.5L1085.5 813.8L1089.5 807.4L1093.5 798.1L1097.5 796.7L1101.5 796.7L1105.5 785.7L1109.5 801.6L1113.5 821.6L1117.5 829.5L1121.5 833.8L1125.5 837.4L1129.5 831.0L1133.5 824.1L1137.5 815.3L1141.5 803.5L1145.5 792.8L1149.5 813.4L1153.5 813.4L1157.5 814.4L1161.5 806.9L1165.5 831.7L1169.5 846.4L1173.5 852.0L1177.5 854.2L1181.5 855.4L1185.5 860.2L1189.5 865.0L1193.5 859.3L1197.5 852.1L1201.5 842.1L1205.5 833.4L1209.5 793.5L1213.5 778.4L1217.5 770.9L1221.5 774.4L1225.5 777.2L1229.5 791.0L1233.5 805.0L1237.5 796.6L1241.5 787.6L1245.5 786.0L1249.5 787.1L1253.5 787.5L1257.5 803.0L1261.5 818.0L1265.5 824.9L1269.5 815.8L1273.5 810.6L1277.5 796.2L1281.5 779.6L1285.5 770.9L1289.5 768.5L1293.5 785.7L1297.5 808.3L1301.5 831.7L1305.5 849.5L1309.5 856.5L1313.5 858.5L1317.5 858.4L1321.5 852.7L1325.5 847.9L1329.5 833.9L1333.5 818.9L1337.5 836.4L1341.5 841.5L1345.5 847.5L1349.5 846.7L1353.5 842.1L1357.5 845.5L1361.5 842.3L1365.5 838.5L1369.5 833.2L1373.5 823.0L1377.5 817.6L1381.5 807.1L1385.5 804.6L1389.5 802.6L1393.5 815.3L1397.5 809.5L1401.5 797.7L1405.5 799.0L1409.5 808.0L1413.5 822.2" stroke="#c436cf" stroke-width="1.05" fill="none" stroke-linejoin="round"/>
<rect x="1324.6" y="224.6" width="118.8" height="22.6" rx="2" fill="none" stroke="#fa1e14" stroke-width="3.1"/>
<rect x="1431.6" y="208.8" width="73.8" height="17.2" rx="2" fill="none" stroke="#fa1e14" stroke-width="3.1"/>
<ellipse cx="1189.5" cy="270.8" rx="12.6" ry="6" fill="none" stroke="#fa1e14" stroke-width="2.6"/>
<ellipse cx="1306.4" cy="250" rx="10" ry="3.8" fill="none" stroke="#fa1e14" stroke-width="2.4"/>
<ellipse cx="1410.1" cy="281.5" rx="9.8" ry="7.1" fill="none" stroke="#fa1e14" stroke-width="2.7"/>
<path d="M1343.2 255.4L1344.6 255.2L1383.4 281.3L1386.5 278.2L1392.6 296L1373.8 291.5L1377.4 287.4L1343 256.8z" fill="#fa1e14"/>
<path d="M1136.5 33V868" stroke="#8a919e" stroke-width="1" stroke-dasharray="5 4" fill="none"/>
<path d="M7 486.5H1571" stroke="#e2e2e2" stroke-width="1" fill="none"/>
<path d="M7 615.5H1571" stroke="#e2e2e2" stroke-width="1" fill="none"/>
<path d="M7 744.5H1571" stroke="#e2e2e2" stroke-width="1" fill="none"/>
<path d="M7 873.5H1571" stroke="#e2e2e2" stroke-width="1" fill="none"/>
<path d="M1507.6 32.5V873.5" stroke="#e2e2e2" stroke-width="1.25" fill="none"/>
<path d="M1508 73.5h5.3" stroke="#e2e2e2" stroke-width="1"/>
<text x="1539" y="77.1" text-anchor="middle" fill="#abb1bc" style="font-family:'Liberation Sans','Noto Sans CJK SC',sans-serif;font-size:12.3px">2300.00</text>
<path d="M1508 113.5h5.3" stroke="#e2e2e2" stroke-width="1"/>
<text x="1539" y="117.1" text-anchor="middle" fill="#abb1bc" style="font-family:'Liberation Sans','Noto Sans CJK SC',sans-serif;font-size:12.3px">2200.00</text>
<path d="M1508 154.5h5.3" stroke="#e2e2e2" stroke-width="1"/>
<text x="1539" y="158.1" text-anchor="middle" fill="#abb1bc" style="font-family:'Liberation Sans','Noto Sans CJK SC',sans-serif;font-size:12.3px">2100.00</text>
<path d="M1508 194.5h5.3" stroke="#e2e2e2" stroke-width="1"/>
<text x="1539" y="198.1" text-anchor="middle" fill="#abb1bc" style="font-family:'Liberation Sans','Noto Sans CJK SC',sans-serif;font-size:12.3px">2000.00</text>
<path d="M1508 234.5h5.3" stroke="#e2e2e2" stroke-width="1"/>
<text x="1539" y="238.1" text-anchor="middle" fill="#abb1bc" style="font-family:'Liberation Sans','Noto Sans CJK SC',sans-serif;font-size:12.3px">1900.00</text>
<path d="M1508 355.5h5.3" stroke="#e2e2e2" stroke-width="1"/>
<text x="1539" y="359.1" text-anchor="middle" fill="#abb1bc" style="font-family:'Liberation Sans','Noto Sans CJK SC',sans-serif;font-size:12.3px">1600.00</text>
<path d="M1508 395.5h5.3" stroke="#e2e2e2" stroke-width="1"/>
<text x="1539" y="399.1" text-anchor="middle" fill="#abb1bc" style="font-family:'Liberation Sans','Noto Sans CJK SC',sans-serif;font-size:12.3px">1500.00</text>
<path d="M1508 436.5h5.3" stroke="#e2e2e2" stroke-width="1"/>
<text x="1539" y="440.1" text-anchor="middle" fill="#abb1bc" style="font-family:'Liberation Sans','Noto Sans CJK SC',sans-serif;font-size:12.3px">1400.00</text>
<path d="M1508 476.5h5.3" stroke="#e2e2e2" stroke-width="1"/>
<text x="1539" y="480.1" text-anchor="middle" fill="#abb1bc" style="font-family:'Liberation Sans','Noto Sans CJK SC',sans-serif;font-size:12.3px">1300.00</text>
<path d="M1508 499.5h5.3" stroke="#e2e2e2" stroke-width="1"/>
<text x="1539" y="503.1" text-anchor="middle" fill="#abb1bc" style="font-family:'Liberation Sans','Noto Sans CJK SC',sans-serif;font-size:12.3px">100.00</text>
<path d="M1508 536.5h5.3" stroke="#e2e2e2" stroke-width="1"/>
<text x="1539" y="540.1" text-anchor="middle" fill="#abb1bc" style="font-family:'Liberation Sans','Noto Sans CJK SC',sans-serif;font-size:12.3px">70.00</text>
<path d="M1508 561.5h5.3" stroke="#e2e2e2" stroke-width="1"/>
<text x="1539" y="565.1" text-anchor="middle" fill="#abb1bc" style="font-family:'Liberation Sans','Noto Sans CJK SC',sans-serif;font-size:12.3px">50.00</text>
<path d="M1508 586.5h5.3" stroke="#e2e2e2" stroke-width="1"/>
<text x="1539" y="590.1" text-anchor="middle" fill="#abb1bc" style="font-family:'Liberation Sans','Noto Sans CJK SC',sans-serif;font-size:12.3px">30.00</text>
<path d="M1508 646.5h5.3" stroke="#e2e2e2" stroke-width="1"/>
<text x="1539" y="650.1" text-anchor="middle" fill="#abb1bc" style="font-family:'Liberation Sans','Noto Sans CJK SC',sans-serif;font-size:12.3px">50.00</text>
<path d="M1508 693.5h5.3" stroke="#e2e2e2" stroke-width="1"/>
<text x="1539" y="697.1" text-anchor="middle" fill="#abb1bc" style="font-family:'Liberation Sans','Noto Sans CJK SC',sans-serif;font-size:12.3px">0.00</text>
<path d="M1508 773.5h5.3" stroke="#e2e2e2" stroke-width="1"/>
<text x="1539" y="777.1" text-anchor="middle" fill="#abb1bc" style="font-family:'Liberation Sans','Noto Sans CJK SC',sans-serif;font-size:12.3px">100.00</text>
<path d="M1508 817.5h5.3" stroke="#e2e2e2" stroke-width="1"/>
<text x="1539" y="821.1" text-anchor="middle" fill="#abb1bc" style="font-family:'Liberation Sans','Noto Sans CJK SC',sans-serif;font-size:12.3px">50.00</text>
<path d="M1508 861.5h5.3" stroke="#e2e2e2" stroke-width="1"/>
<text x="1539" y="865.1" text-anchor="middle" fill="#abb1bc" style="font-family:'Liberation Sans','Noto Sans CJK SC',sans-serif;font-size:12.3px">0.00</text>
<rect x="1507.5" y="256" width="63.5" height="19.5" fill="#e0485c"/>
<rect x="1507.5" y="277" width="63.5" height="20" fill="#e0485c"/>
<rect x="1507.5" y="305.5" width="63.5" height="19.5" fill="#23272f"/>
<path d="M1508 265.5h5M1508 314.5h5" stroke="#fff" stroke-width="1"/>
<text x="1539" y="270" text-anchor="middle" fill="#fff" style="font-family:'Liberation Sans','Noto Sans CJK SC',sans-serif;font-size:12px;font-weight:bold">1821.63</text>
<text x="1539" y="290.6" text-anchor="middle" fill="#fff" style="font-family:'Liberation Sans','Noto Sans CJK SC',sans-serif;font-size:12px;font-weight:bold">43:54</text>
<text x="1539" y="319.3" text-anchor="middle" fill="#fff" style="font-family:'Liberation Sans','Noto Sans CJK SC',sans-serif;font-size:12px;font-weight:bold">1698.83</text>
<g stroke="#c8ccd6" stroke-width="1" fill="none"><rect x="1441.5" y="38.5" width="17" height="14"/><path d="M1446.5 36.5v4.5M1453.5 36.5v4.5M1444 44.5h7M1444 48.5h5"/></g>
<g stroke="#e4e6ea" stroke-width="1" fill="none"><rect x="1471.5" y="37.5" width="18" height="16"/><path d="M1481 39.5h4.500v4.500M1474.500 46v4.500h4.500"/></g>
<path d="M1528.700 32.500h34.300l-3 8q-0.700 2.100-2.800 2.100h-22.700q-2.100 0-2.800-2.100z" fill="#fff"/>
<path d="M1543 38.700l3.200-3.200 3.200 3.200" stroke="#444" stroke-width="1.300" fill="none"/>
<text x="61.5" y="889" text-anchor="middle" fill="#20242d" style="font-family:'DejaVu Sans Mono','Liberation Mono','Noto Sans CJK SC',monospace;font-size:10px"></text>
<text x="157.5" y="889" text-anchor="middle" fill="#20242d" style="font-family:'DejaVu Sans Mono','Liberation Mono','Noto Sans CJK SC',monospace;font-size:10px">3月 20</text>
<text x="253.5" y="889" text-anchor="middle" fill="#20242d" style="font-family:'DejaVu Sans Mono','Liberation Mono','Noto Sans CJK SC',monospace;font-size:10px">3月 24</text>
<text x="349.5" y="889" text-anchor="middle" fill="#20242d" style="font-family:'DejaVu Sans Mono','Liberation Mono','Noto Sans CJK SC',monospace;font-size:10px">3月 28</text>
<text x="445.5" y="889" text-anchor="middle" fill="#20242d" style="font-family:'DejaVu Sans Mono','Liberation Mono','Noto Sans CJK SC',monospace;font-size:10px">4月 1</text>
<text x="541.5" y="889" text-anchor="middle" fill="#20242d" style="font-family:'DejaVu Sans Mono','Liberation Mono','Noto Sans CJK SC',monospace;font-size:10px">4月 5</text>
<text x="637.5" y="889" text-anchor="middle" fill="#20242d" style="font-family:'DejaVu Sans Mono','Liberation Mono','Noto Sans CJK SC',monospace;font-size:10px">4月 9</text>
<text x="733.5" y="889" text-anchor="middle" fill="#20242d" style="font-family:'DejaVu Sans Mono','Liberation Mono','Noto Sans CJK SC',monospace;font-size:10px">4月 13</text>
<text x="829.5" y="889" text-anchor="middle" fill="#20242d" style="font-family:'DejaVu Sans Mono','Liberation Mono','Noto Sans CJK SC',monospace;font-size:10px">4月 17</text>
<text x="925.5" y="889" text-anchor="middle" fill="#20242d" style="font-family:'DejaVu Sans Mono','Liberation Mono','Noto Sans CJK SC',monospace;font-size:10px">4月 21</text>
<text x="1021.5" y="889" text-anchor="middle" fill="#20242d" style="font-family:'DejaVu Sans Mono','Liberation Mono','Noto Sans CJK SC',monospace;font-size:10px">4月 25</text>
<text x="1117.5" y="889" text-anchor="middle" fill="#20242d" style="font-family:'DejaVu Sans Mono','Liberation Mono','Noto Sans CJK SC',monospace;font-size:10px">4月 29</text>
<text x="1213.5" y="889" text-anchor="middle" fill="#20242d" style="font-family:'DejaVu Sans Mono','Liberation Mono','Noto Sans CJK SC',monospace;font-size:10px">5月 3</text>
<text x="1309.5" y="889" text-anchor="middle" fill="#20242d" style="font-family:'DejaVu Sans Mono','Liberation Mono','Noto Sans CJK SC',monospace;font-size:10px">5月 7</text>
<text x="1405.5" y="889" text-anchor="middle" fill="#20242d" style="font-family:'DejaVu Sans Mono','Liberation Mono','Noto Sans CJK SC',monospace;font-size:10px">5月 11</text>
<rect x="1068" y="875.5" width="137.5" height="9" fill="#262a33"/>
<text x="1136.8" y="888.5" text-anchor="middle" fill="#fff" style="font-family:'DejaVu Sans Mono','Liberation Mono','Noto Sans CJK SC',monospace;font-size:11px;font-weight:bold">2023-04-29 20:00:00</text>
</svg>
<div class="a" style="left:1571.5px;top:31px;width:176px;height:853px;background:#fff"></div>
<div class="a" style="left:1571.5px;top:32px;width:3.5px;height:852px;background:#e6e9f0"></div>
<div class="a" style="left:1574px;top:0;width:173px;height:31px;background:#fff;box-shadow:0 1px 3px rgba(0,0,0,.12)"></div>
<div class="a" style="left:1613.5px;top:0;line-height:21px;font-size:13px;font-weight:bold;color:#3d80e6;letter-spacing:-0.2px">我的自选</div>
<div class="a" style="left:1632px;top:28px;width:14px;height:3px;background:#3d80e6"></div>
<div class="sep" style="left:1703px;top:0;height:31px"></div>
<div class="a" style="left:1741px;top:0;line-height:21px;font-size:13px;color:#333">综合</div>
<div class="a" style="left:1587.5px;top:37px;line-height:17px;font-size:12px;color:#b1b5bd">自选</div>
<svg class="i" style="left:1614px;top:43px" width="8" height="5" viewBox="0 0 8 5"><path d="M0 0h8L4 4.500z" fill="#b1b5bd"/></svg>
<div class="a" style="left:1728px;top:37px;line-height:17px;font-size:12px;color:#b1b5bd">最新</div>
<div class="row" style="top:58px;"><div class="nm">BTC<i>/当季</i></div><div class="pr" style="left:134px;color:#111">27459.55</div></div>
<div class="row" style="top:94px;"><div class="nm">BTC<i>/USDT</i></div><div class="pr" style="left:134px;color:#3fae7c">27373.10</div></div>
<div class="row" style="top:130px;background:#e9f4fe;"><div class="nm">ETH<i>/USDT永续</i></div><div class="pr" style="left:142px;color:#111">1821.63</div></div>
<div class="row" style="top:166px;"><div class="nm">BTC<i>/USDT</i></div><div class="pr" style="left:134px;color:#111">27378.20</div></div>
<svg class="i" style="left:1587px;top:70px" width="12" height="12" viewBox="0 0 12 12"><circle cx="6" cy="6" r="5.700" fill="#111"/><rect x="4.700" y="1.700" width="2.600" height="2.600" fill="#fff"/><rect x="4.700" y="7.700" width="2.600" height="2.600" fill="#fff"/><rect x="1.700" y="4.700" width="2.600" height="2.600" fill="#fff"/><rect x="7.700" y="4.700" width="2.600" height="2.600" fill="#fff"/></svg>
<svg class="i" style="left:1587px;top:106px" width="12" height="12" viewBox="0 0 12 12"><circle cx="6" cy="6" r="5.800" fill="#f4f4f5"/><g fill="none" stroke="#f3ba2f" stroke-width="0.900"><path d="M6 2.500L9.500 6 6 9.500 2.500 6z"/><path d="M6 5L7 6 6 7 5 6z" fill="#f3ba2f"/></g></svg>
<svg class="i" style="left:1587px;top:142px" width="12" height="12" viewBox="0 0 12 12"><circle cx="6" cy="6" r="5.800" fill="#2b54f5"/><path d="M3.300 4.300l2.700 1.700 2.700-1.700M3.300 7.700l2.700-1.700 2.700 1.700" stroke="#fff" stroke-width="1.300" fill="none"/></svg>
<svg class="i" style="left:1589px;top:178px" width="8" height="12" viewBox="0 0 8 12"><path d="M3.600 1.200C4.200 3.200 5.200 4.400 4.600 6.600 4.300 7.800 3.400 8.600 3.300 10.300 1.600 9.800.700 8 1.500 6.200 2.200 4.600 3.700 3.600 3.600 1.200z" fill="#1b2a6b"/><path d="M5.400 5.800c1.300 1.300 1.500 3.400-.300 4.700-.900.200-1.500-.300-1.400-1.200.200-1.300 1.500-1.900 1.700-3.500z" fill="#2ca6e0"/></svg>
<div class="a" style="left:1575px;top:294px;width:172px;height:1px;background:#eef0f3"></div>
<svg class="i" style="left:1587px;top:307px" width="13" height="13" viewBox="0 0 13 13"><path d="M1 4.500h2.500L7 1.500v10L3.500 8.500H1z" fill="#4a90e8"/><path d="M8.500 4a3.500 3.500 0 0 1 0 5M10 2.200a6 6 0 0 1 0 8.600" stroke="#9cc4f4" stroke-width="1.100" fill="none"/></svg>
<div class="a" style="left:1605px;top:304px;line-height:19px;font-size:13px;color:#1c1c22">Deepcoin三方策略功能上线</div>
<div class="a" style="left:1575px;top:332.500px;width:172px;height:5.500px;background:#f0f2f5"></div>
<div class="a" style="left:1586.500px;top:362px;line-height:14px;font-size:10px;color:#e0435a">₮</div>
<div class="a" style="left:1594.500px;top:346px;line-height:36px;font-size:28px;color:#e0435a;letter-spacing:0.250px">1821.63</div>
<svg class="i" style="left:1709px;top:361px" width="8" height="6" viewBox="0 0 8 6"><path d="M1 1l3 3 3-3" fill="none" stroke="#9a9fab" stroke-width="1.200"/></svg>
<div class="a" style="left:1587px;top:384px;line-height:17px;font-size:12.800px;color:#e0435a">-1.05%(-19.36)</div>
<div class="a" style="left:1587px;top:406.500px;width:67px;height:13.500px;border-radius:7px;background:#def2e8;color:#3fae7c;font-size:12px;line-height:14px;text-align:center">₮1225.55</div>
<div class="a" style="left:1660px;top:406.500px;width:66.500px;height:13.500px;border-radius:7px;background:#fbdde2;color:#e0435a;font-size:12px;line-height:14px;text-align:center">₮1225.65</div>
<div class="a" style="left:1587.500px;top:448px;width:170px;height:6px;border-radius:3px;background:#e0435a"></div>
<div class="a" style="left:1588px;top:457.500px;line-height:17px;font-size:12px;color:#555b6c">1821.5</div>
<div class="a" style="left:1685.500px;top:457px;line-height:17px;font-size:12px;color:#b1b5bd">日涨跌</div>
<svg class="i" style="left:1575px;top:490px" width="172" height="112" viewBox="1575 490 172 112"><path d="M1575 494.700L1660.200 579.100V598.800H1575z" fill="#d3ece0"/><path d="M1575 494.700L1660.200 579.100" stroke="#5fba8e" stroke-width="1.200" fill="none"/><rect x="1745" y="512" width="3" height="87" fill="#fbd5da"/><path d="M1745 512V599M1745 512h3" stroke="#ef7f90" stroke-width="1" fill="none"/></svg>
<div class="a" style="left:1575.500px;top:506px;line-height:17px;font-size:12px;color:#b4bcc0">6000</div>
<div class="a" style="left:1575.500px;top:533.5px;line-height:17px;font-size:12px;color:#b4bcc0">4000</div>
<div class="a" style="left:1575.500px;top:561.5px;line-height:17px;font-size:12px;color:#b4bcc0">2000</div>
<div class="a" style="left:1728.500px;top:595.500px;line-height:17px;font-size:12px;color:#a8adb8">₮1225</div>
<div class="pill" style="left:1589px;top:621px;width:72px">多空信号</div><div class="dot" style="left:1653.300px;top:620.800px"></div>
<div class="pill" style="left:1667px;top:621px;width:72px">主力跟踪</div><div class="dot" style="left:1731px;top:620.800px"></div>
<div class="pill" style="left:1745px;top:621px;width:72px"></div>
<div class="a" style="left:1575px;top:655px;width:172px;height:5.500px;background:#f0f2f5"></div>
<div class="a" style="left:1587px;top:673px;width:72px;height:58px;border-radius:4px;background:#f2f3f5"></div>
<div class="a" style="left:1587px;top:683px;width:72px;text-align:center;line-height:20px;font-size:17px;font-weight:bold;color:#a6aab3">--</div>
<div class="a" style="left:1587px;top:705px;width:72px;text-align:center;line-height:17px;font-size:12px;color:#b4b8c0;letter-spacing:-0.300px">技术分析</div>
<div class="a" style="left:1666px;top:673px;width:73px;height:58px;border-radius:4px;background:#eeeffc"></div>
<div class="a" style="left:1681px;top:683px;line-height:20px;font-size:17.500px;font-weight:bold;color:#7c7fe2">1.54</div>
<svg class="i" style="left:1719px;top:691px" width="8" height="8" viewBox="0 0 8 8"><path d="M1 1l5.500 5.500M2.500 6.500h4v-4" stroke="#7c7fe2" stroke-width="1.100" fill="none"/></svg>
<div class="a" style="left:1666px;top:705px;width:73px;text-align:center;line-height:17px;font-size:12px;color:#b4b8c0;letter-spacing:-0.500px">BTC多空比</div>
<div class="a" style="left:1745.800px;top:673px;width:10px;height:58px;border-radius:4px;background:#eeeffc"></div>
<div class="a" style="left:1587px;top:748px;width:2px;height:10px;background:#3d80e6"></div>
<div class="a" style="left:1593.500px;top:744px;line-height:19px;font-size:14px;font-weight:bold;color:#111">市场机会</div>
<div class="a" style="left:1587px;top:768.500px;width:170px;height:61px;border-radius:4px;background:#fff;box-shadow:0 1px 8px rgba(30,40,80,.09)"></div>
<div class="a" style="left:1594px;top:779px;line-height:26px;font-size:21.500px;color:#3fae7c">23709<span style="font-size:13px">%</span></div>
<div class="a" style="left:1604px;top:805px;line-height:17px;font-size:12px;color:#8a8f9c">累计收益</div>
<div class="sep" style="left:1669px;top:785px;height:28px;background:#eef0f3"></div>
<div class="a" style="left:1681px;top:779px;line-height:20px;font-size:14.500px;color:#111">智胜2号 ETH</div>
<div class="a" style="left:1681px;top:802px;height:16.500px;line-height:16.500px;font-size:12.500px;color:#f0813f;background:#fdece4;padding:0 0.500px">高收益</div>
<div class="a" style="left:1723px;top:802px;line-height:16.500px;font-size:12.500px;color:#555b6c">历史收</div>
<div class="a" style="left:1587px;top:836px;width:170px;height:61px;border-radius:4px;background:#fff;box-shadow:0 1px 8px rgba(30,40,80,.09)"></div>
<div class="a" style="left:1610.500px;top:847px;line-height:26px;font-size:21.500px;color:#3fae7c">49<span style="font-size:13px">%</span></div>
<div class="a" style="left:1604px;top:872px;line-height:17px;font-size:12px;color:#8a8f9c">当前年化</div>
<div class="sep" style="left:1669px;top:852px;height:28px;background:#eef0f3"></div>
<div class="a" style="left:1681px;top:847px;line-height:20px;font-size:14.500px;color:#111">费率套利 F</div>
<div class="a" style="left:1681px;top:869px;height:16.500px;line-height:16.500px;font-size:12.500px;color:#3d80e6;background:#dfeafc;padding:0 0.500px">低风险</div>
<div class="a" style="left:1723px;top:869px;line-height:16.500px;font-size:12.500px;color:#555b6c">投入</div>
<svg class="i" style="left:1562px;top:842px" width="13" height="38" viewBox="0 0 13 38"><path d="M13 0v38l-9-3.500q-2.500-1-2.500-3.500V7q0-2.500 2.500-3.500z" fill="#fff"/><path d="M6 15.500l3 3.500-3 3.500" stroke="#555" stroke-width="1.200" fill="none"/></svg>
</body></html>
